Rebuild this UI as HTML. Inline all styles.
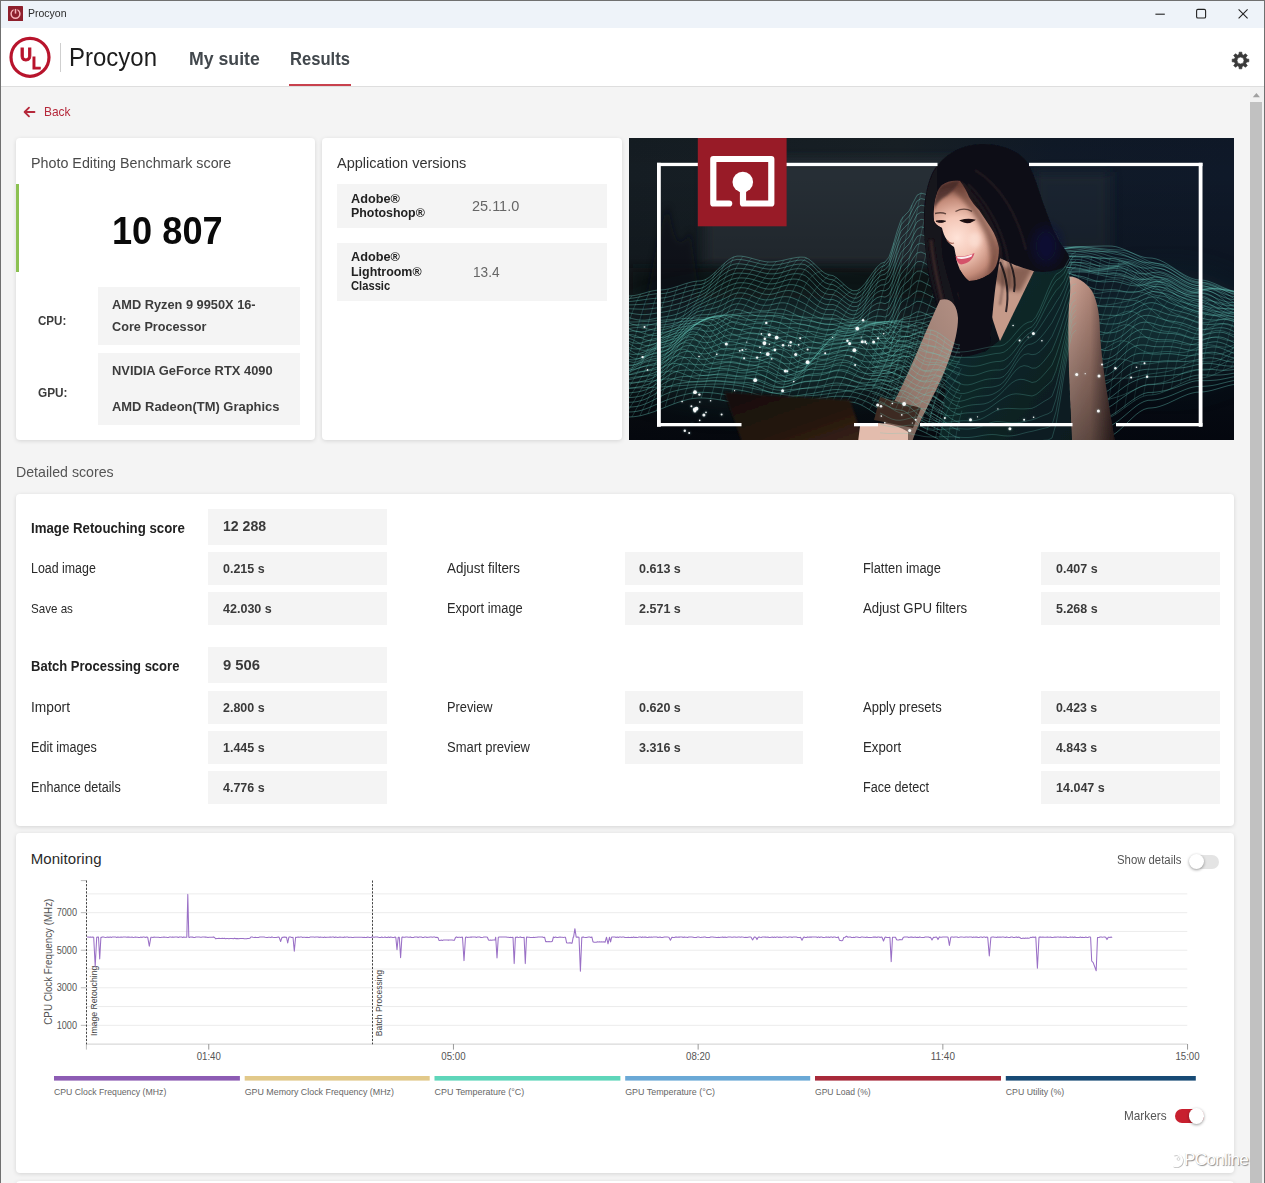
<!DOCTYPE html>
<html lang="en"><head><meta charset="utf-8"><title>Procyon</title>
<style>
html,body{margin:0;padding:0}
body{width:1265px;height:1183px;position:relative;overflow:hidden;background:#f4f4f4;font-family:"Liberation Sans",sans-serif}
.t{position:absolute;white-space:nowrap;line-height:1;display:block;transform-origin:0 0}
.abs{position:absolute}
.card{position:absolute;background:#fff;border-radius:4px;box-shadow:0 1px 4px rgba(0,0,0,.13)}
.box{position:absolute;background:#f4f4f4}
</style></head><body>

<div class="abs" style="left:0;top:0;width:1265px;height:28px;background:#eef3f9"></div>
<div class="abs" style="left:0;top:28px;width:1265px;height:58px;background:#fff"></div>
<div class="abs" style="left:0;top:86px;width:1265px;height:1px;background:#dedede"></div>
<svg class="abs" style="left:8px;top:6px" width="15" height="15" viewBox="0 0 15 15"><rect width="15" height="15" rx=".6" fill="#8e1f2c"/><circle cx="7.5" cy="7.8" r="4.4" fill="none" stroke="#f6b4ba" stroke-width="1.5"/><rect x="5.6" y="2.4" width="3.8" height="3.4" fill="#8e1f2c"/><rect x="6.75" y="3" width="1.5" height="4.6" fill="#f6b4ba"/></svg>
<span class="t" style="left:27.60px;top:8.42px;font-size:11.20px;transform:scaleX(0.9394);color:#2b2b2b;">Procyon</span>
<svg class="abs" style="left:1140px;top:0" width="125" height="28" viewBox="0 0 125 28" fill="none" stroke="#222" stroke-width="1.1">
<path d="M15.4 14.2H24.8"/><rect x="56.6" y="9.4" width="9" height="8.6" rx="1.3"/><path d="M98.6 9.4l9 9M107.6 9.4l-9 9"/></svg>
<svg class="abs" style="left:8px;top:35px" width="45" height="45" viewBox="0 0 45 45">
<circle cx="22" cy="22.3" r="19" fill="#fff" stroke="#b8142c" stroke-width="3.2"/>
</svg>
<span class="t" style="left:20.20px;top:46.47px;font-size:18.94px;transform:scaleX(0.8700);color:#b8142c;font-weight:700;-webkit-text-stroke:1px #b8142c;">U</span>
<span class="t" style="left:31.50px;top:55.44px;font-size:16.37px;transform:scaleX(0.8700);color:#b8142c;font-weight:700;-webkit-text-stroke:1px #b8142c;">L</span>
<div class="abs" style="left:59.5px;top:43px;width:1px;height:29px;background:#cfcfcf"></div>
<span class="t" style="left:69.30px;top:45.33px;font-size:25.60px;transform:scaleX(0.9370);color:#1c1c1c;">Procyon</span>
<span class="t" style="left:188.50px;top:49.86px;font-size:18.60px;transform:scaleX(0.9514);color:#42484d;font-weight:700;">My suite</span>
<span class="t" style="left:290.20px;top:49.86px;font-size:18.60px;transform:scaleX(0.8930);color:#42484d;font-weight:700;">Results</span>
<div class="abs" style="left:289.4px;top:84px;width:61.2px;height:2px;background:#c8414d"></div>
<svg class="abs" style="left:1230px;top:50px" width="21" height="21" viewBox="-10.5 -10.5 21 21"><path d="M6.02 -1.47 L8.29 -1.34 L8.29 1.34 L6.02 1.47 L5.30 3.22 L6.81 4.92 L4.92 6.81 L3.22 5.30 L1.47 6.02 L1.34 8.29 L-1.34 8.29 L-1.47 6.02 L-3.22 5.30 L-4.92 6.81 L-6.81 4.92 L-5.30 3.22 L-6.02 1.47 L-8.29 1.34 L-8.29 -1.34 L-6.02 -1.47 L-5.30 -3.22 L-6.81 -4.92 L-4.92 -6.81 L-3.22 -5.30 L-1.47 -6.02 L-1.34 -8.29 L1.34 -8.29 L1.47 -6.02 L3.22 -5.30 L4.92 -6.81 L6.81 -4.92 L5.30 -3.22Z M3.5 0A3.5 3.5 0 1 0 -3.5 0A3.5 3.5 0 1 0 3.5 0Z" fill="#3a3a3a" fill-rule="evenodd" stroke="#3a3a3a" stroke-width="0.7" stroke-linejoin="round"/></svg>
<svg class="abs" style="left:23px;top:106px" width="13" height="12" viewBox="0 0 13 12" fill="none" stroke="#b5283a" stroke-width="1.8" stroke-linecap="round" stroke-linejoin="round"><path d="M11.5 6H2M6 1.6L1.6 6L6 10.4"/></svg>
<span class="t" style="left:44.30px;top:105.49px;font-size:13.60px;transform:scaleX(0.8765);color:#b5283a;">Back</span>
<div class="abs" style="left:1250px;top:87px;width:14px;height:1096px;background:#f1f1f1"></div>
<div class="abs" style="left:1250px;top:102px;width:12px;height:1081px;background:#c1c1c1"></div>
<svg class="abs" style="left:1252px;top:92px" width="9" height="6" viewBox="0 0 9 6"><path d="M0.8 5.2L4.4 1L8 5.2Z" fill="#a0a0a0"/></svg>
<div class="card" style="left:15.5px;top:138px;width:299.5px;height:301.5px"></div>
<div class="card" style="left:322px;top:138px;width:299.5px;height:301.5px"></div>
<span class="t" style="left:30.90px;top:154.50px;font-size:15.00px;transform:scaleX(0.9533);color:#4a4a4a;">Photo Editing Benchmark score</span>
<div class="abs" style="left:15.5px;top:184px;width:3.5px;height:88px;background:#8cc152"></div>
<span class="t" style="left:111.60px;top:212.13px;font-size:38.00px;transform:scaleX(0.9516);color:#0a0a0a;font-weight:700;">10 807</span>
<div class="box" style="left:98px;top:287px;width:202px;height:58px"></div>
<div class="box" style="left:98px;top:352.6px;width:202px;height:72.6px"></div>
<span class="t" style="left:38.00px;top:313.54px;font-size:13.31px;transform:scaleX(0.8700);color:#3c3c3c;font-weight:700;">CPU:</span>
<span class="t" style="left:38.00px;top:385.92px;font-size:13.56px;transform:scaleX(0.8700);color:#3c3c3c;font-weight:700;">GPU:</span>
<span class="t" style="left:112.30px;top:298.39px;font-size:13.60px;transform:scaleX(0.9411);color:#3c3c3c;font-weight:700;">AMD Ryzen 9 9950X 16-</span>
<span class="t" style="left:112.30px;top:320.09px;font-size:13.60px;transform:scaleX(0.9320);color:#3c3c3c;font-weight:700;">Core Processor</span>
<span class="t" style="left:112.30px;top:363.59px;font-size:13.60px;transform:scaleX(0.9478);color:#3c3c3c;font-weight:700;">NVIDIA GeForce RTX 4090</span>
<span class="t" style="left:112.30px;top:400.29px;font-size:13.60px;transform:scaleX(0.9514);color:#3c3c3c;font-weight:700;">AMD Radeon(TM) Graphics</span>
<span class="t" style="left:337.00px;top:154.50px;font-size:15.00px;transform:scaleX(0.9692);color:#333;">Application versions</span>
<div class="box" style="left:337px;top:184.4px;width:269.7px;height:43.5px"></div>
<div class="box" style="left:337px;top:243.1px;width:269.7px;height:58.2px"></div>
<span class="t" style="left:351.20px;top:191.89px;font-size:13.60px;transform:scaleX(0.9326);color:#222;font-weight:700;">Adobe®</span>
<span class="t" style="left:351.20px;top:206.49px;font-size:13.60px;transform:scaleX(0.9108);color:#222;font-weight:700;">Photoshop®</span>
<span class="t" style="left:472.10px;top:198.13px;font-size:15.20px;transform:scaleX(0.9539);color:#666;">25.11.0</span>
<span class="t" style="left:351.20px;top:250.29px;font-size:13.60px;transform:scaleX(0.9326);color:#222;font-weight:700;">Adobe®</span>
<span class="t" style="left:351.20px;top:265.19px;font-size:13.60px;transform:scaleX(0.9139);color:#222;font-weight:700;">Lightroom®</span>
<span class="t" style="left:351.20px;top:280.21px;font-size:12.86px;transform:scaleX(0.8700);color:#222;font-weight:700;">Classic</span>
<span class="t" style="left:472.60px;top:263.83px;font-size:15.20px;transform:scaleX(0.8991);color:#666;">13.4</span>
<svg class="abs" style="left:629px;top:138px" width="605" height="302" viewBox="629 138 605 302">
<defs>
<filter id="b6" x="-30%" y="-30%" width="160%" height="160%"><feGaussianBlur stdDeviation="6"/></filter>
<filter id="b3" x="-30%" y="-30%" width="160%" height="160%"><feGaussianBlur stdDeviation="3"/></filter>
<filter id="b2" x="-30%" y="-30%" width="160%" height="160%"><feGaussianBlur stdDeviation="2"/></filter>
<filter id="b1" x="-30%" y="-30%" width="160%" height="160%"><feGaussianBlur stdDeviation="1.1"/></filter>
<filter id="b05" x="-10%" y="-10%" width="120%" height="120%"><feGaussianBlur stdDeviation="0.6"/></filter>
<filter id="b20" x="-50%" y="-50%" width="200%" height="200%"><feGaussianBlur stdDeviation="22"/></filter>
<linearGradient id="bgx" x1="0" x2="1" y1="0" y2="0"><stop offset="0" stop-color="#151d23"/><stop offset=".45" stop-color="#182026"/><stop offset=".7" stop-color="#101a28"/><stop offset="1" stop-color="#0f1929"/></linearGradient>
<linearGradient id="bgy" x1="0" x2="0" y1="0" y2="1"><stop offset="0" stop-color="#000" stop-opacity=".05"/><stop offset=".12" stop-color="#000" stop-opacity="0"/><stop offset=".55" stop-color="#000" stop-opacity=".25"/><stop offset="1" stop-color="#02040a" stop-opacity=".85"/></linearGradient>
<radialGradient id="face" gradientUnits="userSpaceOnUse" cx="957" cy="238" r="52"><stop offset="0" stop-color="#ffe3d8"/><stop offset=".4" stop-color="#f3c6b6"/><stop offset=".75" stop-color="#c48c7a"/><stop offset="1" stop-color="#7a4c42"/></radialGradient>
<linearGradient id="arm" x1="0" x2="1" y1="0" y2="0"><stop offset="0" stop-color="#d3a99b"/><stop offset=".5" stop-color="#b58a7c"/><stop offset="1" stop-color="#3f2a2b"/></linearGradient>
<linearGradient id="armv" x1="0" x2="0" y1="0" y2="1"><stop offset="0" stop-color="#000" stop-opacity="0"/><stop offset="1" stop-color="#000" stop-opacity=".5"/></linearGradient>
<linearGradient id="arm2" x1="1" x2="0" y1="0" y2="1"><stop offset="0" stop-color="#b28f83"/><stop offset=".6" stop-color="#94786d"/><stop offset="1" stop-color="#5e4a42"/></linearGradient>
<linearGradient id="dress" x1="0" x2="1" y1="0" y2="1"><stop offset="0" stop-color="#14302f"/><stop offset="1" stop-color="#0b1a1f"/></linearGradient>
<linearGradient id="lap" x1="0" x2="1" y1="0" y2="1"><stop offset="0" stop-color="#150e0c"/><stop offset=".6" stop-color="#24160f"/><stop offset="1" stop-color="#3a2415"/></linearGradient>
<clipPath id="pc"><rect x="629" y="138" width="605" height="302"/></clipPath>
</defs>
<g clip-path="url(#pc)">
<rect x="629" y="138" width="605" height="302" fill="url(#bgx)"/>
<rect x="705" y="160" width="300" height="106" fill="#272f34" filter="url(#b6)"/>
<rect x="629" y="268" width="400" height="30" fill="#0d1319" filter="url(#b6)" opacity=".8"/>
<rect x="1034" y="172" width="76" height="80" fill="#1c2530" filter="url(#b6)" opacity=".9"/>
<rect x="629" y="138" width="605" height="302" fill="url(#bgy)"/>
<path d="M640 330C650 290 655 240 668 205C672 230 678 260 690 230C694 260 700 290 700 330Z" fill="#0a0f15" opacity=".6" filter="url(#b3)"/>
<ellipse cx="770" cy="350" rx="150" ry="42" fill="#1c5552" filter="url(#b20)" opacity=".45"/>
<ellipse cx="1165" cy="330" rx="80" ry="42" fill="#1c5552" filter="url(#b20)" opacity=".42"/>
<path d="M625.0 296.0 L629.0 296.0 L633.0 295.7 L637.0 295.0 L641.0 294.0 L645.0 292.9 L649.0 291.7 L653.0 290.8 L657.0 290.2 L661.0 290.0 L665.0 289.6 L669.0 288.8 L673.0 287.8 L677.0 286.5 L681.0 285.2 L685.0 283.8 L689.0 282.7 L693.0 281.7 L697.0 281.1 L701.0 280.9 L705.0 279.8 L709.0 277.5 L713.0 274.2 L717.0 270.5 L721.0 266.5 L725.0 262.8 L729.0 259.5 L733.0 257.2 L737.0 256.1 L741.0 256.1 L745.0 256.7 L749.0 257.6 L753.0 258.7 L757.0 259.8 L761.0 260.8 L765.0 261.6 L769.0 262.0 L773.0 261.9 L777.0 261.4 L781.0 260.7 L785.0 259.8 L789.0 258.9 L793.0 258.1 L797.0 257.4 L801.0 257.1 L805.0 257.3 L809.0 259.3 L813.0 262.6 L817.0 266.5 L821.0 270.3 L825.0 273.4 L829.0 274.9 L833.0 275.6 L837.0 278.1 L841.0 281.6 L845.0 285.4 L849.0 288.7 L853.0 290.7 L857.0 290.6 L861.0 288.0 L865.0 283.5 L869.0 277.9 L873.0 272.2 L877.0 267.1 L881.0 263.4 L885.0 262.0 L889.0 257.1 L893.0 245.5 L897.0 231.5 L901.0 219.9 L905.0 215.0 L909.0 211.1 L913.0 202.9 L917.0 195.3 L921.0 193.1 L925.0 194.1 L929.0 196.0 L933.0 198.0 L937.0 199.6 L941.0 200.2 L945.0 204.7 L949.0 212.8 L953.0 221.5 L957.0 228.2 L961.0 230.0 M625.0 298.6 L629.0 298.5 L633.0 298.1 L637.0 297.4 L641.0 296.6 L645.0 295.7 L649.0 294.8 L653.0 294.2 L657.0 293.7 L661.0 293.7 L665.0 293.3 L669.0 292.5 L673.0 291.4 L677.0 290.2 L681.0 288.9 L685.0 287.7 L689.0 286.5 L693.0 285.6 L697.0 284.9 L701.0 284.5 L705.0 283.1 L709.0 280.5 L713.0 277.0 L717.0 273.1 L721.0 269.1 L725.0 265.5 L729.0 262.5 L733.0 260.3 L737.0 259.4 L741.0 259.6 L745.0 260.2 L749.0 261.0 L753.0 262.0 L757.0 263.0 L761.0 264.0 L765.0 264.7 L769.0 265.2 L773.0 265.2 L777.0 264.8 L781.0 264.1 L785.0 263.2 L789.0 262.2 L793.0 261.2 L797.0 260.4 L801.0 260.0 L805.0 260.4 L809.0 262.6 L813.0 266.1 L817.0 270.3 L821.0 274.3 L825.0 277.5 L829.0 279.2 L833.0 279.8 L837.0 282.1 L841.0 285.4 L845.0 289.0 L849.0 292.2 L853.0 294.2 L857.0 294.1 L861.0 291.5 L865.0 287.1 L869.0 281.6 L873.0 275.8 L877.0 270.6 L881.0 266.9 L885.0 265.4 L889.0 260.7 L893.0 249.4 L897.0 236.1 L901.0 224.9 L905.0 220.3 L909.0 216.6 L913.0 208.5 L917.0 201.0 L921.0 198.6 L925.0 199.5 L929.0 201.2 L933.0 203.1 L937.0 204.7 L941.0 205.4 L945.0 209.9 L949.0 217.8 L953.0 226.4 L957.0 232.9 L961.0 234.6 M625.0 301.8 L629.0 301.5 L633.0 301.2 L637.0 300.7 L641.0 300.1 L645.0 299.5 L649.0 299.0 L653.0 298.5 L657.0 298.2 L661.0 298.1 L665.0 297.7 L669.0 296.8 L673.0 295.7 L677.0 294.5 L681.0 293.3 L685.0 292.1 L689.0 291.0 L693.0 290.0 L697.0 289.0 L701.0 288.3 L705.0 286.5 L709.0 283.6 L713.0 280.0 L717.0 276.2 L721.0 272.4 L725.0 269.0 L729.0 266.3 L733.0 264.4 L737.0 263.7 L741.0 263.9 L745.0 264.4 L749.0 265.1 L753.0 266.0 L757.0 266.9 L761.0 267.9 L765.0 268.7 L769.0 269.2 L773.0 269.3 L777.0 269.0 L781.0 268.2 L785.0 267.2 L789.0 266.1 L793.0 265.0 L797.0 264.3 L801.0 264.0 L805.0 264.6 L809.0 267.1 L813.0 270.9 L817.0 275.3 L821.0 279.4 L825.0 282.6 L829.0 284.1 L833.0 284.6 L837.0 286.7 L841.0 289.8 L845.0 293.2 L849.0 296.3 L853.0 298.2 L857.0 298.1 L861.0 295.6 L865.0 291.1 L869.0 285.6 L873.0 279.8 L877.0 274.6 L881.0 271.0 L885.0 269.6 L889.0 265.2 L893.0 254.5 L897.0 241.8 L901.0 231.2 L905.0 226.8 L909.0 223.1 L913.0 215.2 L917.0 207.7 L921.0 205.2 L925.0 205.9 L929.0 207.5 L933.0 209.5 L937.0 211.1 L941.0 212.0 L945.0 216.4 L949.0 224.2 L953.0 232.5 L957.0 238.8 L961.0 240.5 M625.0 305.1 L629.0 304.9 L633.0 304.8 L637.0 304.6 L641.0 304.4 L645.0 304.1 L649.0 303.8 L653.0 303.3 L657.0 303.0 L661.0 302.8 L665.0 302.2 L669.0 301.4 L673.0 300.3 L677.0 299.2 L681.0 298.1 L685.0 296.9 L689.0 295.6 L693.0 294.3 L697.0 293.0 L701.0 291.9 L705.0 289.8 L709.0 286.7 L713.0 283.2 L717.0 279.5 L721.0 276.1 L725.0 273.1 L729.0 270.7 L733.0 269.0 L737.0 268.3 L741.0 268.4 L745.0 268.8 L749.0 269.4 L753.0 270.2 L757.0 271.2 L761.0 272.2 L765.0 273.2 L769.0 273.8 L773.0 273.9 L777.0 273.5 L781.0 272.7 L785.0 271.5 L789.0 270.3 L793.0 269.2 L797.0 268.7 L801.0 268.7 L805.0 269.7 L809.0 272.5 L813.0 276.5 L817.0 281.0 L821.0 285.0 L825.0 288.0 L829.0 289.3 L833.0 289.6 L837.0 291.4 L841.0 294.3 L845.0 297.6 L849.0 300.6 L853.0 302.4 L857.0 302.3 L861.0 299.7 L865.0 295.2 L869.0 289.6 L873.0 283.8 L877.0 278.8 L881.0 275.3 L885.0 274.2 L889.0 270.3 L893.0 260.3 L897.0 248.2 L901.0 238.0 L905.0 233.7 L909.0 230.0 L913.0 222.1 L917.0 214.6 L921.0 212.1 L925.0 212.8 L929.0 214.4 L933.0 216.5 L937.0 218.3 L941.0 219.2 L945.0 223.6 L949.0 231.1 L953.0 239.2 L957.0 245.2 L961.0 247.0 M625.0 308.7 L629.0 308.7 L633.0 308.9 L637.0 309.1 L641.0 309.2 L645.0 309.2 L649.0 308.9 L653.0 308.4 L657.0 307.9 L661.0 307.6 L665.0 307.0 L669.0 306.1 L673.0 305.1 L677.0 304.1 L681.0 302.9 L685.0 301.7 L689.0 300.1 L693.0 298.5 L697.0 296.7 L701.0 295.2 L705.0 292.9 L709.0 289.8 L713.0 286.5 L717.0 283.2 L721.0 280.2 L725.0 277.6 L729.0 275.5 L733.0 273.9 L737.0 273.1 L741.0 273.1 L745.0 273.4 L749.0 273.9 L753.0 274.7 L757.0 275.8 L761.0 277.0 L765.0 278.1 L769.0 278.8 L773.0 278.8 L777.0 278.3 L781.0 277.2 L785.0 275.9 L789.0 274.7 L793.0 273.9 L797.0 273.6 L801.0 274.1 L805.0 275.5 L809.0 278.6 L813.0 282.7 L817.0 287.1 L821.0 290.9 L825.0 293.5 L829.0 294.5 L833.0 294.6 L837.0 296.2 L841.0 299.0 L845.0 302.2 L849.0 305.0 L853.0 306.7 L857.0 306.4 L861.0 303.6 L865.0 299.0 L869.0 293.5 L873.0 287.8 L877.0 283.0 L881.0 279.9 L885.0 279.3 L889.0 275.9 L893.0 266.6 L897.0 255.1 L901.0 245.2 L905.0 240.8 L909.0 237.0 L913.0 229.1 L917.0 221.8 L921.0 219.3 L925.0 220.0 L929.0 221.9 L933.0 224.1 L937.0 226.0 L941.0 227.1 L945.0 231.3 L949.0 238.5 L953.0 246.3 L957.0 252.2 L961.0 254.1 M625.0 312.5 L629.0 312.9 L633.0 313.6 L637.0 314.2 L641.0 314.6 L645.0 314.6 L649.0 314.3 L653.0 313.7 L657.0 313.0 L661.0 312.5 L665.0 311.8 L669.0 311.0 L673.0 310.1 L677.0 309.1 L681.0 307.9 L685.0 306.3 L689.0 304.4 L693.0 302.2 L697.0 300.1 L701.0 298.2 L705.0 295.9 L709.0 293.0 L713.0 290.0 L717.0 287.2 L721.0 284.7 L725.0 282.5 L729.0 280.5 L733.0 279.0 L737.0 278.1 L741.0 277.9 L745.0 278.1 L749.0 278.6 L753.0 279.5 L757.0 280.8 L761.0 282.1 L765.0 283.3 L769.0 283.9 L773.0 283.8 L777.0 283.1 L781.0 281.9 L785.0 280.6 L789.0 279.5 L793.0 279.0 L797.0 279.2 L801.0 280.2 L805.0 282.0 L809.0 285.2 L813.0 289.3 L817.0 293.3 L821.0 296.7 L825.0 298.9 L829.0 299.6 L833.0 299.5 L837.0 301.1 L841.0 303.7 L845.0 306.8 L849.0 309.4 L853.0 310.9 L857.0 310.3 L861.0 307.4 L865.0 302.7 L869.0 297.2 L873.0 291.9 L877.0 287.5 L881.0 285.0 L885.0 284.8 L889.0 281.9 L893.0 273.2 L897.0 262.2 L901.0 252.5 L905.0 248.0 L909.0 244.0 L913.0 236.2 L917.0 229.1 L921.0 226.8 L925.0 227.8 L929.0 229.8 L933.0 232.2 L937.0 234.2 L941.0 235.3 L945.0 239.3 L949.0 246.2 L953.0 253.8 L957.0 259.7 L961.0 261.9 M625.0 316.9 L629.0 317.7 L633.0 318.8 L637.0 319.7 L641.0 320.2 L645.0 320.2 L649.0 319.7 L653.0 318.9 L657.0 318.0 L661.0 317.4 L665.0 316.8 L669.0 316.0 L673.0 315.2 L677.0 314.1 L681.0 312.6 L685.0 310.7 L689.0 308.3 L693.0 305.7 L697.0 303.1 L701.0 301.1 L705.0 298.9 L709.0 296.4 L713.0 294.0 L717.0 291.7 L721.0 289.6 L725.0 287.6 L729.0 285.7 L733.0 284.1 L737.0 283.0 L741.0 282.7 L745.0 282.9 L749.0 283.5 L753.0 284.7 L757.0 286.1 L761.0 287.6 L765.0 288.7 L769.0 289.2 L773.0 288.9 L777.0 287.9 L781.0 286.7 L785.0 285.5 L789.0 284.7 L793.0 284.7 L797.0 285.5 L801.0 286.9 L805.0 289.0 L809.0 292.2 L813.0 296.0 L817.0 299.6 L821.0 302.4 L825.0 304.2 L829.0 304.7 L833.0 304.5 L837.0 306.0 L841.0 308.5 L845.0 311.4 L849.0 313.8 L853.0 314.9 L857.0 314.0 L861.0 310.9 L865.0 306.2 L869.0 301.0 L873.0 296.1 L877.0 292.4 L881.0 290.5 L885.0 290.8 L889.0 288.3 L893.0 280.1 L897.0 269.4 L901.0 259.8 L905.0 255.1 L909.0 251.0 L913.0 243.4 L917.0 236.6 L921.0 234.7 L925.0 236.0 L929.0 238.2 L933.0 240.8 L937.0 242.8 L941.0 243.8 L945.0 247.6 L949.0 254.3 L953.0 261.7 L957.0 267.7 L961.0 270.3 M625.0 321.7 L629.0 323.0 L633.0 324.5 L637.0 325.6 L641.0 326.1 L645.0 325.9 L649.0 325.1 L653.0 324.0 L657.0 323.0 L661.0 322.4 L665.0 321.8 L669.0 321.1 L673.0 320.3 L677.0 319.0 L681.0 317.1 L685.0 314.7 L689.0 311.8 L693.0 308.7 L697.0 306.0 L701.0 304.1 L705.0 302.2 L709.0 300.2 L713.0 298.4 L717.0 296.6 L721.0 294.8 L725.0 292.9 L729.0 290.9 L733.0 289.2 L737.0 288.0 L741.0 287.7 L745.0 287.9 L749.0 288.8 L753.0 290.2 L757.0 291.8 L761.0 293.3 L765.0 294.3 L769.0 294.5 L773.0 294.0 L777.0 292.9 L781.0 291.7 L785.0 290.8 L789.0 290.5 L793.0 291.1 L797.0 292.4 L801.0 294.2 L805.0 296.4 L809.0 299.4 L813.0 302.7 L817.0 305.6 L821.0 308.0 L825.0 309.4 L829.0 309.6 L833.0 309.5 L837.0 310.9 L841.0 313.3 L845.0 316.0 L849.0 318.0 L853.0 318.6 L857.0 317.4 L861.0 314.2 L865.0 309.7 L869.0 304.9 L873.0 300.7 L877.0 297.7 L881.0 296.4 L885.0 297.1 L889.0 294.9 L893.0 287.0 L897.0 276.5 L901.0 266.9 L905.0 262.1 L909.0 258.0 L913.0 250.8 L917.0 244.6 L921.0 243.1 L925.0 244.7 L929.0 247.1 L933.0 249.6 L937.0 251.6 L941.0 252.5 L945.0 256.2 L949.0 262.8 L953.0 270.1 L957.0 276.4 L961.0 279.4 M625.0 327.1 L629.0 328.8 L633.0 330.5 L637.0 331.6 L641.0 331.9 L645.0 331.4 L649.0 330.3 L653.0 329.0 L657.0 328.0 L661.0 327.4 L665.0 326.9 L669.0 326.3 L673.0 325.2 L677.0 323.6 L681.0 321.2 L685.0 318.3 L689.0 314.9 L693.0 311.6 L697.0 308.9 L701.0 307.3 L705.0 305.9 L709.0 304.5 L713.0 303.2 L717.0 301.8 L721.0 300.2 L725.0 298.3 L729.0 296.2 L733.0 294.2 L737.0 293.0 L741.0 292.8 L745.0 293.3 L749.0 294.4 L753.0 296.0 L757.0 297.7 L761.0 299.1 L765.0 299.9 L769.0 299.8 L773.0 299.1 L777.0 298.0 L781.0 297.0 L785.0 296.6 L789.0 296.9 L793.0 298.1 L797.0 299.8 L801.0 301.8 L805.0 303.8 L809.0 306.4 L813.0 309.1 L817.0 311.5 L821.0 313.3 L825.0 314.4 L829.0 314.6 L833.0 314.5 L837.0 315.8 L841.0 318.1 L845.0 320.4 L849.0 321.9 L853.0 322.1 L857.0 320.6 L861.0 317.4 L865.0 313.2 L869.0 309.1 L873.0 305.6 L877.0 303.4 L881.0 302.7 L885.0 303.7 L889.0 301.7 L893.0 293.9 L897.0 283.5 L901.0 274.0 L905.0 269.1 L909.0 265.1 L913.0 258.5 L917.0 253.0 L921.0 252.0 L925.0 253.8 L929.0 256.3 L933.0 258.8 L937.0 260.6 L941.0 261.5 L945.0 265.2 L949.0 271.7 L953.0 279.2 L957.0 285.7 L961.0 289.1 M625.0 332.9 L629.0 335.0 L633.0 336.7 L637.0 337.6 L641.0 337.5 L645.0 336.7 L649.0 335.4 L653.0 334.0 L657.0 333.0 L661.0 332.5 L665.0 332.1 L669.0 331.3 L673.0 329.9 L677.0 327.8 L681.0 324.9 L685.0 321.4 L689.0 317.7 L693.0 314.4 L697.0 312.0 L701.0 310.8 L705.0 310.0 L709.0 309.3 L713.0 308.4 L717.0 307.3 L721.0 305.7 L725.0 303.6 L729.0 301.3 L733.0 299.4 L737.0 298.2 L741.0 298.2 L745.0 299.0 L749.0 300.4 L753.0 302.1 L757.0 303.8 L761.0 305.0 L765.0 305.4 L769.0 305.1 L773.0 304.3 L777.0 303.3 L781.0 302.8 L785.0 302.9 L789.0 303.9 L793.0 305.6 L797.0 307.6 L801.0 309.5 L805.0 311.2 L809.0 313.2 L813.0 315.2 L817.0 317.0 L821.0 318.4 L825.0 319.3 L829.0 319.5 L833.0 319.5 L837.0 320.8 L841.0 322.7 L845.0 324.6 L849.0 325.6 L853.0 325.4 L857.0 323.7 L861.0 320.7 L865.0 317.1 L869.0 313.7 L873.0 311.1 L877.0 309.6 L881.0 309.4 L885.0 310.4 L889.0 308.3 L893.0 300.6 L897.0 290.4 L901.0 281.0 L905.0 276.2 L909.0 272.6 L913.0 266.6 L917.0 261.8 L921.0 261.3 L925.0 263.3 L929.0 265.8 L933.0 268.2 L937.0 269.9 L941.0 270.8 L945.0 274.5 L949.0 281.1 L953.0 288.8 L957.0 295.6 L961.0 299.4 M625.0 339.1 L629.0 341.3 L633.0 342.9 L637.0 343.4 L641.0 343.0 L645.0 341.8 L649.0 340.4 L653.0 339.0 L657.0 338.1 L661.0 337.6 L665.0 337.1 L669.0 336.1 L673.0 334.3 L677.0 331.7 L681.0 328.2 L685.0 324.3 L689.0 320.5 L693.0 317.4 L697.0 315.4 L701.0 314.8 L705.0 314.7 L709.0 314.5 L713.0 313.9 L717.0 312.8 L721.0 311.1 L725.0 308.8 L729.0 306.5 L733.0 304.6 L737.0 303.7 L741.0 304.0 L745.0 305.1 L749.0 306.7 L753.0 308.4 L757.0 309.9 L761.0 310.8 L765.0 310.9 L769.0 310.5 L773.0 309.7 L777.0 309.1 L781.0 309.1 L785.0 309.9 L789.0 311.4 L793.0 313.4 L797.0 315.5 L801.0 317.1 L805.0 318.3 L809.0 319.6 L813.0 321.0 L817.0 322.3 L821.0 323.4 L825.0 324.3 L829.0 324.5 L833.0 324.5 L837.0 325.6 L841.0 327.2 L845.0 328.5 L849.0 329.0 L853.0 328.4 L857.0 326.8 L861.0 324.1 L865.0 321.3 L869.0 318.8 L873.0 317.0 L877.0 316.1 L881.0 316.2 L885.0 317.1 L889.0 314.8 L893.0 307.1 L897.0 297.1 L901.0 288.0 L905.0 283.6 L909.0 280.4 L913.0 275.2 L917.0 271.2 L921.0 271.0 L925.0 273.1 L929.0 275.5 L933.0 277.7 L937.0 279.3 L941.0 280.3 L945.0 284.2 L949.0 291.0 L953.0 299.0 L957.0 305.9 L961.0 309.8 M625.0 345.5 L629.0 347.6 L633.0 348.8 L637.0 349.0 L641.0 348.2 L645.0 346.8 L649.0 345.3 L653.0 344.0 L657.0 343.1 L661.0 342.7 L665.0 342.0 L669.0 340.6 L673.0 338.3 L677.0 335.1 L681.0 331.2 L685.0 327.1 L689.0 323.4 L693.0 320.7 L697.0 319.4 L701.0 319.4 L705.0 319.8 L709.0 320.0 L713.0 319.5 L717.0 318.3 L721.0 316.4 L725.0 314.1 L729.0 311.7 L733.0 310.0 L737.0 309.4 L741.0 310.1 L745.0 311.5 L749.0 313.2 L753.0 314.8 L757.0 316.0 L761.0 316.6 L765.0 316.4 L769.0 315.9 L773.0 315.4 L777.0 315.3 L781.0 315.9 L785.0 317.3 L789.0 319.3 L793.0 321.5 L797.0 323.3 L801.0 324.5 L805.0 325.0 L809.0 325.6 L813.0 326.5 L817.0 327.4 L821.0 328.4 L825.0 329.3 L829.0 329.6 L833.0 329.5 L837.0 330.3 L841.0 331.4 L845.0 332.1 L849.0 332.2 L853.0 331.5 L857.0 330.0 L861.0 328.0 L865.0 326.0 L869.0 324.3 L873.0 323.3 L877.0 322.9 L881.0 323.0 L885.0 323.6 L889.0 321.1 L893.0 313.5 L897.0 303.9 L901.0 295.3 L905.0 291.3 L909.0 288.7 L913.0 284.3 L917.0 280.9 L921.0 281.0 L925.0 283.1 L929.0 285.3 L933.0 287.3 L937.0 289.0 L941.0 290.3 L945.0 294.5 L949.0 301.5 L953.0 309.6 L957.0 316.6 L961.0 320.4 M625.0 352.0 L629.0 353.7 L633.0 354.5 L637.0 354.2 L641.0 353.1 L645.0 351.6 L649.0 350.2 L653.0 349.0 L657.0 348.2 L661.0 347.7 L665.0 346.7 L669.0 344.8 L673.0 341.9 L677.0 338.2 L681.0 334.0 L685.0 330.0 L689.0 326.7 L693.0 324.6 L697.0 323.9 L701.0 324.5 L705.0 325.3 L709.0 325.6 L713.0 325.1 L717.0 323.8 L721.0 321.7 L725.0 319.3 L729.0 317.1 L733.0 315.8 L737.0 315.5 L741.0 316.5 L745.0 318.1 L749.0 319.8 L753.0 321.2 L757.0 322.1 L761.0 322.3 L765.0 322.0 L769.0 321.6 L773.0 321.5 L777.0 322.0 L781.0 323.3 L785.0 325.2 L789.0 327.4 L793.0 329.4 L797.0 330.8 L801.0 331.4 L805.0 331.3 L809.0 331.3 L813.0 331.7 L817.0 332.5 L821.0 333.4 L825.0 334.3 L829.0 334.6 L833.0 334.4 L837.0 334.8 L841.0 335.4 L845.0 335.6 L849.0 335.4 L853.0 334.7 L857.0 333.7 L861.0 332.4 L865.0 331.2 L869.0 330.4 L873.0 329.9 L877.0 329.7 L881.0 329.6 L885.0 329.9 L889.0 327.2 L893.0 319.9 L897.0 310.7 L901.0 302.8 L905.0 299.5 L909.0 297.5 L913.0 293.9 L917.0 291.0 L921.0 291.3 L925.0 293.2 L929.0 295.2 L933.0 297.2 L937.0 299.0 L941.0 300.7 L945.0 305.2 L949.0 312.5 L953.0 320.6 L957.0 327.4 L961.0 330.8 M625.0 358.2 L629.0 359.5 L633.0 359.9 L637.0 359.2 L641.0 357.9 L645.0 356.4 L649.0 355.1 L653.0 354.0 L657.0 353.2 L661.0 352.5 L665.0 351.0 L669.0 348.6 L673.0 345.2 L677.0 341.1 L681.0 336.9 L685.0 333.2 L689.0 330.4 L693.0 329.0 L697.0 329.0 L701.0 330.1 L705.0 331.1 L709.0 331.3 L713.0 330.7 L717.0 329.1 L721.0 326.9 L725.0 324.6 L729.0 322.8 L733.0 321.8 L737.0 322.0 L741.0 323.3 L745.0 324.9 L749.0 326.4 L753.0 327.5 L757.0 328.0 L761.0 328.0 L765.0 327.8 L769.0 327.7 L773.0 328.1 L777.0 329.2 L781.0 331.1 L785.0 333.3 L789.0 335.4 L793.0 337.1 L797.0 337.9 L801.0 337.8 L805.0 337.1 L809.0 336.7 L813.0 336.9 L817.0 337.5 L821.0 338.5 L825.0 339.4 L829.0 339.6 L833.0 339.1 L837.0 339.1 L841.0 339.1 L845.0 339.0 L849.0 338.7 L853.0 338.2 L857.0 337.7 L861.0 337.2 L865.0 336.9 L869.0 336.7 L873.0 336.5 L877.0 336.4 L881.0 336.1 L885.0 336.0 L889.0 333.2 L893.0 326.3 L897.0 317.9 L901.0 310.8 L905.0 308.1 L909.0 306.8 L913.0 303.8 L917.0 301.3 L921.0 301.6 L925.0 303.3 L929.0 305.3 L933.0 307.3 L937.0 309.3 L941.0 311.5 L945.0 316.4 L949.0 323.8 L953.0 331.6 L957.0 338.0 L961.0 340.9 M625.0 364.2 L629.0 365.0 L633.0 364.9 L637.0 364.0 L641.0 362.6 L645.0 361.2 L649.0 360.0 L653.0 359.0 L657.0 358.1 L661.0 357.0 L665.0 355.0 L669.0 352.0 L673.0 348.3 L677.0 344.1 L681.0 340.1 L685.0 336.9 L689.0 334.8 L693.0 334.1 L697.0 334.6 L701.0 335.9 L705.0 336.9 L709.0 337.0 L713.0 336.1 L717.0 334.3 L721.0 332.2 L725.0 330.2 L729.0 328.7 L733.0 328.2 L737.0 328.8 L741.0 330.2 L745.0 331.7 L749.0 332.9 L753.0 333.7 L757.0 333.9 L761.0 333.8 L765.0 333.8 L769.0 334.2 L773.0 335.2 L777.0 336.9 L781.0 339.1 L785.0 341.3 L789.0 343.2 L793.0 344.4 L797.0 344.5 L801.0 343.8 L805.0 342.6 L809.0 342.0 L813.0 342.1 L817.0 342.7 L821.0 343.7 L825.0 344.5 L829.0 344.4 L833.0 343.6 L837.0 343.2 L841.0 342.8 L845.0 342.5 L849.0 342.2 L853.0 342.2 L857.0 342.4 L861.0 342.6 L865.0 342.9 L869.0 343.1 L873.0 343.2 L877.0 342.9 L881.0 342.3 L885.0 342.0 L889.0 339.3 L893.0 332.9 L897.0 325.4 L901.0 319.3 L905.0 317.3 L909.0 316.5 L913.0 313.9 L917.0 311.8 L921.0 312.0 L925.0 313.6 L929.0 315.5 L933.0 317.7 L937.0 320.1 L941.0 322.8 L945.0 327.9 L949.0 335.2 L953.0 342.6 L957.0 348.3 L961.0 350.4 M625.0 369.7 L629.0 370.1 L633.0 369.7 L637.0 368.6 L641.0 367.3 L645.0 366.1 L649.0 365.0 L653.0 363.9 L657.0 362.8 L661.0 361.2 L665.0 358.7 L669.0 355.3 L673.0 351.3 L677.0 347.3 L681.0 343.7 L685.0 341.1 L689.0 339.8 L693.0 339.6 L697.0 340.5 L701.0 341.9 L705.0 342.7 L709.0 342.5 L713.0 341.4 L717.0 339.6 L721.0 337.6 L725.0 336.0 L729.0 335.0 L733.0 334.9 L737.0 335.7 L741.0 337.1 L745.0 338.4 L749.0 339.3 L753.0 339.8 L757.0 339.9 L761.0 339.9 L765.0 340.2 L769.0 341.1 L773.0 342.7 L777.0 344.8 L781.0 347.1 L785.0 349.2 L789.0 350.6 L793.0 351.1 L797.0 350.6 L801.0 349.4 L805.0 348.0 L809.0 347.3 L813.0 347.3 L817.0 348.0 L821.0 348.9 L825.0 349.5 L829.0 349.2 L833.0 348.0 L837.0 347.2 L841.0 346.6 L845.0 346.2 L849.0 346.2 L853.0 346.6 L857.0 347.5 L861.0 348.4 L865.0 349.1 L869.0 349.6 L873.0 349.6 L877.0 349.1 L881.0 348.4 L885.0 347.9 L889.0 345.4 L893.0 339.8 L897.0 333.4 L901.0 328.3 L905.0 326.8 L909.0 326.4 L913.0 324.2 L917.0 322.2 L921.0 322.4 L925.0 324.0 L929.0 325.9 L933.0 328.4 L937.0 331.2 L941.0 334.3 L945.0 339.6 L949.0 346.5 L953.0 353.3 L957.0 358.1 L961.0 359.4 M625.0 374.9 L629.0 374.9 L633.0 374.3 L637.0 373.2 L641.0 372.0 L645.0 370.9 L649.0 369.9 L653.0 368.7 L657.0 367.2 L661.0 365.1 L665.0 362.2 L669.0 358.6 L673.0 354.6 L677.0 350.9 L681.0 347.9 L685.0 346.0 L689.0 345.3 L693.0 345.6 L697.0 346.6 L701.0 347.8 L705.0 348.4 L709.0 347.9 L713.0 346.6 L717.0 344.9 L721.0 343.3 L725.0 342.1 L729.0 341.6 L733.0 341.8 L737.0 342.8 L741.0 344.0 L745.0 345.0 L749.0 345.6 L753.0 345.9 L757.0 345.9 L761.0 346.2 L765.0 347.0 L769.0 348.4 L773.0 350.4 L777.0 352.7 L781.0 354.9 L785.0 356.6 L789.0 357.5 L793.0 357.3 L797.0 356.3 L801.0 354.8 L805.0 353.3 L809.0 352.6 L813.0 352.7 L817.0 353.4 L821.0 354.1 L825.0 354.4 L829.0 353.8 L833.0 352.3 L837.0 351.3 L841.0 350.6 L845.0 350.4 L849.0 350.7 L853.0 351.7 L857.0 353.1 L861.0 354.4 L865.0 355.4 L869.0 355.9 L873.0 355.8 L877.0 355.2 L881.0 354.4 L885.0 353.9 L889.0 351.9 L893.0 347.2 L897.0 341.9 L901.0 337.6 L905.0 336.6 L909.0 336.4 L913.0 334.5 L917.0 332.7 L921.0 332.9 L925.0 334.5 L929.0 336.6 L933.0 339.4 L937.0 342.6 L941.0 346.1 L945.0 351.2 L949.0 357.6 L953.0 363.5 L957.0 367.3 L961.0 367.9 M625.0 379.8 L629.0 379.5 L633.0 378.8 L637.0 377.8 L641.0 376.8 L645.0 375.8 L649.0 374.7 L653.0 373.3 L657.0 371.4 L661.0 368.9 L665.0 365.7 L669.0 362.0 L673.0 358.3 L677.0 355.1 L681.0 352.8 L685.0 351.5 L689.0 351.3 L693.0 351.8 L697.0 352.7 L701.0 353.6 L705.0 353.9 L709.0 353.2 L713.0 351.9 L717.0 350.5 L721.0 349.2 L725.0 348.5 L729.0 348.4 L733.0 348.9 L737.0 349.8 L741.0 350.8 L745.0 351.5 L749.0 351.9 L753.0 352.0 L757.0 352.3 L761.0 352.9 L765.0 354.1 L769.0 356.0 L773.0 358.2 L777.0 360.5 L781.0 362.4 L785.0 363.6 L789.0 363.8 L793.0 363.1 L797.0 361.8 L801.0 360.1 L805.0 358.7 L809.0 358.0 L813.0 358.2 L817.0 358.8 L821.0 359.3 L825.0 359.3 L829.0 358.3 L833.0 356.7 L837.0 355.5 L841.0 354.9 L845.0 355.0 L849.0 355.8 L853.0 357.1 L857.0 358.9 L861.0 360.5 L865.0 361.6 L869.0 362.0 L873.0 361.8 L877.0 361.1 L881.0 360.4 L885.0 360.2 L889.0 358.7 L893.0 355.1 L897.0 350.8 L901.0 347.3 L905.0 346.6 L909.0 346.5 L913.0 344.8 L917.0 343.2 L921.0 343.5 L925.0 345.2 L929.0 347.6 L933.0 350.7 L937.0 354.2 L941.0 357.8 L945.0 362.6 L949.0 368.3 L953.0 373.2 L957.0 376.1 L961.0 376.0 M625.0 384.4 L629.0 383.9 L633.0 383.3 L637.0 382.5 L641.0 381.6 L645.0 380.6 L649.0 379.4 L653.0 377.7 L657.0 375.4 L661.0 372.6 L665.0 369.3 L669.0 365.8 L673.0 362.5 L677.0 359.9 L681.0 358.2 L685.0 357.5 L689.0 357.5 L693.0 358.0 L697.0 358.7 L701.0 359.3 L705.0 359.2 L709.0 358.5 L713.0 357.3 L717.0 356.2 L721.0 355.4 L725.0 355.1 L729.0 355.3 L733.0 355.9 L737.0 356.6 L741.0 357.4 L745.0 357.9 L749.0 358.2 L753.0 358.4 L757.0 358.9 L761.0 359.9 L765.0 361.5 L769.0 363.6 L773.0 365.9 L777.0 368.0 L781.0 369.4 L785.0 370.0 L789.0 369.7 L793.0 368.6 L797.0 367.1 L801.0 365.5 L805.0 364.2 L809.0 363.7 L813.0 363.8 L817.0 364.2 L821.0 364.5 L825.0 364.1 L829.0 362.9 L833.0 361.2 L837.0 360.1 L841.0 359.7 L845.0 360.2 L849.0 361.3 L853.0 363.0 L857.0 364.9 L861.0 366.5 L865.0 367.6 L869.0 367.9 L873.0 367.6 L877.0 367.0 L881.0 366.6 L885.0 366.8 L889.0 366.0 L893.0 363.3 L897.0 360.0 L901.0 357.2 L905.0 356.6 L909.0 356.5 L913.0 355.0 L917.0 353.7 L921.0 354.2 L925.0 356.1 L929.0 358.8 L933.0 362.2 L937.0 365.8 L941.0 369.3 L945.0 373.7 L949.0 378.4 L953.0 382.4 L957.0 384.4 L961.0 383.9 M625.0 388.8 L629.0 388.4 L633.0 387.9 L637.0 387.2 L641.0 386.4 L645.0 385.3 L649.0 383.9 L653.0 381.9 L657.0 379.4 L661.0 376.5 L665.0 373.3 L669.0 370.1 L673.0 367.4 L677.0 365.3 L681.0 364.2 L685.0 363.7 L689.0 363.8 L693.0 364.2 L697.0 364.6 L701.0 364.8 L705.0 364.6 L709.0 363.8 L713.0 362.9 L717.0 362.2 L721.0 361.8 L725.0 361.8 L729.0 362.2 L733.0 362.8 L737.0 363.4 L741.0 364.0 L745.0 364.3 L749.0 364.6 L753.0 365.0 L757.0 365.8 L761.0 367.2 L765.0 369.1 L769.0 371.2 L773.0 373.3 L777.0 375.0 L781.0 375.9 L785.0 376.0 L789.0 375.2 L793.0 373.9 L797.0 372.4 L801.0 371.0 L805.0 369.9 L809.0 369.5 L813.0 369.5 L817.0 369.7 L821.0 369.6 L825.0 369.0 L829.0 367.7 L833.0 366.1 L837.0 365.1 L841.0 365.1 L845.0 365.8 L849.0 367.2 L853.0 368.9 L857.0 370.9 L861.0 372.4 L865.0 373.3 L869.0 373.6 L873.0 373.4 L877.0 373.1 L881.0 373.1 L885.0 373.7 L889.0 373.7 L893.0 371.9 L897.0 369.3 L901.0 367.1 L905.0 366.6 L909.0 366.5 L913.0 365.3 L917.0 364.3 L921.0 365.1 L925.0 367.2 L929.0 370.1 L933.0 373.6 L937.0 377.2 L941.0 380.5 L945.0 384.2 L949.0 388.1 L953.0 391.1 L957.0 392.5 L961.0 391.8 M625.0 393.3 L629.0 392.9 L633.0 392.5 L637.0 392.0 L641.0 391.2 L645.0 390.0 L649.0 388.4 L653.0 386.2 L657.0 383.5 L661.0 380.7 L665.0 377.7 L669.0 375.0 L673.0 372.8 L677.0 371.3 L681.0 370.4 L685.0 370.1 L689.0 370.1 L693.0 370.2 L697.0 370.3 L701.0 370.3 L705.0 369.9 L709.0 369.3 L713.0 368.7 L717.0 368.4 L721.0 368.3 L725.0 368.6 L729.0 369.0 L733.0 369.5 L737.0 370.0 L741.0 370.4 L745.0 370.7 L749.0 371.1 L753.0 371.8 L757.0 372.9 L761.0 374.6 L765.0 376.5 L769.0 378.5 L773.0 380.3 L777.0 381.5 L781.0 381.9 L785.0 381.6 L789.0 380.6 L793.0 379.3 L797.0 377.9 L801.0 376.7 L805.0 375.8 L809.0 375.4 L813.0 375.3 L817.0 375.2 L821.0 374.8 L825.0 374.0 L829.0 372.7 L833.0 371.3 L837.0 370.7 L841.0 370.9 L845.0 371.8 L849.0 373.2 L853.0 374.9 L857.0 376.7 L861.0 378.0 L865.0 378.9 L869.0 379.2 L873.0 379.3 L877.0 379.4 L881.0 379.9 L885.0 381.1 L889.0 381.6 L893.0 380.6 L897.0 378.8 L901.0 376.9 L905.0 376.5 L909.0 376.4 L913.0 375.5 L917.0 375.0 L921.0 376.1 L925.0 378.5 L929.0 381.5 L933.0 384.9 L937.0 388.3 L941.0 391.2 L945.0 394.3 L949.0 397.3 L953.0 399.6 L957.0 400.5 L961.0 399.8 M625.0 397.8 L629.0 397.6 L633.0 397.3 L637.0 396.8 L641.0 395.9 L645.0 394.6 L649.0 392.8 L653.0 390.6 L657.0 388.0 L661.0 385.3 L665.0 382.7 L669.0 380.5 L673.0 378.7 L677.0 377.5 L681.0 376.8 L685.0 376.5 L689.0 376.3 L693.0 376.1 L697.0 375.8 L701.0 375.7 L705.0 375.3 L709.0 374.9 L713.0 374.7 L717.0 374.7 L721.0 374.9 L725.0 375.3 L729.0 375.7 L733.0 376.2 L737.0 376.5 L741.0 376.9 L745.0 377.3 L749.0 377.9 L753.0 378.9 L757.0 380.2 L761.0 381.9 L765.0 383.7 L769.0 385.5 L773.0 386.8 L777.0 387.5 L781.0 387.6 L785.0 387.0 L789.0 386.0 L793.0 384.8 L797.0 383.6 L801.0 382.6 L805.0 381.8 L809.0 381.4 L813.0 381.2 L817.0 380.8 L821.0 380.2 L825.0 379.3 L829.0 378.1 L833.0 377.0 L837.0 376.6 L841.0 377.0 L845.0 378.0 L849.0 379.3 L853.0 380.8 L857.0 382.3 L861.0 383.5 L865.0 384.3 L869.0 384.9 L873.0 385.3 L877.0 386.0 L881.0 387.1 L885.0 388.7 L889.0 389.8 L893.0 389.4 L897.0 388.2 L901.0 386.7 L905.0 386.3 L909.0 386.4 L913.0 385.8 L917.0 385.8 L921.0 387.2 L925.0 389.7 L929.0 392.7 L933.0 396.0 L937.0 399.0 L941.0 401.5 L945.0 403.9 L949.0 406.3 L953.0 408.0 L957.0 408.7 L961.0 408.1 M625.0 402.4 L629.0 402.3 L633.0 402.1 L637.0 401.6 L641.0 400.6 L645.0 399.3 L649.0 397.4 L653.0 395.2 L657.0 392.8 L661.0 390.5 L665.0 388.3 L669.0 386.4 L673.0 385.0 L677.0 383.9 L681.0 383.2 L685.0 382.7 L689.0 382.2 L693.0 381.8 L697.0 381.4 L701.0 381.1 L705.0 380.9 L709.0 380.7 L713.0 380.8 L717.0 381.0 L721.0 381.4 L725.0 381.8 L729.0 382.3 L733.0 382.7 L737.0 383.1 L741.0 383.5 L745.0 384.1 L749.0 384.9 L753.0 386.0 L757.0 387.4 L761.0 389.0 L765.0 390.6 L769.0 392.0 L773.0 392.9 L777.0 393.3 L781.0 393.1 L785.0 392.4 L789.0 391.5 L793.0 390.5 L797.0 389.6 L801.0 388.8 L805.0 388.1 L809.0 387.6 L813.0 387.1 L817.0 386.6 L821.0 385.9 L825.0 385.0 L829.0 384.0 L833.0 383.2 L837.0 383.0 L841.0 383.4 L845.0 384.2 L849.0 385.3 L853.0 386.4 L857.0 387.6 L861.0 388.8 L865.0 389.7 L869.0 390.7 L873.0 391.7 L877.0 392.9 L881.0 394.5 L885.0 396.5 L889.0 398.0 L893.0 398.2 L897.0 397.5 L901.0 396.3 L905.0 396.1 L909.0 396.3 L913.0 396.2 L917.0 396.7 L921.0 398.3 L925.0 400.8 L929.0 403.7 L933.0 406.6 L937.0 409.3 L941.0 411.3 L945.0 413.3 L949.0 415.2 L953.0 416.6 L957.0 417.1 L961.0 416.7 M625.0 407.2 L629.0 407.1 L633.0 406.9 L637.0 406.4 L641.0 405.4 L645.0 404.0 L649.0 402.3 L653.0 400.3 L657.0 398.2 L661.0 396.2 L665.0 394.3 L669.0 392.7 L673.0 391.4 L677.0 390.4 L681.0 389.5 L685.0 388.7 L689.0 388.0 L693.0 387.3 L697.0 386.9 L701.0 386.7 L705.0 386.6 L709.0 386.6 L713.0 386.9 L717.0 387.3 L721.0 387.7 L725.0 388.2 L729.0 388.7 L733.0 389.2 L737.0 389.7 L741.0 390.3 L745.0 391.1 L749.0 392.0 L753.0 393.2 L757.0 394.5 L761.0 395.8 L765.0 397.1 L769.0 398.1 L773.0 398.6 L777.0 398.8 L781.0 398.5 L785.0 398.0 L789.0 397.3 L793.0 396.5 L797.0 395.8 L801.0 395.1 L805.0 394.4 L809.0 393.9 L813.0 393.3 L817.0 392.6 L821.0 391.8 L825.0 391.0 L829.0 390.3 L833.0 389.7 L837.0 389.5 L841.0 389.8 L845.0 390.4 L849.0 391.1 L853.0 391.8 L857.0 392.9 L861.0 394.0 L865.0 395.3 L869.0 396.7 L873.0 398.3 L877.0 400.1 L881.0 402.2 L885.0 404.4 L889.0 406.2 L893.0 406.8 L897.0 406.7 L901.0 405.9 L905.0 405.8 L909.0 406.3 L913.0 406.7 L917.0 407.6 L921.0 409.4 L925.0 411.7 L929.0 414.3 L933.0 416.9 L937.0 419.2 L941.0 421.0 L945.0 422.7 L949.0 424.2 L953.0 425.4 L957.0 426.0 L961.0 425.8 M625.0 412.0 L629.0 412.0 L633.0 411.8 L637.0 411.3 L641.0 410.4 L645.0 409.1 L649.0 407.6 L653.0 405.9 L657.0 404.1 L661.0 402.4 L665.0 400.7 L669.0 399.2 L673.0 397.9 L677.0 396.6 L681.0 395.5 L685.0 394.5 L689.0 393.6 L693.0 392.9 L697.0 392.4 L701.0 392.3 L705.0 392.4 L709.0 392.6 L713.0 392.9 L717.0 393.4 L721.0 394.0 L725.0 394.5 L729.0 395.1 L733.0 395.8 L737.0 396.4 L741.0 397.2 L745.0 398.1 L749.0 399.1 L753.0 400.1 L757.0 401.2 L761.0 402.3 L765.0 403.1 L769.0 403.8 L773.0 404.2 L777.0 404.3 L781.0 404.1 L785.0 403.8 L789.0 403.3 L793.0 402.8 L797.0 402.2 L801.0 401.6 L805.0 401.0 L809.0 400.3 L813.0 399.6 L817.0 398.9 L821.0 398.2 L825.0 397.5 L829.0 396.9 L833.0 396.4 L837.0 396.2 L841.0 396.2 L845.0 396.4 L849.0 396.6 L853.0 397.1 L857.0 398.0 L861.0 399.4 L865.0 401.0 L869.0 402.9 L873.0 405.1 L877.0 407.5 L881.0 409.9 L885.0 412.3 L889.0 414.2 L893.0 415.4 L897.0 415.7 L901.0 415.5 L905.0 415.6 L909.0 416.2 L913.0 417.1 L917.0 418.3 L921.0 420.1 L925.0 422.3 L929.0 424.6 L933.0 426.8 L937.0 428.8 L941.0 430.6 L945.0 432.1 L949.0 433.5 L953.0 434.6 L957.0 435.2 L961.0 435.3 M625.0 417.0 L629.0 417.0 L633.0 416.8 L637.0 416.3 L641.0 415.6 L645.0 414.5 L649.0 413.3 L653.0 412.0 L657.0 410.5 L661.0 408.9 L665.0 407.3 L669.0 405.7 L673.0 404.2 L677.0 402.7 L681.0 401.4 L685.0 400.2 L689.0 399.2 L693.0 398.5 L697.0 398.1 L701.0 398.0 L705.0 398.1 L709.0 398.4 L713.0 398.8 L717.0 399.4 L721.0 400.0 L725.0 400.8 L729.0 401.6 L733.0 402.4 L737.0 403.3 L741.0 404.2 L745.0 405.1 L749.0 406.0 L753.0 406.8 L757.0 407.6 L761.0 408.3 L765.0 408.9 L769.0 409.4 L773.0 409.7 L777.0 410.0 L781.0 410.0 L785.0 409.9 L789.0 409.6 L793.0 409.3 L797.0 408.8 L801.0 408.3 L805.0 407.7 L809.0 407.0 L813.0 406.3 L817.0 405.7 L821.0 405.0 L825.0 404.3 L829.0 403.7 L833.0 403.2 L837.0 402.7 L841.0 402.4 L845.0 402.1 L849.0 402.0 L853.0 402.2 L857.0 403.2 L861.0 404.8 L865.0 407.0 L869.0 409.4 L873.0 412.1 L877.0 414.9 L881.0 417.6 L885.0 420.0 L889.0 422.2 L893.0 423.8 L897.0 424.8 L901.0 425.0 L905.0 425.4 L909.0 426.2 L913.0 427.4 L917.0 428.9 L921.0 430.6 L925.0 432.5 L929.0 434.5 L933.0 436.5 L937.0 438.4 L941.0 440.3 L945.0 441.9 L949.0 443.2 L953.0 444.2 L957.0 444.9 L961.0 445.0" fill="none" stroke="#6cd4c6" stroke-opacity="0.62" stroke-width="0.60"/><path d="M632.2 295.8 L631.2 297.0 L630.1 298.4 L629.1 299.9 L628.0 301.6 L627.1 303.2 L626.1 305.0 L625.2 306.8 M641.0 294.0 L640.0 295.4 L639.0 297.0 L638.0 298.8 L637.1 300.7 L636.2 302.6 L635.3 304.7 L634.4 306.8 L633.6 308.9 L632.7 311.1 L631.9 313.4 L631.1 315.7 L630.3 318.1 L629.5 320.5 L628.7 322.9 L627.9 325.4 L627.1 327.9 L626.3 330.5 L625.4 333.1 M650.0 291.5 L649.0 293.1 L648.1 295.0 L647.2 297.1 L646.3 299.4 L645.5 301.7 L644.6 304.1 L643.8 306.6 L643.0 309.2 L642.1 311.9 L641.3 314.6 L640.5 317.3 L639.7 320.1 L638.9 322.9 L638.1 325.8 L637.3 328.6 L636.5 331.5 L635.7 334.4 L634.8 337.2 L634.0 340.1 L633.1 342.9 L632.2 345.7 L631.3 348.4 L630.3 351.2 L629.4 353.8 L628.4 356.5 L627.3 359.1 L626.3 361.7 L625.2 364.2 M659.1 290.0 L658.2 291.7 L657.4 293.7 L656.5 295.9 L655.7 298.3 L654.8 300.7 L654.0 303.2 L653.2 305.8 L652.4 308.5 L651.6 311.3 L650.8 314.0 L650.0 316.8 L649.2 319.7 L648.4 322.5 L647.6 325.4 L646.7 328.3 L645.9 331.2 L645.0 334.1 L644.1 336.9 L643.2 339.8 L642.3 342.7 L641.3 345.5 L640.3 348.4 L639.3 351.2 L638.3 354.0 L637.2 356.7 L636.1 359.4 L635.0 362.1 L633.8 364.8 L632.6 367.4 L631.4 369.9 L630.1 372.4 L628.8 374.9 L627.5 377.3 L626.1 379.7 M668.4 289.0 L667.6 290.9 L666.7 293.0 L665.9 295.3 L665.1 297.6 L664.3 300.0 L663.5 302.5 L662.7 305.0 L661.9 307.5 L661.1 310.0 L660.3 312.5 L659.5 315.1 L658.6 317.7 L657.8 320.3 L656.9 323.0 L656.0 325.7 L655.1 328.4 L654.2 331.2 L653.2 334.0 L652.3 336.7 L651.3 339.6 L650.2 342.4 L649.2 345.2 L648.1 348.1 L647.0 350.9 L645.8 353.7 L644.6 356.6 L643.4 359.4 L642.2 362.2 L640.9 365.0 L639.6 367.8 L638.2 370.5 L636.9 373.2 L635.5 375.9 L634.0 378.5 L632.6 381.1 L631.1 383.6 L629.6 386.1 L628.1 388.5 L626.5 390.9 M677.8 286.2 L677.0 288.2 L676.2 290.4 L675.4 292.8 L674.6 295.3 L673.8 297.8 L673.0 300.3 L672.2 302.9 L671.3 305.5 L670.5 308.2 L669.7 310.9 L668.8 313.6 L667.9 316.2 L667.0 318.9 L666.1 321.6 L665.2 324.3 L664.2 327.0 L663.2 329.7 L662.2 332.4 L661.2 335.1 L660.1 337.7 L659.0 340.3 L657.8 343.0 L656.6 345.7 L655.4 348.5 L654.2 351.3 L652.9 354.1 L651.6 356.9 L650.3 359.7 L648.9 362.5 L647.6 365.3 L646.1 368.2 L644.7 371.0 L643.2 373.8 L641.7 376.6 L640.2 379.4 L638.7 382.1 L637.1 384.8 L635.6 387.4 L634.0 390.1 L632.4 392.6 L630.8 395.1 L629.2 397.6 L627.6 400.0 L626.0 402.4 M687.3 283.2 L686.5 285.2 L685.7 287.5 L684.9 289.9 L684.0 292.4 L683.2 295.0 L682.4 297.6 L681.6 300.3 L680.7 303.0 L679.8 305.8 L679.0 308.5 L678.0 311.3 L677.1 314.1 L676.2 316.8 L675.2 319.6 L674.2 322.4 L673.1 325.2 L672.1 327.9 L671.0 330.7 L669.8 333.5 L668.7 336.2 L667.5 339.0 L666.2 341.7 L665.0 344.4 L663.7 347.1 L662.4 349.8 L661.0 352.4 L659.7 355.1 L658.2 357.8 L656.8 360.5 L655.4 363.3 L653.9 366.1 L652.4 368.9 L650.8 371.7 L649.3 374.6 L647.7 377.4 L646.2 380.3 L644.6 383.1 L643.0 385.9 L641.4 388.7 L639.8 391.4 L638.2 394.2 L636.6 396.8 L635.0 399.5 L633.4 402.1 L631.8 404.6 L630.3 407.1 L628.7 409.6 L627.2 412.0 L625.7 414.5 M696.7 281.2 L695.9 283.0 L695.1 285.2 L694.3 287.5 L693.5 289.9 L692.6 292.3 L691.7 294.7 L690.9 297.2 L690.0 299.8 L689.0 302.3 L688.1 304.9 L687.1 307.5 L686.1 310.1 L685.1 312.7 L684.0 315.3 L683.0 318.0 L681.8 320.7 L680.7 323.4 L679.5 326.1 L678.3 328.9 L677.0 331.6 L675.8 334.4 L674.5 337.2 L673.1 340.1 L671.7 342.9 L670.3 345.8 L668.9 348.6 L667.5 351.5 L666.0 354.4 L664.5 357.2 L663.0 360.1 L661.5 362.9 L659.9 365.7 L658.3 368.6 L656.8 371.5 L655.2 374.4 L653.6 377.4 L652.0 380.3 L650.4 383.3 L648.8 386.2 L647.2 389.2 L645.6 392.1 L644.0 395.0 L642.4 397.8 L640.9 400.7 L639.3 403.5 L637.8 406.2 L636.3 408.9 L634.8 411.6 L633.4 414.3 L631.9 416.9 M706.2 279.2 L705.3 281.2 L704.5 283.3 L703.7 285.5 L702.8 287.7 L701.9 289.8 L701.0 291.9 L700.0 293.9 L699.1 295.9 L698.1 298.0 L697.1 300.1 L696.0 302.2 L694.9 304.4 L693.8 306.6 L692.7 309.0 L691.5 311.3 L690.3 313.8 L689.1 316.3 L687.8 318.8 L686.5 321.4 L685.2 324.1 L683.8 326.9 L682.4 329.7 L681.0 332.6 L679.6 335.5 L678.1 338.5 L676.6 341.5 L675.1 344.6 L673.6 347.6 L672.1 350.8 L670.5 353.9 L668.9 357.0 L667.3 360.2 L665.7 363.3 L664.1 366.4 L662.5 369.6 L660.9 372.7 L659.4 375.8 L657.8 378.9 L656.2 382.0 L654.6 385.2 L653.0 388.3 L651.5 391.5 L650.0 394.6 L648.4 397.7 L647.0 400.8 L645.5 403.9 L644.0 406.9 L642.6 409.9 L641.2 412.9 L639.9 415.8 M715.6 271.9 L714.7 273.9 L713.8 276.2 L712.9 278.6 L712.0 281.0 L711.0 283.4 L710.0 285.8 L709.0 288.3 L708.0 290.6 L706.9 293.0 L705.8 295.3 L704.7 297.6 L703.5 299.8 L702.3 301.9 L701.1 304.0 L699.9 306.1 L698.6 308.1 L697.3 310.3 L695.9 312.5 L694.5 314.9 L693.1 317.3 L691.7 319.8 L690.3 322.5 L688.8 325.2 L687.3 328.0 L685.7 330.9 L684.2 333.9 L682.7 336.9 L681.1 340.0 L679.5 343.2 L677.9 346.4 L676.3 349.7 L674.7 353.0 L673.1 356.3 L671.5 359.7 L669.9 363.0 L668.3 366.4 L666.8 369.8 L665.2 373.1 L663.6 376.5 L662.1 379.9 L660.6 383.2 L659.1 386.6 L657.6 390.0 L656.2 393.3 L654.7 396.7 L653.3 400.1 L652.0 403.5 L650.6 406.9 L649.3 410.3 L648.0 413.6 M724.8 262.9 L723.9 264.9 L722.9 267.3 L722.0 269.8 L721.0 272.4 L720.0 275.1 L718.9 277.8 L717.8 280.6 L716.7 283.4 L715.6 286.2 L714.4 289.0 L713.2 291.8 L711.9 294.6 L710.6 297.4 L709.3 300.1 L708.0 302.7 L706.6 305.3 L705.2 307.8 L703.8 310.3 L702.4 312.6 L700.9 314.8 L699.4 317.0 L697.9 319.3 L696.4 321.6 L694.8 324.1 L693.2 326.7 L691.7 329.3 L690.1 332.1 L688.5 335.0 L686.9 338.0 L685.3 341.0 L683.7 344.1 L682.1 347.3 L680.5 350.6 L678.9 353.9 L677.4 357.2 L675.8 360.6 L674.2 364.1 L672.7 367.5 L671.2 371.0 L669.7 374.5 L668.3 378.1 L666.8 381.6 L665.4 385.2 L664.0 388.8 L662.7 392.4 L661.4 396.0 L660.1 399.7 L658.8 403.3 L657.6 407.0 L656.4 410.7 M733.9 256.8 L732.9 258.6 L731.9 260.8 L730.9 263.2 L729.8 265.9 L728.7 268.6 L727.6 271.5 L726.4 274.4 L725.2 277.5 L724.0 280.6 L722.7 283.7 L721.4 286.9 L720.1 290.1 L718.7 293.3 L717.3 296.5 L715.9 299.6 L714.5 302.7 L713.0 305.8 L711.5 308.8 L710.0 311.7 L708.5 314.5 L707.0 317.2 L705.4 319.9 L703.8 322.4 L702.3 324.8 L700.7 327.2 L699.1 329.5 L697.5 331.8 L695.9 334.3 L694.3 336.9 L692.7 339.6 L691.1 342.4 L689.5 345.3 L687.9 348.3 L686.4 351.3 L684.9 354.5 L683.4 357.7 L681.9 361.0 L680.4 364.3 L678.9 367.7 L677.5 371.1 L676.1 374.6 L674.8 378.1 L673.4 381.7 L672.1 385.3 L670.9 388.9 L669.6 392.5 L668.4 396.2 L667.2 399.9 L666.1 403.6 L665.0 407.3 M742.8 256.4 L741.8 257.8 L740.7 259.6 L739.6 261.6 L738.4 263.7 L737.2 265.9 L736.0 268.4 L734.8 271.0 L733.5 273.8 L732.2 276.7 L730.8 279.7 L729.4 282.9 L728.0 286.1 L726.6 289.5 L725.2 292.8 L723.7 296.2 L722.2 299.7 L720.7 303.1 L719.1 306.5 L717.6 309.8 L716.0 313.1 L714.4 316.4 L712.8 319.6 L711.2 322.6 L709.6 325.6 L708.0 328.5 L706.4 331.3 L704.8 334.0 L703.3 336.6 L701.7 339.1 L700.1 341.5 L698.6 344.0 L697.0 346.6 L695.5 349.2 L694.0 352.0 L692.5 354.8 L691.1 357.7 L689.6 360.7 L688.2 363.8 L686.8 366.9 L685.5 370.1 L684.2 373.3 L682.9 376.6 L681.6 379.9 L680.4 383.3 L679.2 386.7 L678.1 390.1 L677.0 393.5 L675.9 397.0 L674.8 400.4 L673.8 403.9 M751.6 258.3 L750.4 259.5 L749.2 261.1 L748.0 262.8 L746.8 264.7 L745.5 266.7 L744.2 268.8 L742.9 270.9 L741.5 273.2 L740.1 275.5 L738.7 277.9 L737.3 280.5 L735.8 283.2 L734.3 286.2 L732.8 289.2 L731.3 292.5 L729.7 295.8 L728.2 299.2 L726.6 302.7 L725.0 306.2 L723.4 309.8 L721.8 313.3 L720.2 316.8 L718.6 320.3 L717.0 323.8 L715.4 327.1 L713.8 330.4 L712.3 333.6 L710.7 336.7 L709.2 339.7 L707.6 342.7 L706.1 345.6 L704.6 348.3 L703.2 351.1 L701.7 353.7 L700.3 356.4 L698.9 359.0 L697.6 361.7 L696.2 364.5 L695.0 367.3 L693.7 370.2 L692.5 373.2 L691.3 376.2 L690.1 379.2 L688.9 382.2 L687.8 385.3 L686.8 388.4 L685.7 391.5 L684.7 394.6 L683.7 397.7 L682.8 400.8 M760.1 260.6 L758.8 261.7 L757.6 263.2 L756.3 264.7 L755.0 266.4 L753.6 268.2 L752.2 270.0 L750.8 272.0 L749.4 274.0 L747.9 276.0 L746.4 278.2 L744.9 280.4 L743.4 282.8 L741.9 285.2 L740.3 287.7 L738.7 290.3 L737.2 293.0 L735.6 295.9 L734.0 299.0 L732.4 302.2 L730.8 305.6 L729.2 309.0 L727.6 312.5 L726.0 316.1 L724.4 319.6 L722.9 323.2 L721.3 326.7 L719.8 330.2 L718.3 333.7 L716.8 337.1 L715.3 340.4 L713.8 343.7 L712.4 346.9 L711.0 350.0 L709.7 353.0 L708.3 356.0 L707.0 358.9 L705.7 361.8 L704.5 364.6 L703.3 367.4 L702.1 370.2 L700.9 373.0 L699.8 375.7 L698.7 378.5 L697.7 381.3 L696.7 384.1 L695.7 387.0 L694.7 389.9 L693.7 392.8 L692.8 395.7 L691.9 398.7 M768.4 262.0 L767.0 263.2 L765.7 264.8 L764.3 266.5 L762.9 268.3 L761.5 270.1 L760.1 272.0 L758.6 273.9 L757.1 275.8 L755.6 277.8 L754.0 279.8 L752.5 281.9 L750.9 284.0 L749.3 286.2 L747.7 288.5 L746.1 290.8 L744.6 293.2 L743.0 295.7 L741.4 298.2 L739.8 300.9 L738.2 303.6 L736.6 306.5 L735.0 309.6 L733.5 312.7 L731.9 316.0 L730.4 319.4 L728.9 322.8 L727.4 326.3 L726.0 329.8 L724.5 333.2 L723.1 336.7 L721.7 340.1 L720.4 343.5 L719.1 346.9 L717.8 350.2 L716.5 353.4 L715.3 356.7 L714.1 359.8 L712.9 362.9 L711.8 366.0 L710.7 369.0 L709.7 372.0 L708.6 375.0 L707.6 377.9 L706.6 380.8 L705.7 383.7 L704.7 386.6 L703.8 389.4 L702.9 392.3 L702.1 395.2 L701.2 398.0 M776.4 261.5 L775.0 263.1 L773.6 265.1 L772.2 267.2 L770.7 269.3 L769.2 271.5 L767.7 273.7 L766.2 275.8 L764.6 278.0 L763.1 280.1 L761.5 282.3 L759.9 284.4 L758.3 286.6 L756.7 288.8 L755.1 291.0 L753.5 293.3 L751.9 295.6 L750.3 297.9 L748.8 300.3 L747.2 302.8 L745.6 305.3 L744.1 307.9 L742.5 310.5 L741.0 313.3 L739.5 316.1 L738.1 319.0 L736.6 321.9 L735.2 325.0 L733.8 328.2 L732.5 331.5 L731.1 334.8 L729.8 338.2 L728.6 341.6 L727.3 345.0 L726.1 348.4 L725.0 351.8 L723.8 355.1 L722.7 358.5 L721.6 361.8 L720.6 365.0 L719.6 368.3 L718.6 371.5 L717.6 374.7 L716.7 377.8 L715.7 380.9 L714.9 383.9 L714.0 387.0 L713.1 389.9 L712.3 392.8 L711.5 395.7 L710.6 398.6 M784.3 260.0 L782.8 261.8 L781.4 264.0 L779.9 266.3 L778.3 268.8 L776.8 271.2 L775.2 273.8 L773.7 276.3 L772.1 278.9 L770.5 281.4 L768.9 283.9 L767.3 286.4 L765.7 288.9 L764.1 291.3 L762.5 293.7 L760.9 296.1 L759.3 298.6 L757.8 301.0 L756.2 303.5 L754.7 306.0 L753.2 308.5 L751.7 311.1 L750.2 313.7 L748.7 316.4 L747.3 319.1 L745.9 321.9 L744.5 324.7 L743.2 327.6 L741.9 330.5 L740.6 333.5 L739.4 336.5 L738.2 339.6 L737.0 342.7 L735.8 345.9 L734.7 349.2 L733.6 352.5 L732.5 355.8 L731.5 359.1 L730.5 362.4 L729.5 365.7 L728.6 369.0 L727.7 372.2 L726.8 375.5 L725.9 378.7 L725.0 381.8 L724.2 385.0 L723.3 388.0 L722.5 391.1 L721.7 394.1 L720.9 397.0 L720.1 399.9 M792.0 258.3 L790.5 260.0 L788.9 262.2 L787.4 264.5 L785.8 267.0 L784.2 269.5 L782.7 272.2 L781.1 274.9 L779.5 277.7 L777.9 280.4 L776.3 283.3 L774.7 286.1 L773.1 288.9 L771.5 291.7 L769.9 294.5 L768.4 297.2 L766.8 300.0 L765.3 302.7 L763.8 305.4 L762.3 308.1 L760.9 310.8 L759.4 313.5 L758.0 316.2 L756.6 319.0 L755.3 321.8 L754.0 324.6 L752.7 327.4 L751.4 330.3 L750.2 333.2 L749.0 336.2 L747.8 339.1 L746.7 342.1 L745.6 345.2 L744.5 348.2 L743.5 351.3 L742.5 354.4 L741.5 357.5 L740.5 360.6 L739.6 363.8 L738.7 366.9 L737.8 370.1 L736.9 373.3 L736.1 376.5 L735.2 379.6 L734.4 382.8 L733.6 386.0 L732.8 389.2 L732.0 392.3 L731.2 395.5 L730.4 398.6 L729.6 401.7 M799.5 257.2 L798.0 258.6 L796.4 260.5 L794.8 262.7 L793.2 265.0 L791.6 267.4 L790.0 270.0 L788.4 272.6 L786.8 275.3 L785.2 278.1 L783.7 281.0 L782.1 283.9 L780.5 286.8 L779.0 289.8 L777.4 292.7 L775.9 295.7 L774.4 298.7 L773.0 301.7 L771.5 304.6 L770.1 307.6 L768.7 310.5 L767.4 313.4 L766.0 316.3 L764.7 319.2 L763.4 322.2 L762.2 325.1 L761.0 328.0 L759.8 330.9 L758.7 333.9 L757.6 336.9 L756.5 339.9 L755.4 342.9 L754.4 345.9 L753.4 348.9 L752.5 352.0 L751.5 355.1 L750.6 358.2 L749.7 361.4 L748.8 364.5 L748.0 367.7 L747.1 370.9 L746.3 374.1 L745.5 377.4 L744.7 380.7 L743.9 383.9 L743.1 387.2 L742.3 390.5 L741.5 393.8 L740.6 397.1 L739.8 400.5 L739.0 403.8 M807.0 258.1 L805.4 258.7 L803.8 260.1 L802.2 262.0 L800.6 264.0 L799.0 266.3 L797.4 268.6 L795.8 271.1 L794.3 273.7 L792.7 276.4 L791.1 279.2 L789.6 282.0 L788.1 284.9 L786.6 287.8 L785.1 290.8 L783.6 293.8 L782.2 296.8 L780.8 299.9 L779.4 302.9 L778.1 306.0 L776.8 309.1 L775.5 312.2 L774.2 315.3 L773.0 318.4 L771.8 321.5 L770.7 324.6 L769.6 327.7 L768.5 330.8 L767.4 334.0 L766.4 337.1 L765.4 340.3 L764.4 343.4 L763.4 346.6 L762.5 349.8 L761.6 353.1 L760.7 356.3 L759.9 359.6 L759.0 362.9 L758.2 366.2 L757.4 369.5 L756.5 372.8 L755.7 376.1 L754.9 379.5 L754.1 382.8 L753.3 386.1 L752.5 389.4 L751.7 392.8 L750.9 396.1 L750.1 399.3 L749.2 402.6 L748.4 405.9 M814.4 263.9 L812.8 263.9 L811.2 264.4 L809.6 265.2 L808.0 266.3 L806.4 267.8 L804.8 269.6 L803.3 271.8 L801.7 274.3 L800.2 276.9 L798.7 279.6 L797.2 282.3 L795.8 285.2 L794.3 288.1 L792.9 291.1 L791.5 294.1 L790.2 297.2 L788.8 300.3 L787.5 303.5 L786.3 306.7 L785.1 309.9 L783.9 313.2 L782.7 316.4 L781.6 319.7 L780.4 323.1 L779.4 326.4 L778.3 329.8 L777.3 333.2 L776.3 336.6 L775.4 340.0 L774.4 343.4 L773.5 346.8 L772.6 350.2 L771.8 353.6 L770.9 357.0 L770.1 360.4 L769.2 363.8 L768.4 367.1 L767.6 370.5 L766.8 373.8 L766.0 377.0 L765.2 380.3 L764.4 383.5 L763.6 386.6 L762.8 389.8 L762.0 392.8 L761.1 395.9 L760.3 398.9 L759.4 401.9 L758.5 404.8 L757.6 407.7 M821.8 271.0 L820.2 271.3 L818.6 271.9 L817.0 272.7 L815.4 273.6 L813.9 274.6 L812.4 275.8 L810.8 277.3 L809.3 278.9 L807.9 280.8 L806.4 283.0 L805.0 285.4 L803.6 288.2 L802.2 291.1 L800.9 294.2 L799.6 297.3 L798.3 300.5 L797.1 303.7 L795.9 307.0 L794.7 310.3 L793.5 313.7 L792.4 317.2 L791.4 320.6 L790.3 324.1 L789.3 327.6 L788.3 331.1 L787.3 334.6 L786.4 338.1 L785.4 341.6 L784.5 345.1 L783.7 348.5 L782.8 352.0 L782.0 355.4 L781.1 358.8 L780.3 362.1 L779.5 365.4 L778.7 368.7 L777.9 371.8 L777.1 375.0 L776.3 378.1 L775.5 381.1 L774.7 384.1 L773.8 387.0 L773.0 389.9 L772.2 392.7 L771.3 395.5 L770.4 398.3 L769.5 401.0 L768.6 403.7 L767.7 406.4 L766.7 409.1 M829.2 274.9 L827.6 276.5 L826.0 278.1 L824.5 279.7 L823.0 281.2 L821.5 282.6 L820.0 284.1 L818.5 285.6 L817.1 287.2 L815.7 288.9 L814.3 290.7 L813.0 292.6 L811.7 294.7 L810.4 297.0 L809.1 299.5 L807.9 302.1 L806.7 304.9 L805.6 307.8 L804.4 310.9 L803.3 314.2 L802.3 317.5 L801.2 320.9 L800.2 324.3 L799.2 327.7 L798.3 331.1 L797.4 334.5 L796.5 337.9 L795.6 341.2 L794.7 344.5 L793.8 347.8 L793.0 351.1 L792.2 354.3 L791.4 357.5 L790.6 360.6 L789.8 363.7 L789.0 366.8 L788.2 369.8 L787.4 372.8 L786.6 375.8 L785.7 378.7 L784.9 381.6 L784.1 384.5 L783.2 387.3 L782.3 390.2 L781.4 393.0 L780.5 395.8 L779.6 398.7 L778.6 401.5 L777.6 404.3 L776.6 407.1 L775.6 409.9 M836.6 277.8 L835.1 278.7 L833.6 280.1 L832.1 281.9 L830.7 284.2 L829.2 286.7 L827.8 289.1 L826.4 291.4 L825.1 293.5 L823.7 295.6 L822.4 297.7 L821.2 299.7 L819.9 301.8 L818.7 303.9 L817.6 306.0 L816.4 308.2 L815.3 310.5 L814.2 312.9 L813.2 315.3 L812.2 317.8 L811.2 320.4 L810.2 323.0 L809.3 325.7 L808.4 328.5 L807.5 331.3 L806.6 334.1 L805.7 337.0 L804.9 339.9 L804.1 342.9 L803.3 345.9 L802.4 348.9 L801.6 351.9 L800.8 354.9 L800.0 357.9 L799.2 360.9 L798.4 363.8 L797.6 366.8 L796.8 369.8 L796.0 372.8 L795.1 375.8 L794.2 378.9 L793.4 381.9 L792.5 385.0 L791.5 388.0 L790.6 391.1 L789.6 394.2 L788.6 397.3 L787.6 400.5 L786.5 403.6 L785.4 406.8 L784.3 409.9 M844.2 284.7 L842.8 285.0 L841.3 285.7 L839.9 286.6 L838.5 287.8 L837.1 289.1 L835.8 290.7 L834.5 292.6 L833.2 294.6 L832.0 296.9 L830.8 299.4 L829.6 302.1 L828.4 304.7 L827.3 307.2 L826.2 309.6 L825.2 311.9 L824.1 314.2 L823.1 316.5 L822.2 318.7 L821.2 321.0 L820.3 323.2 L819.4 325.5 L818.5 327.8 L817.6 330.1 L816.8 332.4 L816.0 334.8 L815.1 337.2 L814.3 339.6 L813.5 342.1 L812.7 344.6 L811.9 347.2 L811.1 349.8 L810.3 352.5 L809.5 355.3 L808.7 358.1 L807.9 360.9 L807.0 363.8 L806.1 366.8 L805.3 369.8 L804.4 372.9 L803.5 376.1 L802.5 379.3 L801.5 382.5 L800.5 385.8 L799.5 389.1 L798.5 392.4 L797.4 395.7 L796.3 399.1 L795.1 402.5 L793.9 405.9 L792.7 409.3 M852.0 290.4 L850.6 291.3 L849.2 292.3 L847.9 293.4 L846.5 294.5 L845.3 295.6 L844.0 296.8 L842.8 298.1 L841.6 299.4 L840.4 300.9 L839.3 302.5 L838.2 304.2 L837.1 306.0 L836.1 308.0 L835.1 310.0 L834.1 312.2 L833.1 314.5 L832.2 316.9 L831.3 319.3 L830.4 321.9 L829.5 324.5 L828.7 327.1 L827.9 329.6 L827.0 332.1 L826.2 334.5 L825.4 336.9 L824.6 339.3 L823.8 341.7 L823.0 344.1 L822.2 346.6 L821.4 349.0 L820.6 351.4 L819.7 353.9 L818.9 356.4 L818.1 358.9 L817.2 361.5 L816.3 364.2 L815.4 366.9 L814.4 369.6 L813.5 372.4 L812.5 375.3 L811.5 378.3 L810.4 381.3 L809.4 384.5 L808.3 387.7 L807.1 390.9 L806.0 394.3 L804.8 397.7 L803.5 401.2 L802.3 404.7 L801.0 408.3 M859.9 288.9 L858.6 291.5 L857.3 294.0 L856.0 296.3 L854.8 298.5 L853.6 300.4 L852.4 302.2 L851.3 304.0 L850.2 305.6 L849.1 307.3 L848.0 308.9 L847.0 310.5 L846.0 312.1 L845.1 313.8 L844.1 315.4 L843.2 317.1 L842.3 318.9 L841.4 320.7 L840.6 322.5 L839.7 324.4 L838.9 326.4 L838.1 328.4 L837.3 330.4 L836.5 332.5 L835.7 334.6 L834.9 336.8 L834.1 339.1 L833.3 341.4 L832.5 343.7 L831.6 346.1 L830.8 348.6 L830.0 351.2 L829.1 353.8 L828.2 356.3 L827.3 358.9 L826.4 361.4 L825.4 364.0 L824.4 366.7 L823.4 369.3 L822.4 372.0 L821.4 374.8 L820.3 377.6 L819.1 380.5 L818.0 383.5 L816.8 386.6 L815.6 389.8 L814.3 393.0 L813.1 396.4 L811.7 399.9 L810.4 403.4 L809.0 407.0 M868.1 279.3 L866.8 282.7 L865.6 286.3 L864.4 289.8 L863.3 293.2 L862.2 296.5 L861.1 299.6 L860.0 302.5 L859.0 305.3 L858.0 307.9 L857.0 310.3 L856.1 312.6 L855.1 314.7 L854.2 316.7 L853.3 318.6 L852.5 320.5 L851.6 322.2 L850.8 323.9 L850.0 325.6 L849.2 327.3 L848.4 329.0 L847.6 330.6 L846.8 332.3 L846.0 333.9 L845.2 335.6 L844.3 337.3 L843.5 339.1 L842.7 340.9 L841.8 342.8 L841.0 344.7 L840.1 346.7 L839.2 348.8 L838.3 351.0 L837.4 353.3 L836.4 355.7 L835.4 358.2 L834.4 360.8 L833.3 363.5 L832.3 366.3 L831.1 369.3 L830.0 372.3 L828.8 375.4 L827.6 378.6 L826.4 381.7 L825.1 384.9 L823.8 388.2 L822.5 391.5 L821.1 395.0 L819.7 398.4 L818.3 402.0 L816.9 405.7 M876.5 267.7 L875.3 270.8 L874.2 274.2 L873.1 277.7 L872.0 281.3 L870.9 284.8 L869.9 288.3 L868.9 291.6 L868.0 294.9 L867.1 298.1 L866.1 301.2 L865.3 304.2 L864.4 307.0 L863.5 309.7 L862.7 312.4 L861.9 314.9 L861.0 317.3 L860.2 319.7 L859.4 322.0 L858.6 324.2 L857.8 326.3 L857.0 328.4 L856.2 330.4 L855.4 332.4 L854.6 334.3 L853.7 336.3 L852.9 338.2 L852.0 340.2 L851.1 342.1 L850.2 344.2 L849.3 346.2 L848.3 348.4 L847.4 350.5 L846.3 352.8 L845.3 355.1 L844.2 357.4 L843.1 359.9 L842.0 362.4 L840.8 365.0 L839.6 367.8 L838.4 370.6 L837.2 373.6 L835.9 376.7 L834.6 379.8 L833.2 383.1 L831.8 386.5 L830.4 390.0 L829.0 393.5 L827.5 397.1 L826.0 400.7 L824.5 404.4 M885.0 262.0 L884.0 263.7 L882.9 265.9 L881.9 268.3 L880.9 271.0 L879.9 273.9 L879.0 276.8 L878.1 279.8 L877.2 282.9 L876.3 286.0 L875.4 289.1 L874.6 292.2 L873.7 295.3 L872.9 298.4 L872.1 301.5 L871.3 304.6 L870.5 307.7 L869.7 310.7 L868.9 313.7 L868.1 316.8 L867.3 319.8 L866.5 322.7 L865.6 325.7 L864.8 328.6 L863.9 331.5 L863.0 334.3 L862.1 337.1 L861.2 339.8 L860.3 342.5 L859.3 345.2 L858.3 347.8 L857.3 350.3 L856.2 352.8 L855.1 355.2 L854.0 357.6 L852.9 360.0 L851.7 362.3 L850.5 364.8 L849.2 367.2 L847.9 369.8 L846.6 372.3 L845.3 375.0 L843.9 377.7 L842.5 380.5 L841.1 383.4 L839.6 386.4 L838.2 389.6 L836.7 392.9 L835.2 396.2 L833.6 399.7 L832.1 403.3 M893.8 242.6 L892.8 247.8 L891.9 253.1 L890.9 258.2 L890.0 263.0 L889.1 267.5 L888.2 271.7 L887.3 275.5 L886.5 278.9 L885.6 282.0 L884.8 284.7 L884.0 287.5 L883.2 290.3 L882.4 293.3 L881.6 296.4 L880.8 299.5 L880.0 302.8 L879.2 306.1 L878.4 309.4 L877.5 312.8 L876.7 316.2 L875.8 319.6 L875.0 323.0 L874.1 326.5 L873.1 329.9 L872.2 333.3 L871.2 336.6 L870.3 339.9 L869.2 343.1 L868.2 346.3 L867.1 349.4 L866.0 352.4 L864.9 355.4 L863.7 358.2 L862.5 361.0 L861.3 363.6 L860.0 366.2 L858.7 368.6 L857.4 371.0 L856.0 373.3 L854.6 375.6 L853.2 377.9 L851.8 380.3 L850.3 382.7 L848.8 385.2 L847.3 387.8 L845.8 390.5 L844.2 393.3 L842.7 396.3 L841.1 399.3 L839.5 402.5 M902.8 216.5 L901.9 220.3 L901.0 224.9 L900.1 230.0 L899.2 235.4 L898.4 241.0 L897.5 246.7 L896.7 252.5 L895.9 258.3 L895.1 264.1 L894.3 269.8 L893.5 275.4 L892.7 280.9 L891.9 286.2 L891.1 291.4 L890.2 296.3 L889.4 301.1 L888.6 305.5 L887.7 309.7 L886.9 313.6 L886.0 317.2 L885.1 320.4 L884.1 323.4 L883.2 326.5 L882.2 329.7 L881.2 332.9 L880.2 336.2 L879.1 339.4 L878.0 342.7 L876.9 346.0 L875.7 349.3 L874.5 352.6 L873.3 355.8 L872.0 358.9 L870.8 362.0 L869.4 365.0 L868.1 367.9 L866.7 370.7 L865.3 373.4 L863.9 375.9 L862.4 378.4 L860.9 380.8 L859.4 383.0 L857.9 385.3 L856.4 387.5 L854.8 389.6 L853.3 391.9 L851.7 394.2 L850.1 396.7 L848.5 399.3 L846.9 402.0 M912.0 205.1 L911.1 209.5 L910.3 214.3 L909.4 219.1 L908.6 223.8 L907.8 228.4 L907.0 232.7 L906.1 236.9 L905.3 240.8 L904.5 244.5 L903.7 248.6 L902.9 253.0 L902.1 257.8 L901.3 262.8 L900.5 268.0 L899.6 273.4 L898.8 279.0 L897.9 284.7 L897.0 290.4 L896.1 296.2 L895.1 301.9 L894.2 307.6 L893.2 313.2 L892.1 318.6 L891.1 323.8 L890.0 328.8 L888.9 333.4 L887.7 337.7 L886.5 341.5 L885.3 344.9 L884.1 348.0 L882.8 351.1 L881.5 354.3 L880.2 357.5 L878.8 360.8 L877.4 364.0 L876.0 367.2 L874.5 370.4 L873.1 373.4 L871.6 376.4 L870.1 379.3 L868.5 382.0 L867.0 384.6 L865.4 387.1 L863.8 389.5 L862.3 391.7 L860.7 393.9 L859.1 396.0 L857.5 398.2 L855.9 400.3 L854.3 402.5 M921.3 193.1 L920.5 195.6 L919.6 198.7 L918.8 202.3 L918.0 206.4 L917.2 210.8 L916.4 215.5 L915.6 220.4 L914.8 225.4 L914.0 230.6 L913.2 235.8 L912.4 241.0 L911.5 246.3 L910.7 251.5 L909.8 256.6 L908.9 261.7 L908.0 266.5 L907.1 271.2 L906.1 275.6 L905.1 279.8 L904.1 284.0 L903.1 288.6 L902.0 293.7 L900.9 299.2 L899.7 305.0 L898.6 311.0 L897.4 317.1 L896.1 323.3 L894.9 329.4 L893.6 335.3 L892.3 341.0 L890.9 346.4 L889.5 351.4 L888.1 355.9 L886.7 360.0 L885.2 363.4 L883.7 366.6 L882.2 369.8 L880.7 373.1 L879.1 376.3 L877.6 379.4 L876.0 382.5 L874.4 385.5 L872.8 388.4 L871.2 391.2 L869.6 393.8 L868.0 396.3 L866.4 398.7 L864.8 400.9 L863.3 403.1 L861.7 405.2 M930.7 196.9 L929.9 198.8 L929.1 201.2 L928.3 203.9 L927.5 206.8 L926.7 209.9 L925.9 213.1 L925.1 216.4 L924.3 219.8 L923.4 223.4 L922.6 227.0 L921.7 230.8 L920.8 234.7 L919.9 238.8 L919.0 243.1 L918.0 247.8 L917.1 252.9 L916.1 258.3 L915.0 263.8 L914.0 269.6 L912.9 275.4 L911.7 281.3 L910.6 287.1 L909.4 292.7 L908.2 298.2 L906.9 303.3 L905.6 308.1 L904.3 312.6 L903.0 317.6 L901.6 323.2 L900.2 329.1 L898.8 335.3 L897.3 341.5 L895.8 347.6 L894.3 353.6 L892.8 359.3 L891.3 364.6 L889.7 369.5 L888.2 373.8 L886.6 377.7 L885.0 381.1 L883.4 384.2 L881.8 387.4 L880.2 390.5 L878.6 393.5 L877.0 396.5 L875.4 399.3 L873.8 402.1 L872.3 404.7 L870.7 407.2 L869.2 409.6 M940.2 200.0 L939.4 202.2 L938.6 205.0 L937.8 208.0 L937.0 211.1 L936.1 214.3 L935.3 217.6 L934.5 221.0 L933.6 224.4 L932.7 228.0 L931.8 231.5 L930.9 235.2 L930.0 238.9 L929.0 242.6 L928.0 246.5 L927.0 250.4 L925.9 254.4 L924.9 258.4 L923.7 262.6 L922.6 266.8 L921.4 271.2 L920.2 275.7 L919.0 280.4 L917.7 285.7 L916.4 291.3 L915.1 297.2 L913.7 303.3 L912.3 309.3 L910.9 315.4 L909.4 321.2 L908.0 326.7 L906.5 331.9 L905.0 336.6 L903.4 341.5 L901.9 346.8 L900.3 352.6 L898.8 358.6 L897.2 364.5 L895.6 370.3 L894.0 375.7 L892.4 380.8 L890.8 385.5 L889.2 389.8 L887.6 393.6 L886.0 397.0 L884.4 400.2 L882.9 403.2 L881.3 406.2 L879.8 409.2 L878.3 412.0 L876.8 414.7 M949.7 214.2 L948.8 214.7 L948.0 215.7 L947.2 217.1 L946.4 218.8 L945.5 220.8 L944.6 223.1 L943.8 225.6 L942.8 228.5 L941.9 231.7 L941.0 235.2 L940.0 239.2 L939.0 243.3 L937.9 247.4 L936.8 251.5 L935.7 255.6 L934.6 259.6 L933.4 263.7 L932.2 267.8 L931.0 271.8 L929.8 275.9 L928.5 280.1 L927.1 284.3 L925.8 288.5 L924.4 292.9 L923.0 297.3 L921.6 301.8 L920.1 306.5 L918.6 311.5 L917.1 317.0 L915.6 322.8 L914.0 328.8 L912.5 334.8 L910.9 340.7 L909.3 346.4 L907.7 351.8 L906.1 356.8 L904.5 361.5 L902.9 366.5 L901.4 371.9 L899.8 377.4 L898.2 383.0 L896.6 388.3 L895.0 393.4 L893.5 398.1 L891.9 402.5 L890.4 406.5 L888.9 410.2 L887.5 413.6 L886.0 416.8 L884.6 419.8 M959.1 229.8 L958.3 231.4 L957.4 233.3 L956.5 235.2 L955.7 237.1 L954.8 238.9 L953.8 240.7 L952.9 242.5 L951.9 244.2 L950.9 246.1 L949.9 247.9 L948.8 249.9 L947.7 252.0 L946.6 254.3 L945.5 256.9 L944.3 259.7 L943.1 262.9 L941.8 266.5 L940.5 270.6 L939.2 275.1 L937.9 279.6 L936.5 283.9 L935.1 288.3 L933.7 292.6 L932.2 296.8 L930.8 301.1 L929.3 305.4 L927.7 309.7 L926.2 314.1 L924.6 318.6 L923.1 323.2 L921.5 327.8 L919.9 332.6 L918.3 337.7 L916.7 343.3 L915.1 349.0 L913.5 354.8 L911.9 360.6 L910.3 366.2 L908.8 371.5 L907.2 376.6 L905.6 381.5 L904.1 386.2 L902.6 391.2 L901.1 396.3 L899.6 401.5 L898.1 406.5 L896.7 411.2 L895.3 415.7 L893.9 419.8 L892.6 423.6 M961.8 250.5 L960.8 254.1 L959.7 257.7 L958.6 261.1 L957.5 264.1 L956.3 266.8 L955.1 269.3 L953.9 271.7 L952.6 273.8 L951.3 276.0 L950.0 278.1 L948.6 280.3 L947.2 282.7 L945.8 285.4 L944.3 288.4 L942.9 291.8 L941.4 295.7 L939.9 300.1 L938.3 304.7 L936.8 309.2 L935.2 313.7 L933.7 318.1 L932.1 322.4 L930.5 326.8 L928.9 331.2 L927.3 335.6 L925.7 340.1 L924.1 344.7 L922.5 349.4 L920.9 354.2 L919.3 359.1 L917.8 364.3 L916.2 369.7 L914.7 375.2 L913.2 380.6 L911.7 386.0 L910.2 391.2 L908.8 396.3 L907.4 401.2 L906.0 406.0 L904.6 410.7 L903.3 415.5 L902.0 420.2 L900.7 425.0 M960.7 284.1 L959.3 288.1 L957.9 291.7 L956.5 294.8 L955.0 297.5 L953.5 300.0 L952.0 302.3 L950.5 304.5 L949.0 306.9 L947.4 309.4 L945.8 312.1 L944.2 315.3 L942.7 318.8 L941.1 322.8 L939.5 327.3 L937.9 331.9 L936.3 336.3 L934.7 340.7 L933.1 345.1 L931.5 349.5 L929.9 353.9 L928.4 358.3 L926.9 362.9 L925.3 367.4 L923.8 372.1 L922.4 376.8 L920.9 381.6 L919.5 386.5 L918.1 391.5 L916.7 396.6 L915.4 401.8 L914.1 406.8 L912.8 411.8 L911.5 416.7 L910.3 421.5 L909.1 426.3 M961.1 309.9 L959.6 314.2 L958.0 317.9 L956.4 321.1 L954.8 324.0 L953.2 326.5 L951.6 329.0 L950.0 331.5 L948.4 334.1 L946.8 336.9 L945.3 340.0 L943.7 343.5 L942.1 347.3 L940.5 351.5 L939.0 356.0 L937.5 360.4 L936.0 364.9 L934.5 369.2 L933.0 373.6 L931.6 378.0 L930.2 382.5 L928.8 387.0 L927.4 391.5 L926.1 396.1 L924.8 400.7 L923.6 405.4 L922.4 410.1 L921.2 414.9 L920.0 419.6 L918.9 424.4 L917.8 429.2 M960.6 335.7 L959.0 339.9 L957.4 343.6 L955.8 346.9 L954.3 349.9 L952.7 352.8 L951.1 355.7 L949.6 358.6 L948.1 361.7 L946.6 364.9 L945.1 368.4 L943.7 372.1 L942.3 376.1 L940.9 380.4 L939.5 384.8 L938.2 389.2 L936.9 393.6 L935.6 398.0 L934.4 402.4 L933.2 406.8 L932.0 411.1 L930.9 415.5 L929.7 420.0 L928.7 424.4 L927.6 428.8 L926.6 433.3 M961.8 355.0 L960.2 359.4 L958.7 363.7 L957.3 367.5 L955.8 371.1 L954.4 374.5 L953.0 377.8 L951.6 381.2 L950.3 384.6 L949.0 388.0 L947.7 391.7 L946.4 395.4 L945.2 399.3 L944.0 403.3 L942.9 407.5 L941.7 411.7 L940.6 416.0 L939.6 420.4 L938.5 424.7 L937.5 429.1 L936.6 433.4 L935.6 437.8 M961.0 380.0 L959.7 384.4 L958.5 388.5 L957.2 392.5 L956.0 396.4 L954.9 400.2 L953.7 404.0 L952.6 407.9 L951.6 411.8 L950.5 415.8 L949.5 419.9 L948.5 424.0 L947.5 428.3 L946.6 432.7 L945.7 437.2 L944.8 441.8 M961.4 407.9 L960.5 412.5 L959.5 417.0 L958.5 421.5 L957.6 426.0 L956.7 430.5 L955.8 435.1 L955.0 439.7 L954.1 444.5" fill="none" stroke="#6cd4c6" stroke-opacity="0.38" stroke-width="0.54"/>
<path d="M625.0 322.0 L629.0 322.0 L633.0 322.0 L637.0 321.9 L641.0 321.7 L645.0 321.5 L649.0 321.2 L653.0 320.9 L657.0 320.6 L661.0 320.3 L665.0 320.0 L669.0 319.6 L673.0 319.3 L677.0 319.0 L681.0 318.7 L685.0 318.5 L689.0 318.3 L693.0 318.1 L697.0 318.0 L701.0 318.0 L705.0 317.9 L709.0 317.6 L713.0 317.3 L717.0 316.8 L721.0 316.3 L725.0 315.7 L729.0 315.1 L733.0 314.6 L737.0 314.0 L741.0 313.4 L745.0 312.9 L749.0 312.5 L753.0 312.2 L757.0 312.0 L761.0 312.0 L765.0 312.1 L769.0 312.4 L773.0 312.7 L777.0 313.2 L781.0 313.7 L785.0 314.3 L789.0 314.9 L793.0 315.4 L797.0 316.0 L801.0 316.6 L805.0 317.1 L809.0 317.5 L813.0 317.8 L817.0 318.0 L821.0 318.0 L825.0 318.1 L829.0 318.2 L833.0 318.5 L837.0 318.8 L841.0 319.1 L845.0 319.5 L849.0 319.9 L853.0 320.3 L857.0 320.7 L861.0 321.1 L865.0 321.4 L869.0 321.6 L873.0 321.8 L877.0 322.0 L881.0 322.0 L885.0 321.9 L889.0 321.6 L893.0 321.2 L897.0 320.6 L901.0 320.0 L905.0 319.2 L909.0 318.4 L913.0 317.6 L917.0 316.7 L921.0 315.8 L925.0 314.9 L929.0 314.0 L933.0 313.2 L937.0 312.4 L941.0 311.7 L945.0 311.1 L949.0 310.6 L953.0 310.3 L957.0 310.0 L961.0 310.0 M625.0 326.1 L629.0 325.5 L633.0 324.9 L637.0 324.5 L641.0 324.3 L645.0 324.3 L649.0 324.5 L653.0 324.8 L657.0 325.0 L661.0 325.0 L665.0 324.7 L669.0 324.1 L673.0 323.3 L677.0 322.5 L681.0 321.7 L685.0 321.2 L689.0 320.8 L693.0 320.5 L697.0 320.2 L701.0 319.8 L705.0 319.2 L709.0 318.3 L713.0 317.2 L717.0 316.2 L721.0 315.4 L725.0 314.9 L729.0 314.8 L733.0 314.9 L737.0 315.3 L741.0 315.6 L745.0 315.8 L749.0 315.8 L753.0 315.6 L757.0 315.4 L761.0 315.2 L765.0 315.3 L769.0 315.6 L773.0 316.2 L777.0 317.0 L781.0 317.8 L785.0 318.5 L789.0 319.1 L793.0 319.4 L797.0 319.7 L801.0 320.0 L805.0 320.4 L809.0 321.0 L813.0 321.7 L817.0 322.5 L821.0 323.2 L825.0 323.8 L829.0 324.1 L833.0 324.2 L837.0 323.9 L841.0 323.5 L845.0 323.0 L849.0 322.7 L853.0 322.5 L857.0 322.5 L861.0 322.6 L865.0 322.7 L869.0 322.8 L873.0 322.7 L877.0 322.4 L881.0 322.0 L885.0 321.6 L889.0 321.3 L893.0 321.1 L897.0 321.2 L901.0 321.4 L905.0 321.6 L909.0 321.6 L913.0 321.3 L917.0 320.6 L921.0 319.7 L925.0 318.6 L929.0 317.4 L933.0 316.4 L937.0 315.7 L941.0 315.4 L945.0 315.3 L949.0 315.3 L953.0 315.4 L957.0 315.5 L961.0 315.6 M625.0 329.8 L629.0 328.6 L633.0 327.8 L637.0 327.5 L641.0 327.7 L645.0 328.4 L649.0 329.3 L653.0 330.0 L657.0 330.3 L661.0 330.1 L665.0 329.3 L669.0 328.0 L673.0 326.7 L677.0 325.5 L681.0 324.5 L685.0 323.9 L689.0 323.4 L693.0 322.9 L697.0 322.2 L701.0 321.2 L705.0 319.8 L709.0 318.2 L713.0 316.7 L717.0 315.7 L721.0 315.2 L725.0 315.5 L729.0 316.4 L733.0 317.6 L737.0 318.8 L741.0 319.7 L745.0 320.1 L749.0 320.0 L753.0 319.6 L757.0 319.2 L761.0 319.1 L765.0 319.4 L769.0 320.1 L773.0 321.0 L777.0 322.1 L781.0 322.9 L785.0 323.5 L789.0 323.7 L793.0 323.6 L797.0 323.7 L801.0 324.0 L805.0 324.7 L809.0 325.9 L813.0 327.4 L817.0 328.8 L821.0 329.8 L825.0 330.3 L829.0 330.2 L833.0 329.4 L837.0 328.2 L841.0 326.8 L845.0 325.6 L849.0 324.8 L853.0 324.4 L857.0 324.3 L861.0 324.3 L865.0 324.2 L869.0 323.9 L873.0 323.4 L877.0 322.7 L881.0 322.1 L885.0 321.8 L889.0 322.0 L893.0 322.7 L897.0 323.8 L901.0 325.0 L905.0 325.9 L909.0 326.3 L913.0 326.1 L917.0 325.2 L921.0 323.9 L925.0 322.5 L929.0 321.3 L933.0 320.6 L937.0 320.5 L941.0 320.8 L945.0 321.3 L949.0 321.9 L953.0 322.2 L957.0 322.4 L961.0 322.4 M625.0 332.7 L629.0 331.4 L633.0 330.9 L637.0 331.3 L641.0 332.3 L645.0 333.7 L649.0 334.9 L653.0 335.6 L657.0 335.5 L661.0 334.5 L665.0 332.9 L669.0 331.1 L673.0 329.4 L677.0 328.1 L681.0 327.2 L685.0 326.5 L689.0 325.8 L693.0 324.9 L697.0 323.5 L701.0 321.7 L705.0 319.6 L709.0 317.7 L713.0 316.3 L717.0 316.0 L721.0 316.6 L725.0 318.2 L729.0 320.2 L733.0 322.2 L737.0 323.8 L741.0 324.6 L745.0 324.7 L749.0 324.3 L753.0 323.7 L757.0 323.4 L761.0 323.6 L765.0 324.3 L769.0 325.5 L773.0 326.7 L777.0 327.7 L781.0 328.2 L785.0 328.3 L789.0 328.0 L793.0 327.7 L797.0 327.9 L801.0 328.7 L805.0 330.2 L809.0 332.2 L813.0 334.3 L817.0 335.9 L821.0 336.6 L825.0 336.3 L829.0 335.1 L833.0 333.2 L837.0 331.0 L841.0 329.0 L845.0 327.5 L849.0 326.6 L853.0 326.2 L857.0 326.1 L861.0 325.9 L865.0 325.5 L869.0 324.7 L873.0 323.7 L877.0 322.9 L881.0 322.6 L885.0 323.1 L889.0 324.3 L893.0 326.2 L897.0 328.3 L901.0 330.2 L905.0 331.3 L909.0 331.5 L913.0 330.7 L917.0 329.4 L921.0 327.8 L925.0 326.5 L929.0 325.8 L933.0 325.9 L937.0 326.6 L941.0 327.7 L945.0 328.7 L949.0 329.3 L953.0 329.6 L957.0 329.6 L961.0 329.5 M625.0 335.2 L629.0 334.4 L633.0 334.8 L637.0 336.1 L641.0 337.9 L645.0 339.7 L649.0 340.7 L653.0 340.7 L657.0 339.7 L661.0 337.8 L665.0 335.5 L669.0 333.4 L673.0 331.7 L677.0 330.5 L681.0 329.7 L685.0 329.0 L689.0 327.8 L693.0 326.1 L697.0 323.9 L701.0 321.4 L705.0 319.1 L709.0 317.5 L713.0 317.1 L717.0 318.0 L721.0 320.1 L725.0 322.9 L729.0 325.8 L733.0 328.1 L737.0 329.4 L741.0 329.7 L745.0 329.3 L749.0 328.6 L753.0 328.1 L757.0 328.1 L761.0 328.9 L765.0 330.1 L769.0 331.5 L773.0 332.7 L777.0 333.2 L781.0 333.1 L785.0 332.5 L789.0 332.0 L793.0 331.9 L797.0 332.7 L801.0 334.4 L805.0 336.9 L809.0 339.5 L813.0 341.7 L817.0 342.8 L821.0 342.5 L825.0 340.9 L829.0 338.3 L833.0 335.4 L837.0 332.6 L841.0 330.4 L845.0 329.1 L849.0 328.5 L853.0 328.2 L857.0 327.9 L861.0 327.4 L865.0 326.4 L869.0 325.2 L873.0 324.2 L877.0 323.8 L881.0 324.4 L885.0 326.0 L889.0 328.6 L893.0 331.5 L897.0 334.2 L901.0 336.1 L905.0 336.8 L909.0 336.3 L913.0 334.9 L917.0 333.2 L921.0 331.8 L925.0 331.1 L929.0 331.4 L933.0 332.5 L937.0 334.0 L941.0 335.5 L945.0 336.6 L949.0 337.1 L953.0 337.1 L957.0 336.9 L961.0 337.0 M625.0 338.0 L629.0 338.3 L633.0 339.8 L637.0 342.0 L641.0 344.1 L645.0 345.5 L649.0 345.7 L653.0 344.7 L657.0 342.6 L661.0 340.0 L665.0 337.4 L669.0 335.4 L673.0 334.0 L677.0 333.1 L681.0 332.2 L685.0 331.0 L689.0 329.1 L693.0 326.5 L697.0 323.6 L701.0 321.0 L705.0 319.2 L709.0 318.7 L713.0 319.9 L717.0 322.4 L721.0 325.9 L725.0 329.4 L729.0 332.4 L733.0 334.2 L737.0 334.9 L741.0 334.5 L745.0 333.7 L749.0 333.0 L753.0 332.9 L757.0 333.6 L761.0 334.9 L765.0 336.5 L769.0 337.7 L773.0 338.3 L777.0 338.1 L781.0 337.3 L785.0 336.5 L789.0 336.2 L793.0 336.8 L797.0 338.6 L801.0 341.4 L805.0 344.4 L809.0 347.1 L813.0 348.6 L817.0 348.4 L821.0 346.6 L825.0 343.6 L829.0 340.0 L833.0 336.5 L837.0 333.7 L841.0 331.9 L845.0 331.0 L849.0 330.6 L853.0 330.3 L857.0 329.6 L861.0 328.5 L865.0 327.1 L869.0 325.9 L873.0 325.4 L877.0 326.1 L881.0 328.0 L885.0 331.1 L889.0 334.7 L893.0 338.1 L897.0 340.7 L901.0 341.8 L905.0 341.6 L909.0 340.3 L913.0 338.6 L917.0 337.1 L921.0 336.4 L925.0 336.9 L929.0 338.3 L933.0 340.2 L937.0 342.2 L941.0 343.7 L945.0 344.5 L949.0 344.6 L953.0 344.5 L957.0 344.5 L961.0 345.1 M625.0 341.8 L629.0 343.4 L633.0 345.8 L637.0 348.2 L641.0 350.0 L645.0 350.4 L649.0 349.4 L653.0 347.2 L657.0 344.3 L661.0 341.5 L665.0 339.2 L669.0 337.6 L673.0 336.6 L677.0 335.7 L681.0 334.4 L685.0 332.4 L689.0 329.6 L693.0 326.4 L697.0 323.4 L701.0 321.4 L705.0 320.9 L709.0 322.2 L713.0 325.1 L717.0 329.1 L721.0 333.2 L725.0 336.8 L729.0 339.1 L733.0 340.0 L737.0 339.7 L741.0 338.8 L745.0 338.0 L749.0 337.8 L753.0 338.4 L757.0 339.8 L761.0 341.4 L765.0 342.7 L769.0 343.3 L773.0 343.0 L777.0 342.1 L781.0 341.0 L785.0 340.5 L789.0 341.0 L793.0 342.8 L797.0 345.7 L801.0 349.1 L805.0 352.1 L809.0 353.9 L813.0 354.0 L817.0 352.2 L821.0 348.8 L825.0 344.7 L829.0 340.6 L833.0 337.3 L837.0 335.1 L841.0 333.9 L845.0 333.4 L849.0 333.0 L853.0 332.3 L857.0 331.1 L861.0 329.6 L865.0 328.3 L869.0 327.6 L873.0 328.3 L877.0 330.4 L881.0 333.8 L885.0 337.9 L889.0 341.9 L893.0 345.0 L897.0 346.6 L901.0 346.7 L905.0 345.5 L909.0 343.8 L913.0 342.3 L917.0 341.6 L921.0 342.2 L925.0 343.8 L929.0 346.2 L933.0 348.6 L937.0 350.6 L941.0 351.7 L945.0 352.0 L949.0 351.9 L953.0 351.9 L957.0 352.6 L961.0 354.0 M625.0 346.9 L629.0 349.4 L633.0 352.1 L637.0 354.1 L641.0 354.8 L645.0 353.9 L649.0 351.6 L653.0 348.6 L657.0 345.6 L661.0 343.0 L665.0 341.3 L669.0 340.2 L673.0 339.3 L677.0 338.1 L681.0 336.1 L685.0 333.2 L689.0 329.9 L693.0 326.6 L697.0 324.3 L701.0 323.7 L705.0 325.1 L709.0 328.2 L713.0 332.5 L717.0 337.1 L721.0 341.1 L725.0 343.9 L729.0 345.1 L733.0 344.9 L737.0 344.1 L741.0 343.1 L745.0 342.8 L749.0 343.3 L753.0 344.6 L757.0 346.2 L761.0 347.6 L765.0 348.3 L769.0 348.0 L773.0 346.9 L777.0 345.6 L781.0 344.9 L785.0 345.2 L789.0 346.9 L793.0 349.8 L797.0 353.4 L801.0 356.7 L805.0 358.8 L809.0 359.1 L813.0 357.4 L817.0 354.0 L821.0 349.5 L825.0 345.0 L829.0 341.3 L833.0 338.7 L837.0 337.3 L841.0 336.6 L845.0 336.2 L849.0 335.5 L853.0 334.3 L857.0 332.7 L861.0 331.2 L865.0 330.5 L869.0 331.1 L873.0 333.2 L877.0 336.8 L881.0 341.2 L885.0 345.6 L889.0 349.1 L893.0 351.2 L897.0 351.6 L901.0 350.5 L905.0 348.8 L909.0 347.3 L913.0 346.6 L917.0 347.3 L921.0 349.1 L925.0 351.8 L929.0 354.7 L933.0 357.0 L937.0 358.4 L941.0 359.0 L945.0 359.1 L949.0 359.2 L953.0 359.8 L957.0 361.3 L961.0 363.5 M625.0 352.9 L629.0 355.7 L633.0 357.9 L637.0 358.8 L641.0 358.0 L645.0 355.9 L649.0 352.8 L653.0 349.7 L657.0 347.0 L661.0 345.1 L665.0 344.0 L669.0 343.1 L673.0 342.0 L677.0 340.1 L681.0 337.3 L685.0 333.9 L689.0 330.5 L693.0 328.1 L697.0 327.3 L701.0 328.6 L705.0 331.7 L709.0 336.2 L713.0 341.2 L717.0 345.5 L721.0 348.6 L725.0 350.0 L729.0 350.0 L733.0 349.2 L737.0 348.2 L741.0 347.7 L745.0 348.1 L749.0 349.4 L753.0 351.0 L757.0 352.4 L761.0 353.1 L765.0 352.8 L769.0 351.7 L773.0 350.2 L777.0 349.3 L781.0 349.4 L785.0 350.9 L789.0 353.8 L793.0 357.4 L797.0 360.9 L801.0 363.2 L805.0 363.8 L809.0 362.2 L813.0 358.9 L817.0 354.4 L821.0 349.7 L825.0 345.6 L829.0 342.7 L833.0 341.1 L837.0 340.3 L841.0 339.9 L845.0 339.3 L849.0 338.1 L853.0 336.5 L857.0 334.9 L861.0 334.1 L865.0 334.6 L869.0 336.7 L873.0 340.3 L877.0 344.8 L881.0 349.4 L885.0 353.1 L889.0 355.5 L893.0 356.1 L897.0 355.3 L901.0 353.6 L905.0 352.1 L909.0 351.4 L913.0 352.1 L917.0 354.1 L921.0 357.0 L925.0 360.2 L929.0 362.9 L933.0 364.7 L937.0 365.6 L941.0 365.8 L945.0 366.0 L949.0 366.7 L953.0 368.3 L957.0 370.5 L961.0 372.9 M625.0 359.1 L629.0 361.4 L633.0 362.4 L637.0 361.9 L641.0 359.9 L645.0 357.0 L649.0 353.8 L653.0 351.1 L657.0 349.1 L661.0 348.0 L665.0 347.1 L669.0 346.1 L673.0 344.4 L677.0 341.8 L681.0 338.5 L685.0 335.1 L689.0 332.6 L693.0 331.6 L697.0 332.7 L701.0 335.8 L705.0 340.3 L709.0 345.3 L713.0 349.9 L717.0 353.2 L721.0 354.8 L725.0 355.0 L729.0 354.2 L733.0 353.1 L737.0 352.6 L741.0 352.8 L745.0 353.9 L749.0 355.5 L753.0 356.9 L757.0 357.6 L761.0 357.4 L765.0 356.3 L769.0 354.8 L773.0 353.7 L777.0 353.6 L781.0 354.9 L785.0 357.7 L789.0 361.2 L793.0 364.7 L797.0 367.2 L801.0 368.0 L805.0 366.7 L809.0 363.5 L813.0 359.2 L817.0 354.5 L821.0 350.3 L825.0 347.2 L829.0 345.4 L833.0 344.6 L837.0 344.1 L841.0 343.5 L845.0 342.4 L849.0 340.9 L853.0 339.3 L857.0 338.4 L861.0 338.7 L865.0 340.7 L869.0 344.2 L873.0 348.6 L877.0 353.3 L881.0 357.1 L885.0 359.6 L889.0 360.4 L893.0 359.7 L897.0 358.2 L901.0 356.7 L905.0 356.0 L909.0 356.7 L913.0 358.8 L917.0 361.8 L921.0 365.2 L925.0 368.2 L929.0 370.3 L933.0 371.5 L937.0 372.0 L941.0 372.4 L945.0 373.2 L949.0 374.8 L953.0 377.1 L957.0 379.7 L961.0 381.7 M625.0 364.6 L629.0 365.8 L633.0 365.5 L637.0 363.7 L641.0 361.0 L645.0 357.9 L649.0 355.3 L653.0 353.3 L657.0 352.2 L661.0 351.4 L665.0 350.5 L669.0 349.0 L673.0 346.6 L677.0 343.5 L681.0 340.4 L685.0 337.8 L689.0 336.7 L693.0 337.6 L697.0 340.4 L701.0 344.7 L705.0 349.7 L709.0 354.2 L713.0 357.6 L717.0 359.4 L721.0 359.7 L725.0 359.0 L729.0 357.9 L733.0 357.3 L737.0 357.4 L741.0 358.3 L745.0 359.8 L749.0 361.2 L753.0 361.9 L757.0 361.7 L761.0 360.7 L765.0 359.2 L769.0 358.1 L773.0 357.8 L777.0 358.9 L781.0 361.4 L785.0 364.8 L789.0 368.3 L793.0 370.8 L797.0 371.8 L801.0 370.8 L805.0 367.9 L809.0 363.9 L813.0 359.4 L817.0 355.3 L821.0 352.2 L825.0 350.3 L829.0 349.4 L833.0 348.9 L837.0 348.4 L841.0 347.4 L845.0 346.0 L849.0 344.4 L853.0 343.4 L857.0 343.6 L861.0 345.3 L865.0 348.5 L869.0 352.8 L873.0 357.3 L877.0 361.2 L881.0 363.6 L885.0 364.4 L889.0 363.9 L893.0 362.5 L897.0 361.0 L901.0 360.4 L905.0 361.0 L909.0 363.0 L913.0 366.1 L917.0 369.6 L921.0 372.8 L925.0 375.3 L929.0 376.8 L933.0 377.6 L937.0 378.2 L941.0 379.1 L945.0 380.8 L949.0 383.2 L953.0 385.9 L957.0 388.1 L961.0 389.0 M625.0 369.0 L629.0 368.8 L633.0 367.4 L637.0 364.9 L641.0 362.1 L645.0 359.6 L649.0 357.7 L653.0 356.6 L657.0 355.9 L661.0 355.2 L665.0 353.9 L669.0 351.8 L673.0 349.1 L677.0 346.1 L681.0 343.7 L685.0 342.6 L689.0 343.2 L693.0 345.6 L697.0 349.5 L701.0 354.2 L705.0 358.6 L709.0 361.9 L713.0 363.8 L717.0 364.2 L721.0 363.5 L725.0 362.5 L729.0 361.8 L733.0 361.7 L737.0 362.5 L741.0 363.8 L745.0 365.1 L749.0 365.9 L753.0 365.8 L757.0 364.9 L761.0 363.5 L765.0 362.4 L769.0 362.0 L773.0 362.9 L777.0 365.1 L781.0 368.3 L785.0 371.5 L789.0 374.1 L793.0 375.3 L797.0 374.6 L801.0 372.1 L805.0 368.5 L809.0 364.3 L813.0 360.5 L817.0 357.6 L821.0 355.7 L825.0 354.8 L829.0 354.3 L833.0 353.8 L837.0 352.9 L841.0 351.6 L845.0 350.2 L849.0 349.2 L853.0 349.2 L857.0 350.6 L861.0 353.4 L865.0 357.3 L869.0 361.5 L873.0 365.2 L877.0 367.6 L881.0 368.4 L885.0 367.9 L889.0 366.5 L893.0 365.2 L897.0 364.5 L901.0 365.1 L905.0 367.0 L909.0 370.0 L913.0 373.5 L917.0 376.8 L921.0 379.5 L925.0 381.3 L929.0 382.4 L933.0 383.3 L937.0 384.5 L941.0 386.3 L945.0 388.7 L949.0 391.5 L953.0 393.9 L957.0 395.1 L961.0 394.6 M625.0 372.0 L629.0 370.8 L633.0 368.8 L637.0 366.3 L641.0 364.0 L645.0 362.3 L649.0 361.3 L653.0 360.7 L657.0 360.1 L661.0 359.1 L665.0 357.4 L669.0 355.0 L673.0 352.4 L677.0 350.2 L681.0 349.1 L685.0 349.4 L689.0 351.4 L693.0 354.8 L697.0 358.9 L701.0 362.9 L705.0 366.0 L709.0 367.9 L713.0 368.4 L717.0 367.8 L721.0 366.8 L725.0 366.1 L729.0 365.9 L733.0 366.5 L737.0 367.6 L741.0 368.8 L745.0 369.5 L749.0 369.5 L753.0 368.8 L757.0 367.7 L761.0 366.6 L765.0 366.2 L769.0 367.0 L773.0 368.9 L777.0 371.6 L781.0 374.6 L785.0 377.1 L789.0 378.4 L793.0 378.0 L797.0 376.1 L801.0 373.0 L805.0 369.4 L809.0 366.0 L813.0 363.3 L817.0 361.6 L821.0 360.7 L825.0 360.2 L829.0 359.8 L833.0 359.1 L837.0 357.9 L841.0 356.6 L845.0 355.6 L849.0 355.4 L853.0 356.5 L857.0 358.9 L861.0 362.2 L865.0 365.9 L869.0 369.2 L873.0 371.5 L877.0 372.3 L881.0 371.8 L885.0 370.4 L889.0 369.1 L893.0 368.4 L897.0 368.9 L901.0 370.7 L905.0 373.5 L909.0 376.8 L913.0 380.2 L917.0 383.0 L921.0 385.1 L925.0 386.5 L929.0 387.8 L933.0 389.2 L937.0 391.1 L941.0 393.6 L945.0 396.5 L949.0 399.0 L953.0 400.6 L957.0 400.6 L961.0 398.8 M625.0 374.2 L629.0 372.5 L633.0 370.5 L637.0 368.6 L641.0 367.1 L645.0 366.2 L649.0 365.7 L653.0 365.3 L657.0 364.5 L661.0 363.1 L665.0 361.2 L669.0 359.1 L673.0 357.2 L677.0 356.1 L681.0 356.2 L685.0 357.8 L689.0 360.5 L693.0 363.9 L697.0 367.2 L701.0 370.0 L705.0 371.7 L709.0 372.2 L713.0 371.8 L717.0 370.9 L721.0 370.2 L725.0 369.9 L729.0 370.3 L733.0 371.1 L737.0 372.1 L741.0 372.8 L745.0 373.0 L749.0 372.5 L753.0 371.6 L757.0 370.7 L761.0 370.4 L765.0 371.0 L769.0 372.6 L773.0 375.0 L777.0 377.7 L781.0 379.9 L785.0 381.3 L789.0 381.2 L793.0 379.9 L797.0 377.4 L801.0 374.5 L805.0 371.6 L809.0 369.3 L813.0 367.8 L817.0 367.1 L821.0 366.7 L825.0 366.3 L829.0 365.7 L833.0 364.7 L837.0 363.5 L841.0 362.6 L845.0 362.3 L849.0 363.0 L853.0 364.8 L857.0 367.5 L861.0 370.5 L865.0 373.3 L869.0 375.2 L873.0 376.0 L877.0 375.6 L881.0 374.3 L885.0 373.0 L889.0 372.3 L893.0 372.6 L897.0 374.1 L901.0 376.6 L905.0 379.8 L909.0 383.0 L913.0 385.9 L917.0 388.2 L921.0 390.0 L925.0 391.5 L929.0 393.2 L933.0 395.3 L937.0 397.9 L941.0 400.8 L945.0 403.5 L949.0 405.5 L953.0 406.0 L957.0 405.0 L961.0 402.4 M625.0 376.3 L629.0 374.8 L633.0 373.3 L637.0 372.1 L641.0 371.4 L645.0 371.0 L649.0 370.7 L653.0 370.1 L657.0 369.1 L661.0 367.7 L665.0 366.0 L669.0 364.4 L673.0 363.5 L677.0 363.5 L681.0 364.5 L685.0 366.5 L689.0 369.1 L693.0 371.7 L697.0 373.9 L701.0 375.2 L705.0 375.7 L709.0 375.4 L713.0 374.7 L717.0 374.0 L721.0 373.7 L725.0 373.9 L729.0 374.5 L733.0 375.3 L737.0 375.9 L741.0 376.1 L745.0 375.9 L749.0 375.3 L753.0 374.8 L757.0 374.6 L761.0 375.1 L765.0 376.4 L769.0 378.4 L773.0 380.7 L777.0 382.7 L781.0 384.0 L785.0 384.3 L789.0 383.5 L793.0 381.8 L797.0 379.6 L801.0 377.4 L805.0 375.7 L809.0 374.5 L813.0 373.8 L817.0 373.5 L821.0 373.2 L825.0 372.7 L829.0 371.9 L833.0 370.9 L837.0 370.0 L841.0 369.6 L845.0 370.0 L849.0 371.2 L853.0 373.1 L857.0 375.3 L861.0 377.4 L865.0 378.9 L869.0 379.5 L873.0 379.2 L877.0 378.2 L881.0 376.9 L885.0 376.1 L889.0 376.2 L893.0 377.4 L897.0 379.6 L901.0 382.3 L905.0 385.3 L909.0 388.1 L913.0 390.6 L917.0 392.7 L921.0 394.6 L925.0 396.6 L929.0 398.9 L933.0 401.7 L937.0 404.6 L941.0 407.4 L945.0 409.7 L949.0 410.8 L953.0 410.7 L957.0 409.2 L961.0 406.5 M625.0 379.1 L629.0 378.1 L633.0 377.3 L637.0 376.8 L641.0 376.5 L645.0 376.3 L649.0 375.9 L653.0 375.2 L657.0 374.2 L661.0 373.1 L665.0 371.9 L669.0 371.2 L673.0 371.0 L677.0 371.6 L681.0 372.9 L685.0 374.5 L689.0 376.2 L693.0 377.7 L697.0 378.6 L701.0 378.9 L705.0 378.7 L709.0 378.2 L713.0 377.7 L717.0 377.4 L721.0 377.3 L725.0 377.7 L729.0 378.2 L733.0 378.7 L737.0 379.0 L741.0 379.0 L745.0 378.8 L749.0 378.6 L753.0 378.7 L757.0 379.2 L761.0 380.3 L765.0 381.9 L769.0 383.7 L773.0 385.4 L777.0 386.6 L781.0 387.1 L785.0 386.9 L789.0 386.0 L793.0 384.8 L797.0 383.4 L801.0 382.2 L805.0 381.4 L809.0 381.0 L813.0 380.7 L817.0 380.5 L821.0 380.1 L825.0 379.4 L829.0 378.6 L833.0 377.9 L837.0 377.4 L841.0 377.4 L845.0 378.0 L849.0 379.0 L853.0 380.4 L857.0 381.7 L861.0 382.6 L865.0 382.9 L869.0 382.6 L873.0 381.8 L877.0 380.9 L881.0 380.0 L885.0 379.9 L889.0 380.7 L893.0 382.4 L897.0 384.7 L901.0 387.3 L905.0 390.0 L909.0 392.5 L913.0 394.8 L917.0 397.1 L921.0 399.4 L925.0 402.0 L929.0 404.8 L933.0 407.9 L937.0 410.8 L941.0 413.3 L945.0 415.0 L949.0 415.7 L953.0 415.4 L957.0 414.2 L961.0 412.3 M625.0 383.0 L629.0 382.6 L633.0 382.3 L637.0 382.2 L641.0 382.0 L645.0 381.8 L649.0 381.4 L653.0 380.9 L657.0 380.2 L661.0 379.5 L665.0 379.0 L669.0 378.8 L673.0 378.9 L677.0 379.4 L681.0 380.1 L685.0 380.9 L689.0 381.5 L693.0 381.9 L697.0 382.0 L701.0 381.8 L705.0 381.4 L709.0 381.1 L713.0 380.8 L717.0 380.8 L721.0 380.8 L725.0 381.1 L729.0 381.4 L733.0 381.8 L737.0 382.0 L741.0 382.2 L745.0 382.4 L749.0 382.8 L753.0 383.4 L757.0 384.3 L761.0 385.5 L765.0 386.9 L769.0 388.2 L773.0 389.3 L777.0 390.0 L781.0 390.3 L785.0 390.2 L789.0 389.8 L793.0 389.4 L797.0 389.0 L801.0 388.6 L805.0 388.4 L809.0 388.2 L813.0 388.0 L817.0 387.7 L821.0 387.2 L825.0 386.6 L829.0 385.9 L833.0 385.4 L837.0 385.1 L841.0 385.1 L845.0 385.3 L849.0 385.7 L853.0 386.1 L857.0 386.3 L861.0 386.3 L865.0 385.9 L869.0 385.3 L873.0 384.7 L877.0 384.1 L881.0 383.8 L885.0 384.2 L889.0 385.3 L893.0 387.0 L897.0 389.1 L901.0 391.5 L905.0 394.0 L909.0 396.5 L913.0 399.0 L917.0 401.7 L921.0 404.5 L925.0 407.5 L929.0 410.6 L933.0 413.6 L937.0 416.3 L941.0 418.6 L945.0 420.2 L949.0 421.1 L953.0 421.3 L957.0 421.0 L961.0 420.2 M625.0 388.0 L629.0 388.0 L633.0 388.0 L637.0 387.9 L641.0 387.8 L645.0 387.7 L649.0 387.5 L653.0 387.3 L657.0 387.1 L661.0 386.9 L665.0 386.6 L669.0 386.4 L673.0 386.1 L677.0 385.8 L681.0 385.6 L685.0 385.3 L689.0 385.1 L693.0 384.8 L697.0 384.6 L701.0 384.5 L705.0 384.3 L709.0 384.2 L713.0 384.1 L717.0 384.0 L721.0 384.0 L725.0 384.1 L729.0 384.4 L733.0 384.8 L737.0 385.4 L741.0 386.0 L745.0 386.8 L749.0 387.6 L753.0 388.4 L757.0 389.3 L761.0 390.2 L765.0 391.1 L769.0 392.0 L773.0 392.8 L777.0 393.6 L781.0 394.3 L785.0 394.9 L789.0 395.4 L793.0 395.7 L797.0 396.0 L801.0 396.0 L805.0 395.9 L809.0 395.7 L813.0 395.4 L817.0 395.1 L821.0 394.6 L825.0 394.1 L829.0 393.6 L833.0 393.0 L837.0 392.4 L841.0 391.9 L845.0 391.3 L849.0 390.7 L853.0 390.1 L857.0 389.6 L861.0 389.1 L865.0 388.7 L869.0 388.4 L873.0 388.2 L877.0 388.0 L881.0 388.0 L885.0 388.5 L889.0 389.5 L893.0 391.0 L897.0 392.9 L901.0 395.2 L905.0 397.7 L909.0 400.6 L913.0 403.5 L917.0 406.6 L921.0 409.8 L925.0 412.9 L929.0 416.0 L933.0 418.9 L937.0 421.6 L941.0 424.0 L945.0 426.1 L949.0 427.8 L953.0 429.1 L957.0 429.8 L961.0 430.0" fill="none" stroke="#6cd4c6" stroke-opacity="0.55" stroke-width="0.60"/>
<path d="M1040.0 262.0 L1044.0 260.6 L1048.0 257.1 L1052.0 252.9 L1056.0 249.1 L1060.0 247.1 L1064.0 247.0 L1068.0 246.9 L1072.0 246.9 L1076.0 246.8 L1080.0 246.7 L1084.0 246.5 L1088.0 246.4 L1092.0 246.3 L1096.0 246.2 L1100.0 246.1 L1104.0 246.0 L1108.0 246.0 L1112.0 246.1 L1116.0 246.7 L1120.0 247.9 L1124.0 249.4 L1128.0 251.1 L1132.0 252.9 L1136.0 254.6 L1140.0 256.1 L1144.0 257.3 L1148.0 257.9 L1152.0 258.1 L1156.0 258.9 L1160.0 260.3 L1164.0 262.2 L1168.0 264.5 L1172.0 267.0 L1176.0 269.7 L1180.0 272.3 L1184.0 274.7 L1188.0 276.8 L1192.0 278.5 L1196.0 279.6 L1200.0 280.0 L1204.0 280.3 L1208.0 281.2 L1212.0 282.6 L1216.0 284.2 L1220.0 286.0 L1224.0 287.8 L1228.0 289.4 L1232.0 290.8 L1236.0 291.7 L1240.0 292.0 M1040.0 263.1 L1044.0 261.9 L1048.0 258.9 L1052.0 255.3 L1056.0 252.2 L1060.0 250.8 L1064.0 251.1 L1068.0 251.3 L1072.0 251.4 L1076.0 251.3 L1080.0 251.1 L1084.0 251.0 L1088.0 251.0 L1092.0 251.1 L1096.0 251.3 L1100.0 251.5 L1104.0 251.7 L1108.0 251.7 L1112.0 251.8 L1116.0 252.3 L1120.0 253.4 L1124.0 254.8 L1128.0 256.4 L1132.0 258.1 L1136.0 259.8 L1140.0 261.3 L1144.0 262.3 L1148.0 262.8 L1152.0 262.7 L1156.0 263.1 L1160.0 264.1 L1164.0 265.7 L1168.0 267.6 L1172.0 269.9 L1176.0 272.4 L1180.0 275.0 L1184.0 277.4 L1188.0 279.5 L1192.0 281.2 L1196.0 282.2 L1200.0 282.6 L1204.0 282.8 L1208.0 283.7 L1212.0 285.1 L1216.0 286.7 L1220.0 288.6 L1224.0 290.4 L1228.0 292.0 L1232.0 293.3 L1236.0 294.1 L1240.0 294.2 M1040.0 264.7 L1044.0 263.9 L1048.0 261.6 L1052.0 258.7 L1056.0 256.3 L1060.0 255.4 L1064.0 256.0 L1068.0 256.5 L1072.0 256.7 L1076.0 256.7 L1080.0 256.6 L1084.0 256.6 L1088.0 256.9 L1092.0 257.3 L1096.0 257.9 L1100.0 258.3 L1104.0 258.6 L1108.0 258.6 L1112.0 258.6 L1116.0 259.0 L1120.0 259.9 L1124.0 261.2 L1128.0 262.8 L1132.0 264.5 L1136.0 266.1 L1140.0 267.3 L1144.0 268.1 L1148.0 268.2 L1152.0 267.8 L1156.0 267.8 L1160.0 268.4 L1164.0 269.6 L1168.0 271.4 L1172.0 273.6 L1176.0 276.1 L1180.0 278.6 L1184.0 281.0 L1188.0 283.0 L1192.0 284.5 L1196.0 285.5 L1200.0 285.7 L1204.0 286.0 L1208.0 286.9 L1212.0 288.3 L1216.0 290.1 L1220.0 292.0 L1224.0 293.7 L1228.0 295.2 L1232.0 296.3 L1236.0 296.9 L1240.0 296.9 M1040.0 266.9 L1044.0 266.5 L1048.0 264.8 L1052.0 262.6 L1056.0 260.8 L1060.0 260.2 L1064.0 261.2 L1068.0 261.9 L1072.0 262.3 L1076.0 262.6 L1080.0 262.6 L1084.0 262.8 L1088.0 263.5 L1092.0 264.3 L1096.0 265.2 L1100.0 265.8 L1104.0 266.1 L1108.0 266.0 L1112.0 265.9 L1116.0 266.2 L1120.0 267.1 L1124.0 268.3 L1128.0 269.8 L1132.0 271.3 L1136.0 272.7 L1140.0 273.6 L1144.0 273.9 L1148.0 273.5 L1152.0 272.7 L1156.0 272.3 L1160.0 272.7 L1164.0 273.8 L1168.0 275.5 L1172.0 277.7 L1176.0 280.2 L1180.0 282.7 L1184.0 285.0 L1188.0 286.8 L1192.0 288.2 L1196.0 289.0 L1200.0 289.2 L1204.0 289.6 L1208.0 290.6 L1212.0 292.1 L1216.0 293.9 L1220.0 295.8 L1224.0 297.4 L1228.0 298.7 L1232.0 299.4 L1236.0 299.8 L1240.0 299.6 M1040.0 269.5 L1044.0 269.6 L1048.0 268.5 L1052.0 266.8 L1056.0 265.4 L1060.0 265.2 L1064.0 266.4 L1068.0 267.4 L1072.0 268.2 L1076.0 268.8 L1080.0 269.1 L1084.0 269.7 L1088.0 270.7 L1092.0 271.9 L1096.0 272.9 L1100.0 273.7 L1104.0 273.9 L1108.0 273.8 L1112.0 273.5 L1116.0 273.8 L1120.0 274.6 L1124.0 275.8 L1128.0 277.1 L1132.0 278.4 L1136.0 279.3 L1140.0 279.7 L1144.0 279.5 L1148.0 278.6 L1152.0 277.4 L1156.0 276.8 L1160.0 277.1 L1164.0 278.2 L1168.0 280.0 L1172.0 282.3 L1176.0 284.7 L1180.0 287.1 L1184.0 289.2 L1188.0 290.8 L1192.0 292.0 L1196.0 292.7 L1200.0 293.0 L1204.0 293.6 L1208.0 294.7 L1212.0 296.3 L1216.0 298.1 L1220.0 299.8 L1224.0 301.2 L1228.0 302.1 L1232.0 302.6 L1236.0 302.7 L1240.0 302.6 M1040.0 272.7 L1044.0 273.2 L1048.0 272.4 L1052.0 271.1 L1056.0 270.1 L1060.0 270.2 L1064.0 271.7 L1068.0 273.0 L1072.0 274.3 L1076.0 275.4 L1080.0 276.2 L1084.0 277.0 L1088.0 278.4 L1092.0 279.8 L1096.0 281.0 L1100.0 281.7 L1104.0 281.9 L1108.0 281.7 L1112.0 281.4 L1116.0 281.7 L1120.0 282.5 L1124.0 283.5 L1128.0 284.7 L1132.0 285.5 L1136.0 285.9 L1140.0 285.6 L1144.0 284.7 L1148.0 283.4 L1152.0 282.0 L1156.0 281.4 L1160.0 281.8 L1164.0 283.0 L1168.0 284.9 L1172.0 287.2 L1176.0 289.6 L1180.0 291.8 L1184.0 293.5 L1188.0 294.9 L1192.0 296.0 L1196.0 296.7 L1200.0 297.2 L1204.0 297.9 L1208.0 299.3 L1212.0 300.9 L1216.0 302.6 L1220.0 303.9 L1224.0 304.9 L1228.0 305.5 L1232.0 305.7 L1236.0 305.8 L1240.0 305.9 M1040.0 276.3 L1044.0 276.9 L1048.0 276.4 L1052.0 275.4 L1056.0 274.6 L1060.0 275.1 L1064.0 277.0 L1068.0 278.9 L1072.0 280.8 L1076.0 282.5 L1080.0 283.7 L1084.0 284.9 L1088.0 286.4 L1092.0 288.0 L1096.0 289.2 L1100.0 289.9 L1104.0 290.0 L1108.0 289.8 L1112.0 289.6 L1116.0 289.9 L1120.0 290.6 L1124.0 291.5 L1128.0 292.2 L1132.0 292.4 L1136.0 292.1 L1140.0 291.1 L1144.0 289.7 L1148.0 288.1 L1152.0 286.7 L1156.0 286.2 L1160.0 286.8 L1164.0 288.2 L1168.0 290.3 L1172.0 292.5 L1176.0 294.7 L1180.0 296.5 L1184.0 298.0 L1188.0 299.2 L1192.0 300.2 L1196.0 301.0 L1200.0 301.8 L1204.0 302.8 L1208.0 304.2 L1212.0 305.7 L1216.0 307.1 L1220.0 308.0 L1224.0 308.6 L1228.0 308.8 L1232.0 309.0 L1236.0 309.2 L1240.0 309.6 M1040.0 280.1 L1044.0 280.8 L1048.0 280.3 L1052.0 279.5 L1056.0 279.0 L1060.0 279.9 L1064.0 282.4 L1068.0 285.1 L1072.0 287.7 L1076.0 290.1 L1080.0 291.7 L1084.0 293.0 L1088.0 294.7 L1092.0 296.2 L1096.0 297.4 L1100.0 298.1 L1104.0 298.2 L1108.0 298.1 L1112.0 298.0 L1116.0 298.3 L1120.0 298.8 L1124.0 299.4 L1128.0 299.5 L1132.0 299.0 L1136.0 297.9 L1140.0 296.3 L1144.0 294.5 L1148.0 292.8 L1152.0 291.6 L1156.0 291.4 L1160.0 292.3 L1164.0 293.9 L1168.0 296.0 L1172.0 298.1 L1176.0 299.9 L1180.0 301.4 L1184.0 302.6 L1188.0 303.7 L1192.0 304.7 L1196.0 305.8 L1200.0 306.8 L1204.0 307.9 L1208.0 309.3 L1212.0 310.6 L1216.0 311.5 L1220.0 312.0 L1224.0 312.2 L1228.0 312.2 L1232.0 312.4 L1236.0 312.9 L1240.0 313.8 M1040.0 284.0 L1044.0 284.5 L1048.0 284.0 L1052.0 283.4 L1056.0 283.3 L1060.0 284.8 L1064.0 288.1 L1068.0 291.6 L1072.0 295.1 L1076.0 298.1 L1080.0 300.0 L1084.0 301.3 L1088.0 302.9 L1092.0 304.4 L1096.0 305.6 L1100.0 306.3 L1104.0 306.6 L1108.0 306.6 L1112.0 306.6 L1116.0 306.8 L1120.0 307.1 L1124.0 307.1 L1128.0 306.5 L1132.0 305.2 L1136.0 303.3 L1140.0 301.2 L1144.0 299.2 L1148.0 297.7 L1152.0 296.8 L1156.0 297.1 L1160.0 298.3 L1164.0 300.0 L1168.0 302.0 L1172.0 303.7 L1176.0 305.2 L1180.0 306.4 L1184.0 307.4 L1188.0 308.5 L1192.0 309.7 L1196.0 310.9 L1200.0 312.1 L1204.0 313.3 L1208.0 314.5 L1212.0 315.4 L1216.0 315.8 L1220.0 315.9 L1224.0 315.8 L1228.0 315.8 L1232.0 316.2 L1236.0 317.2 L1240.0 318.5 M1040.0 287.8 L1044.0 287.9 L1048.0 287.5 L1052.0 287.1 L1056.0 287.6 L1060.0 289.9 L1064.0 294.1 L1068.0 298.6 L1072.0 302.9 L1076.0 306.4 L1080.0 308.4 L1084.0 309.6 L1088.0 311.1 L1092.0 312.5 L1096.0 313.7 L1100.0 314.6 L1104.0 315.1 L1108.0 315.2 L1112.0 315.3 L1116.0 315.4 L1120.0 315.2 L1124.0 314.5 L1128.0 313.0 L1132.0 311.0 L1136.0 308.6 L1140.0 306.2 L1144.0 304.2 L1148.0 303.0 L1152.0 302.6 L1156.0 303.3 L1160.0 304.7 L1164.0 306.4 L1168.0 308.1 L1172.0 309.5 L1176.0 310.6 L1180.0 311.5 L1184.0 312.5 L1188.0 313.6 L1192.0 315.0 L1196.0 316.4 L1200.0 317.7 L1204.0 318.7 L1208.0 319.6 L1212.0 320.0 L1216.0 320.0 L1220.0 319.7 L1224.0 319.5 L1228.0 319.7 L1232.0 320.5 L1236.0 321.9 L1240.0 323.7 M1040.0 291.3 L1044.0 291.1 L1048.0 290.7 L1052.0 290.7 L1056.0 292.1 L1060.0 295.4 L1064.0 300.5 L1068.0 306.0 L1072.0 311.0 L1076.0 314.9 L1080.0 316.8 L1084.0 317.8 L1088.0 319.2 L1092.0 320.6 L1096.0 321.9 L1100.0 323.1 L1104.0 323.8 L1108.0 324.1 L1112.0 324.0 L1116.0 323.8 L1120.0 323.0 L1124.0 321.5 L1128.0 319.2 L1132.0 316.5 L1136.0 313.7 L1140.0 311.3 L1144.0 309.6 L1148.0 308.8 L1152.0 309.0 L1156.0 310.0 L1160.0 311.5 L1164.0 313.0 L1168.0 314.3 L1172.0 315.3 L1176.0 316.1 L1180.0 316.9 L1184.0 317.9 L1188.0 319.1 L1192.0 320.6 L1196.0 322.2 L1200.0 323.4 L1204.0 324.1 L1208.0 324.5 L1212.0 324.4 L1216.0 324.0 L1220.0 323.6 L1224.0 323.5 L1228.0 324.0 L1232.0 325.3 L1236.0 327.1 L1240.0 329.1 M1040.0 294.4 L1044.0 293.9 L1048.0 293.7 L1052.0 294.4 L1056.0 296.7 L1060.0 301.2 L1064.0 307.4 L1068.0 313.7 L1072.0 319.3 L1076.0 323.3 L1080.0 325.1 L1084.0 325.8 L1088.0 327.1 L1092.0 328.6 L1096.0 330.2 L1100.0 331.7 L1104.0 332.6 L1108.0 333.0 L1112.0 332.7 L1116.0 331.9 L1120.0 330.4 L1124.0 328.1 L1128.0 325.2 L1132.0 322.0 L1136.0 319.1 L1140.0 316.8 L1144.0 315.5 L1148.0 315.3 L1152.0 315.9 L1156.0 317.1 L1160.0 318.4 L1164.0 319.7 L1168.0 320.6 L1172.0 321.2 L1176.0 321.8 L1180.0 322.5 L1184.0 323.6 L1188.0 325.0 L1192.0 326.6 L1196.0 328.0 L1200.0 329.0 L1204.0 329.4 L1208.0 329.3 L1212.0 328.7 L1216.0 328.1 L1220.0 327.7 L1224.0 327.9 L1228.0 328.8 L1232.0 330.5 L1236.0 332.6 L1240.0 334.7 M1040.0 297.2 L1044.0 296.6 L1048.0 296.7 L1052.0 298.3 L1056.0 301.8 L1060.0 307.3 L1064.0 314.5 L1068.0 321.5 L1072.0 327.5 L1076.0 331.6 L1080.0 333.1 L1084.0 333.7 L1088.0 334.9 L1092.0 336.6 L1096.0 338.6 L1100.0 340.4 L1104.0 341.6 L1108.0 341.8 L1112.0 341.1 L1116.0 339.7 L1120.0 337.4 L1124.0 334.4 L1128.0 331.0 L1132.0 327.7 L1136.0 324.8 L1140.0 322.9 L1144.0 322.1 L1148.0 322.3 L1152.0 323.2 L1156.0 324.4 L1160.0 325.5 L1164.0 326.4 L1168.0 326.9 L1172.0 327.3 L1176.0 327.7 L1180.0 328.5 L1184.0 329.7 L1188.0 331.2 L1192.0 332.7 L1196.0 333.9 L1200.0 334.4 L1204.0 334.4 L1208.0 333.8 L1212.0 333.0 L1216.0 332.3 L1220.0 332.1 L1224.0 332.7 L1228.0 334.0 L1232.0 336.0 L1236.0 338.2 L1240.0 340.1 M1040.0 299.7 L1044.0 299.1 L1048.0 299.9 L1052.0 302.5 L1056.0 307.2 L1060.0 313.8 L1064.0 321.8 L1068.0 329.4 L1072.0 335.6 L1076.0 339.6 L1080.0 341.0 L1084.0 341.4 L1088.0 342.7 L1092.0 344.8 L1096.0 347.1 L1100.0 349.3 L1104.0 350.5 L1108.0 350.4 L1112.0 349.3 L1116.0 347.2 L1120.0 344.2 L1124.0 340.7 L1128.0 337.0 L1132.0 333.7 L1136.0 331.2 L1140.0 329.7 L1144.0 329.3 L1148.0 329.7 L1152.0 330.8 L1156.0 331.8 L1160.0 332.6 L1164.0 333.1 L1168.0 333.3 L1172.0 333.5 L1176.0 334.0 L1180.0 334.8 L1184.0 336.0 L1188.0 337.4 L1192.0 338.7 L1196.0 339.5 L1200.0 339.6 L1204.0 339.1 L1208.0 338.3 L1212.0 337.4 L1216.0 336.9 L1220.0 337.0 L1224.0 337.9 L1228.0 339.6 L1232.0 341.6 L1236.0 343.7 L1240.0 345.3 M1040.0 302.1 L1044.0 301.8 L1048.0 303.4 L1052.0 307.1 L1056.0 312.9 L1060.0 320.5 L1064.0 329.1 L1068.0 337.1 L1072.0 343.4 L1076.0 347.5 L1080.0 348.7 L1084.0 349.0 L1088.0 350.6 L1092.0 353.0 L1096.0 355.8 L1100.0 358.1 L1104.0 359.2 L1108.0 358.8 L1112.0 357.1 L1116.0 354.4 L1120.0 350.9 L1124.0 347.1 L1128.0 343.4 L1132.0 340.3 L1136.0 338.2 L1140.0 337.1 L1144.0 336.9 L1148.0 337.5 L1152.0 338.5 L1156.0 339.3 L1160.0 339.7 L1164.0 339.8 L1168.0 339.8 L1172.0 340.0 L1176.0 340.5 L1180.0 341.4 L1184.0 342.6 L1188.0 343.7 L1192.0 344.6 L1196.0 344.9 L1200.0 344.6 L1204.0 343.8 L1208.0 342.8 L1212.0 342.0 L1216.0 341.7 L1220.0 342.3 L1224.0 343.5 L1228.0 345.3 L1232.0 347.2 L1236.0 348.9 L1240.0 350.1 M1040.0 304.6 L1044.0 304.7 L1048.0 307.2 L1052.0 311.9 L1056.0 318.7 L1060.0 327.2 L1064.0 336.3 L1068.0 344.6 L1072.0 351.0 L1076.0 355.1 L1080.0 356.3 L1084.0 356.7 L1088.0 358.6 L1092.0 361.4 L1096.0 364.5 L1100.0 366.9 L1104.0 367.8 L1108.0 366.9 L1112.0 364.7 L1116.0 361.5 L1120.0 357.8 L1124.0 353.9 L1128.0 350.4 L1132.0 347.6 L1136.0 345.8 L1140.0 345.0 L1144.0 345.0 L1148.0 345.5 L1152.0 346.3 L1156.0 346.7 L1160.0 346.8 L1164.0 346.7 L1168.0 346.6 L1172.0 346.8 L1176.0 347.3 L1180.0 348.1 L1184.0 349.1 L1188.0 349.9 L1192.0 350.2 L1196.0 350.1 L1200.0 349.4 L1204.0 348.4 L1208.0 347.5 L1212.0 346.9 L1216.0 347.0 L1220.0 347.8 L1224.0 349.2 L1228.0 350.9 L1232.0 352.6 L1236.0 353.8 L1240.0 354.4 M1040.0 307.3 L1044.0 307.9 L1048.0 311.2 L1052.0 317.0 L1056.0 324.7 L1060.0 333.7 L1064.0 343.3 L1068.0 351.8 L1072.0 358.4 L1076.0 362.6 L1080.0 363.9 L1084.0 364.6 L1088.0 366.8 L1092.0 369.9 L1096.0 373.1 L1100.0 375.5 L1104.0 376.1 L1108.0 374.9 L1112.0 372.2 L1116.0 368.8 L1120.0 364.9 L1124.0 361.2 L1128.0 358.0 L1132.0 355.5 L1136.0 354.0 L1140.0 353.3 L1144.0 353.1 L1148.0 353.4 L1152.0 354.0 L1156.0 354.1 L1160.0 354.0 L1164.0 353.7 L1168.0 353.6 L1172.0 353.8 L1176.0 354.2 L1180.0 354.9 L1184.0 355.5 L1188.0 355.8 L1192.0 355.6 L1196.0 355.0 L1200.0 354.2 L1204.0 353.2 L1208.0 352.5 L1212.0 352.2 L1216.0 352.6 L1220.0 353.6 L1224.0 354.9 L1228.0 356.3 L1232.0 357.5 L1236.0 358.1 L1240.0 358.2 M1040.0 310.1 L1044.0 311.3 L1048.0 315.5 L1052.0 322.1 L1056.0 330.5 L1060.0 340.1 L1064.0 350.0 L1068.0 358.7 L1072.0 365.6 L1076.0 370.1 L1080.0 371.6 L1084.0 372.5 L1088.0 375.0 L1092.0 378.4 L1096.0 381.7 L1100.0 384.0 L1104.0 384.3 L1108.0 382.7 L1112.0 379.9 L1116.0 376.4 L1120.0 372.7 L1124.0 369.2 L1128.0 366.2 L1132.0 364.1 L1136.0 362.6 L1140.0 361.8 L1144.0 361.4 L1148.0 361.4 L1152.0 361.6 L1156.0 361.6 L1160.0 361.3 L1164.0 360.9 L1168.0 360.8 L1172.0 360.9 L1176.0 361.2 L1180.0 361.5 L1184.0 361.6 L1188.0 361.4 L1192.0 360.8 L1196.0 359.9 L1200.0 359.0 L1204.0 358.3 L1208.0 357.8 L1212.0 357.8 L1216.0 358.4 L1220.0 359.3 L1224.0 360.4 L1228.0 361.4 L1232.0 362.0 L1236.0 362.1 L1240.0 361.8 M1040.0 313.3 L1044.0 315.0 L1048.0 319.8 L1052.0 327.1 L1056.0 336.1 L1060.0 346.2 L1064.0 356.4 L1068.0 365.5 L1072.0 372.9 L1076.0 377.7 L1080.0 379.5 L1084.0 380.6 L1088.0 383.3 L1092.0 386.8 L1096.0 390.1 L1100.0 392.3 L1104.0 392.5 L1108.0 390.7 L1112.0 387.8 L1116.0 384.5 L1120.0 381.0 L1124.0 377.8 L1128.0 375.1 L1132.0 373.0 L1136.0 371.4 L1140.0 370.3 L1144.0 369.6 L1148.0 369.2 L1152.0 369.2 L1156.0 369.0 L1160.0 368.7 L1164.0 368.3 L1168.0 368.1 L1172.0 368.1 L1176.0 368.1 L1180.0 367.9 L1184.0 367.6 L1188.0 366.8 L1192.0 365.9 L1196.0 364.9 L1200.0 364.1 L1204.0 363.6 L1208.0 363.4 L1212.0 363.6 L1216.0 364.2 L1220.0 364.9 L1224.0 365.6 L1228.0 366.0 L1232.0 366.1 L1236.0 365.8 L1240.0 365.3 M1040.0 316.7 L1044.0 318.7 L1048.0 324.1 L1052.0 331.9 L1056.0 341.5 L1060.0 352.1 L1064.0 362.7 L1068.0 372.3 L1072.0 380.2 L1076.0 385.5 L1080.0 387.5 L1084.0 388.7 L1088.0 391.6 L1092.0 395.2 L1096.0 398.5 L1100.0 400.6 L1104.0 400.7 L1108.0 399.0 L1112.0 396.3 L1116.0 393.2 L1120.0 390.0 L1124.0 387.0 L1128.0 384.3 L1132.0 382.1 L1136.0 380.3 L1140.0 378.8 L1144.0 377.6 L1148.0 377.0 L1152.0 376.9 L1156.0 376.6 L1160.0 376.2 L1164.0 375.8 L1168.0 375.5 L1172.0 375.1 L1176.0 374.7 L1180.0 374.1 L1184.0 373.2 L1188.0 372.2 L1192.0 371.0 L1196.0 370.0 L1200.0 369.4 L1204.0 369.2 L1208.0 369.2 L1212.0 369.4 L1216.0 369.8 L1220.0 370.2 L1224.0 370.3 L1228.0 370.2 L1232.0 369.8 L1236.0 369.3 L1240.0 368.7 M1040.0 320.1 L1044.0 322.4 L1048.0 328.2 L1052.0 336.6 L1056.0 346.7 L1060.0 357.8 L1064.0 369.0 L1068.0 379.2 L1072.0 387.6 L1076.0 393.4 L1080.0 395.6 L1084.0 396.9 L1088.0 399.8 L1092.0 403.4 L1096.0 406.8 L1100.0 409.0 L1104.0 409.3 L1108.0 407.7 L1112.0 405.3 L1116.0 402.5 L1120.0 399.5 L1124.0 396.6 L1128.0 393.8 L1132.0 391.3 L1136.0 389.1 L1140.0 387.1 L1144.0 385.6 L1148.0 384.8 L1152.0 384.6 L1156.0 384.3 L1160.0 383.9 L1164.0 383.3 L1168.0 382.7 L1172.0 382.0 L1176.0 381.1 L1180.0 380.1 L1184.0 378.8 L1188.0 377.5 L1192.0 376.2 L1196.0 375.3 L1200.0 374.9 L1204.0 374.9 L1208.0 375.0 L1212.0 375.1 L1216.0 375.1 L1220.0 375.0 L1224.0 374.7 L1228.0 374.2 L1232.0 373.5 L1236.0 372.8 L1240.0 372.2 M1040.0 323.6 L1044.0 326.0 L1048.0 332.1 L1052.0 341.0 L1056.0 351.7 L1060.0 363.4 L1064.0 375.3 L1068.0 386.2 L1072.0 395.2 L1076.0 401.3 L1080.0 403.7 L1084.0 405.0 L1088.0 408.0 L1092.0 411.8 L1096.0 415.3 L1100.0 417.8 L1104.0 418.3 L1108.0 417.1 L1112.0 415.0 L1116.0 412.3 L1120.0 409.4 L1124.0 406.4 L1128.0 403.3 L1132.0 400.4 L1136.0 397.7 L1140.0 395.4 L1144.0 393.5 L1148.0 392.5 L1152.0 392.4 L1156.0 392.1 L1160.0 391.5 L1164.0 390.7 L1168.0 389.8 L1172.0 388.7 L1176.0 387.4 L1180.0 385.9 L1184.0 384.4 L1188.0 382.9 L1192.0 381.6 L1196.0 380.8 L1200.0 380.6 L1204.0 380.7 L1208.0 380.6 L1212.0 380.4 L1216.0 380.1 L1220.0 379.6 L1224.0 378.8 L1228.0 378.0 L1232.0 377.1 L1236.0 376.4 L1240.0 376.0 M1040.0 326.9 L1044.0 329.3 L1048.0 335.8 L1052.0 345.2 L1056.0 356.7 L1060.0 369.1 L1064.0 381.7 L1068.0 393.3 L1072.0 402.9 L1076.0 409.4 L1080.0 411.8 L1084.0 413.1 L1088.0 416.2 L1092.0 420.2 L1096.0 424.1 L1100.0 426.9 L1104.0 427.9 L1108.0 427.0 L1112.0 425.1 L1116.0 422.5 L1120.0 419.5 L1124.0 416.2 L1128.0 412.8 L1132.0 409.4 L1136.0 406.2 L1140.0 403.5 L1144.0 401.5 L1148.0 400.3 L1152.0 400.2 L1156.0 399.8 L1160.0 399.0 L1164.0 397.9 L1168.0 396.6 L1172.0 395.1 L1176.0 393.4 L1180.0 391.7 L1184.0 390.0 L1188.0 388.5 L1192.0 387.3 L1196.0 386.6 L1200.0 386.4 L1204.0 386.3 L1208.0 386.0 L1212.0 385.5 L1216.0 384.8 L1220.0 383.8 L1224.0 382.8 L1228.0 381.8 L1232.0 380.9 L1236.0 380.2 L1240.0 379.9 M1040.0 330.0 L1044.0 332.5 L1048.0 339.4 L1052.0 349.4 L1056.0 361.7 L1060.0 375.0 L1064.0 388.3 L1068.0 400.6 L1072.0 410.6 L1076.0 417.5 L1080.0 420.0 L1084.0 421.3 L1088.0 424.7 L1092.0 429.0 L1096.0 433.3 L1100.0 436.7 L1104.0 438.0 L1108.0 437.4 L1112.0 435.6 L1116.0 432.9 L1120.0 429.6 L1124.0 425.9 L1128.0 422.0 L1132.0 418.2 L1136.0 414.6 L1140.0 411.6 L1144.0 409.4 L1148.0 408.2 L1152.0 407.9 L1156.0 407.4 L1160.0 406.3 L1164.0 404.9 L1168.0 403.3 L1172.0 401.4 L1176.0 399.5 L1180.0 397.6 L1184.0 395.9 L1188.0 394.3 L1192.0 393.1 L1196.0 392.3 L1200.0 392.0 L1204.0 391.8 L1208.0 391.2 L1212.0 390.3 L1216.0 389.2 L1220.0 388.0 L1224.0 386.8 L1228.0 385.7 L1232.0 384.8 L1236.0 384.2 L1240.0 384.0" fill="none" stroke="#6cd4c6" stroke-opacity="0.60" stroke-width="0.60"/>
<path d="M1040.0 268.0 L1044.0 266.8 L1048.0 263.8 L1052.0 260.1 L1056.0 256.9 L1060.0 255.1 L1064.0 255.0 L1068.0 255.2 L1072.0 255.4 L1076.0 255.7 L1080.0 256.0 L1084.0 256.4 L1088.0 256.7 L1092.0 257.1 L1096.0 257.4 L1100.0 257.7 L1104.0 257.9 L1108.0 258.0 L1112.0 258.1 L1116.0 259.0 L1120.0 260.7 L1124.0 262.8 L1128.0 265.2 L1132.0 267.8 L1136.0 270.2 L1140.0 272.3 L1144.0 274.0 L1148.0 274.9 L1152.0 275.1 L1156.0 276.0 L1160.0 277.6 L1164.0 279.8 L1168.0 282.4 L1172.0 285.3 L1176.0 288.2 L1180.0 291.2 L1184.0 294.0 L1188.0 296.4 L1192.0 298.3 L1196.0 299.5 L1200.0 300.0 L1204.0 300.1 L1208.0 300.5 L1212.0 301.1 L1216.0 301.8 L1220.0 302.5 L1224.0 303.2 L1228.0 303.9 L1232.0 304.5 L1236.0 304.9 L1240.0 305.0 M1040.0 274.2 L1044.0 273.5 L1048.0 271.2 L1052.0 268.1 L1056.0 265.1 L1060.0 263.4 L1064.0 263.3 L1068.0 263.5 L1072.0 263.9 L1076.0 264.5 L1080.0 265.2 L1084.0 266.1 L1088.0 267.2 L1092.0 268.2 L1096.0 268.8 L1100.0 269.0 L1104.0 268.7 L1108.0 268.3 L1112.0 267.9 L1116.0 268.3 L1120.0 269.5 L1124.0 271.3 L1128.0 273.3 L1132.0 275.3 L1136.0 277.1 L1140.0 278.4 L1144.0 279.2 L1148.0 279.5 L1152.0 279.4 L1156.0 280.2 L1160.0 282.0 L1164.0 284.7 L1168.0 288.0 L1172.0 291.4 L1176.0 294.9 L1180.0 298.0 L1184.0 300.7 L1188.0 302.9 L1192.0 304.5 L1196.0 305.5 L1200.0 306.0 L1204.0 306.3 L1208.0 306.8 L1212.0 307.5 L1216.0 308.1 L1220.0 308.6 L1224.0 308.8 L1228.0 308.9 L1232.0 308.9 L1236.0 308.9 L1240.0 309.0 M1040.0 282.0 L1044.0 281.2 L1048.0 278.7 L1052.0 275.6 L1056.0 272.7 L1060.0 271.3 L1064.0 271.8 L1068.0 272.8 L1072.0 274.3 L1076.0 276.0 L1080.0 277.3 L1084.0 278.7 L1088.0 280.0 L1092.0 281.0 L1096.0 281.4 L1100.0 281.1 L1104.0 280.3 L1108.0 279.6 L1112.0 279.0 L1116.0 279.3 L1120.0 280.3 L1124.0 281.5 L1128.0 282.7 L1132.0 283.7 L1136.0 284.4 L1140.0 284.8 L1144.0 285.1 L1148.0 285.5 L1152.0 286.0 L1156.0 287.8 L1160.0 290.6 L1164.0 294.1 L1168.0 297.8 L1172.0 301.3 L1176.0 304.3 L1180.0 306.8 L1184.0 308.8 L1188.0 310.4 L1192.0 311.8 L1196.0 312.9 L1200.0 313.6 L1204.0 314.2 L1208.0 314.7 L1212.0 315.0 L1216.0 314.9 L1220.0 314.5 L1224.0 314.0 L1228.0 313.6 L1232.0 313.5 L1236.0 313.8 L1240.0 314.5 M1040.0 289.0 L1044.0 287.3 L1048.0 284.3 L1052.0 281.2 L1056.0 279.1 L1060.0 278.9 L1064.0 281.0 L1068.0 283.7 L1072.0 286.7 L1076.0 289.2 L1080.0 290.7 L1084.0 291.7 L1088.0 292.7 L1092.0 293.3 L1096.0 293.4 L1100.0 293.0 L1104.0 292.2 L1108.0 291.6 L1112.0 291.2 L1116.0 291.3 L1120.0 291.6 L1124.0 291.9 L1128.0 291.9 L1132.0 291.7 L1136.0 291.6 L1140.0 291.9 L1144.0 292.8 L1148.0 294.2 L1152.0 296.2 L1156.0 299.2 L1160.0 302.8 L1164.0 306.4 L1168.0 309.6 L1172.0 312.1 L1176.0 314.1 L1180.0 315.7 L1184.0 317.1 L1188.0 318.6 L1192.0 320.0 L1196.0 321.4 L1200.0 322.2 L1204.0 322.5 L1208.0 322.3 L1212.0 321.6 L1216.0 320.6 L1220.0 319.5 L1224.0 318.7 L1228.0 318.5 L1232.0 319.0 L1236.0 320.2 L1240.0 321.6 M1040.0 293.6 L1044.0 291.0 L1048.0 288.1 L1052.0 286.2 L1056.0 285.9 L1060.0 287.9 L1064.0 292.0 L1068.0 296.4 L1072.0 300.3 L1076.0 302.9 L1080.0 303.7 L1084.0 303.8 L1088.0 304.2 L1092.0 304.8 L1096.0 305.4 L1100.0 305.5 L1104.0 305.2 L1108.0 304.8 L1112.0 304.2 L1116.0 303.6 L1120.0 302.8 L1124.0 301.8 L1128.0 300.8 L1132.0 300.3 L1136.0 300.5 L1140.0 301.7 L1144.0 304.0 L1148.0 307.0 L1152.0 310.2 L1156.0 313.6 L1160.0 316.8 L1164.0 319.3 L1168.0 321.2 L1172.0 322.4 L1176.0 323.4 L1180.0 324.5 L1184.0 325.9 L1188.0 327.4 L1192.0 329.0 L1196.0 330.1 L1200.0 330.3 L1204.0 329.7 L1208.0 328.4 L1212.0 326.8 L1216.0 325.3 L1220.0 324.2 L1224.0 324.1 L1228.0 324.8 L1232.0 326.2 L1236.0 327.9 L1240.0 329.2 M1040.0 296.0 L1044.0 293.5 L1048.0 292.0 L1052.0 292.3 L1056.0 294.6 L1060.0 298.9 L1064.0 304.5 L1068.0 309.7 L1072.0 313.5 L1076.0 315.4 L1080.0 315.3 L1084.0 314.8 L1088.0 315.5 L1092.0 316.9 L1096.0 318.5 L1100.0 319.4 L1104.0 319.4 L1108.0 318.8 L1112.0 317.4 L1116.0 315.7 L1120.0 313.8 L1124.0 312.2 L1128.0 311.2 L1132.0 311.4 L1136.0 312.8 L1140.0 315.5 L1144.0 319.0 L1148.0 322.7 L1152.0 325.8 L1156.0 328.4 L1160.0 330.1 L1164.0 331.1 L1168.0 331.6 L1172.0 332.0 L1176.0 332.7 L1180.0 333.8 L1184.0 335.2 L1188.0 336.6 L1192.0 337.6 L1196.0 337.7 L1200.0 336.8 L1204.0 335.2 L1208.0 333.2 L1212.0 331.5 L1216.0 330.4 L1220.0 330.4 L1224.0 331.2 L1228.0 332.7 L1232.0 334.2 L1236.0 335.2 L1240.0 335.4 M1040.0 298.1 L1044.0 297.1 L1048.0 297.9 L1052.0 300.7 L1056.0 305.1 L1060.0 310.8 L1064.0 316.9 L1068.0 321.9 L1072.0 325.3 L1076.0 326.7 L1080.0 326.3 L1084.0 326.1 L1088.0 327.9 L1092.0 330.7 L1096.0 333.3 L1100.0 334.6 L1104.0 334.2 L1108.0 332.8 L1112.0 330.5 L1116.0 328.0 L1120.0 326.0 L1124.0 324.7 L1128.0 324.8 L1132.0 326.3 L1136.0 328.9 L1140.0 332.3 L1144.0 335.7 L1148.0 338.6 L1152.0 340.5 L1156.0 341.5 L1160.0 341.7 L1164.0 341.6 L1168.0 341.5 L1172.0 341.7 L1176.0 342.5 L1180.0 343.5 L1184.0 344.4 L1188.0 344.9 L1192.0 344.6 L1196.0 343.5 L1200.0 341.7 L1204.0 339.8 L1208.0 338.2 L1212.0 337.4 L1216.0 337.4 L1220.0 338.3 L1224.0 339.5 L1228.0 340.6 L1232.0 341.0 L1236.0 340.5 L1240.0 339.0 M1040.0 302.3 L1044.0 303.0 L1048.0 305.9 L1052.0 310.4 L1056.0 315.9 L1060.0 322.0 L1064.0 328.0 L1068.0 332.9 L1072.0 336.3 L1076.0 338.2 L1080.0 338.4 L1084.0 339.2 L1088.0 342.2 L1092.0 346.0 L1096.0 349.1 L1100.0 350.1 L1104.0 349.0 L1108.0 346.9 L1112.0 344.3 L1116.0 342.1 L1120.0 340.8 L1124.0 340.8 L1128.0 341.9 L1132.0 344.1 L1136.0 346.7 L1140.0 349.3 L1144.0 351.3 L1148.0 352.5 L1152.0 352.9 L1156.0 352.6 L1160.0 352.0 L1164.0 351.6 L1168.0 351.5 L1172.0 351.7 L1176.0 352.2 L1180.0 352.5 L1184.0 352.3 L1188.0 351.4 L1192.0 350.0 L1196.0 348.2 L1200.0 346.6 L1204.0 345.5 L1208.0 344.9 L1212.0 345.1 L1216.0 345.9 L1220.0 346.7 L1224.0 347.2 L1228.0 346.9 L1232.0 345.6 L1236.0 343.6 L1240.0 341.2 M1040.0 308.8 L1044.0 310.7 L1048.0 314.6 L1052.0 319.8 L1056.0 325.7 L1060.0 332.0 L1064.0 338.3 L1068.0 343.8 L1072.0 348.2 L1076.0 351.2 L1080.0 352.4 L1084.0 354.0 L1088.0 357.7 L1092.0 361.9 L1096.0 365.1 L1100.0 365.7 L1104.0 364.3 L1108.0 362.4 L1112.0 360.4 L1116.0 359.1 L1120.0 358.8 L1124.0 359.4 L1128.0 360.6 L1132.0 362.0 L1136.0 363.3 L1140.0 364.1 L1144.0 364.3 L1148.0 364.0 L1152.0 363.5 L1156.0 362.8 L1160.0 362.2 L1164.0 361.8 L1168.0 361.6 L1172.0 361.5 L1176.0 361.0 L1180.0 360.1 L1184.0 358.7 L1188.0 356.9 L1192.0 355.1 L1196.0 353.7 L1200.0 353.0 L1204.0 353.0 L1208.0 353.3 L1212.0 353.9 L1216.0 354.2 L1220.0 354.0 L1224.0 353.0 L1228.0 351.2 L1232.0 348.8 L1236.0 346.4 L1240.0 344.2 M1040.0 316.4 L1044.0 318.4 L1048.0 322.6 L1052.0 328.1 L1056.0 334.6 L1060.0 341.7 L1064.0 349.1 L1068.0 356.0 L1072.0 361.9 L1076.0 366.1 L1080.0 367.9 L1084.0 369.7 L1088.0 373.7 L1092.0 378.1 L1096.0 381.4 L1100.0 382.3 L1104.0 381.3 L1108.0 380.1 L1112.0 379.0 L1116.0 378.3 L1120.0 378.1 L1124.0 378.1 L1128.0 378.0 L1132.0 377.8 L1136.0 377.1 L1140.0 376.2 L1144.0 375.1 L1148.0 374.2 L1152.0 373.7 L1156.0 373.2 L1160.0 372.7 L1164.0 372.1 L1168.0 371.4 L1172.0 370.3 L1176.0 368.8 L1180.0 367.0 L1184.0 365.0 L1188.0 363.2 L1192.0 361.8 L1196.0 361.1 L1200.0 361.3 L1204.0 361.8 L1208.0 362.0 L1212.0 361.9 L1216.0 361.1 L1220.0 359.6 L1224.0 357.5 L1228.0 355.1 L1232.0 352.8 L1236.0 350.9 L1240.0 349.7 M1040.0 323.5 L1044.0 325.3 L1048.0 329.8 L1052.0 336.1 L1056.0 343.9 L1060.0 352.6 L1064.0 361.6 L1068.0 370.0 L1072.0 377.1 L1076.0 382.0 L1080.0 383.9 L1084.0 385.7 L1088.0 389.9 L1092.0 394.9 L1096.0 399.0 L1100.0 400.6 L1104.0 400.2 L1108.0 399.5 L1112.0 398.4 L1116.0 397.3 L1120.0 396.0 L1124.0 394.5 L1128.0 392.7 L1132.0 390.8 L1136.0 388.7 L1140.0 386.8 L1144.0 385.3 L1148.0 384.4 L1152.0 384.2 L1156.0 383.8 L1160.0 383.0 L1164.0 381.9 L1168.0 380.5 L1172.0 378.7 L1176.0 376.7 L1180.0 374.6 L1184.0 372.7 L1188.0 371.2 L1192.0 370.2 L1196.0 369.8 L1200.0 370.0 L1204.0 370.2 L1208.0 369.8 L1212.0 368.7 L1216.0 367.1 L1220.0 365.0 L1224.0 362.8 L1228.0 360.7 L1232.0 359.0 L1236.0 357.8 L1240.0 357.4 M1040.0 330.0 L1044.0 332.0 L1048.0 337.3 L1052.0 345.1 L1056.0 354.6 L1060.0 365.0 L1064.0 375.4 L1068.0 384.9 L1072.0 392.7 L1076.0 398.0 L1080.0 400.0 L1084.0 402.1 L1088.0 407.0 L1092.0 413.0 L1096.0 417.9 L1100.0 420.0 L1104.0 419.5 L1108.0 418.3 L1112.0 416.4 L1116.0 414.0 L1120.0 411.2 L1124.0 408.2 L1128.0 405.3 L1132.0 402.4 L1136.0 399.8 L1140.0 397.6 L1144.0 396.0 L1148.0 395.1 L1152.0 394.9 L1156.0 394.3 L1160.0 393.2 L1164.0 391.7 L1168.0 390.0 L1172.0 388.0 L1176.0 386.0 L1180.0 384.0 L1184.0 382.1 L1188.0 380.5 L1192.0 379.2 L1196.0 378.3 L1200.0 378.0 L1204.0 377.7 L1208.0 376.8 L1212.0 375.4 L1216.0 373.8 L1220.0 372.0 L1224.0 370.2 L1228.0 368.6 L1232.0 367.2 L1236.0 366.3 L1240.0 366.0" fill="none" stroke="#6cd4c6" stroke-opacity="0.45" stroke-width="0.55"/><path d="M1045.7 265.7 L1044.4 269.6 L1043.2 273.8 L1042.2 278.0 L1041.2 282.0 L1040.2 285.7 M1054.6 257.9 L1053.5 262.7 L1052.4 267.7 L1051.4 272.5 L1050.5 276.8 L1049.6 280.5 L1048.7 283.8 L1047.7 286.6 L1046.7 289.0 L1045.6 291.2 L1044.3 293.3 L1042.9 295.4 L1041.4 297.6 M1063.7 255.0 L1062.7 259.1 L1061.7 263.3 L1060.8 267.4 L1059.9 271.3 L1059.0 275.1 L1058.0 278.7 L1056.9 282.3 L1055.8 285.9 L1054.5 289.4 L1053.1 292.8 L1051.6 296.0 L1049.8 298.9 L1048.0 301.6 L1045.9 304.1 L1043.7 306.5 L1041.4 309.2 M1073.0 255.4 L1072.0 259.3 L1071.1 263.8 L1070.2 268.4 L1069.2 273.2 L1068.3 278.2 L1067.2 283.1 L1066.0 288.1 L1064.8 292.9 L1063.3 297.3 L1061.7 301.3 L1060.0 304.9 L1058.1 308.0 L1056.0 310.6 L1053.8 312.8 L1051.4 314.4 L1048.9 315.7 L1046.4 316.8 L1043.7 318.2 L1041.0 320.3 M1082.3 256.2 L1081.4 260.2 L1080.5 265.3 L1079.5 270.9 L1078.5 276.9 L1077.5 283.1 L1076.3 289.4 L1075.0 295.5 L1073.5 301.5 L1071.9 307.0 L1070.1 311.9 L1068.2 316.2 L1066.1 319.8 L1063.9 322.5 L1061.5 324.4 L1059.0 325.5 L1056.4 326.3 L1053.7 326.6 L1051.0 326.6 L1048.3 326.6 L1045.6 326.8 L1042.9 327.8 L1040.3 330.0 M1091.7 257.1 L1090.7 261.9 L1089.8 267.7 L1088.8 273.7 L1087.7 279.9 L1086.5 286.0 L1085.2 292.0 L1083.7 297.9 L1082.1 303.6 L1080.3 309.6 L1078.3 315.6 L1076.2 321.2 L1074.0 326.2 L1071.5 330.5 L1069.0 333.9 L1066.4 336.4 L1063.7 337.9 L1061.0 338.5 L1058.3 338.6 L1055.6 338.4 L1052.9 337.9 L1050.4 337.3 L1047.9 337.1 M1101.0 257.7 L1100.1 262.9 L1099.1 269.0 L1098.0 275.2 L1096.7 281.4 L1095.4 287.5 L1093.9 293.4 L1092.3 299.1 L1090.4 304.6 L1088.5 309.9 L1086.3 315.0 L1084.0 320.3 L1081.6 326.0 L1079.1 332.3 L1076.4 338.3 L1073.8 343.3 L1071.0 347.3 L1068.3 350.1 L1065.6 352.0 L1063.0 353.1 L1060.4 353.6 L1058.0 353.7 L1055.6 353.7 M1110.3 258.0 L1109.3 262.7 L1108.2 268.3 L1107.0 274.0 L1105.6 280.0 L1104.1 286.2 L1102.4 292.5 L1100.6 299.0 L1098.6 305.5 L1096.4 311.8 L1094.1 317.8 L1091.7 323.4 L1089.1 328.6 L1086.5 333.7 L1083.8 339.1 L1081.1 345.2 L1078.3 352.2 L1075.6 358.2 L1073.0 363.2 L1070.5 367.1 L1068.0 370.1 L1065.7 372.4 L1063.6 374.2 M1119.6 260.5 L1118.5 264.1 L1117.2 268.6 L1115.8 273.6 L1114.3 279.1 L1112.6 285.0 L1110.7 291.3 L1108.7 298.0 L1106.5 305.0 L1104.2 312.2 L1101.7 319.5 L1099.1 326.8 L1096.5 333.6 L1093.8 339.6 L1091.1 345.1 L1088.4 350.2 L1085.7 355.4 L1083.1 361.1 L1080.5 367.9 L1078.1 375.4 L1075.8 381.8 L1073.7 387.4 L1071.7 392.2 M1128.7 265.7 L1127.4 268.6 L1126.0 272.3 L1124.5 276.5 L1122.7 281.1 L1120.8 286.1 L1118.8 291.5 L1116.6 297.5 L1114.2 303.9 L1111.8 310.9 L1109.2 318.5 L1106.5 326.3 L1103.8 334.2 L1101.1 342.2 L1098.4 350.0 L1095.7 356.9 L1093.1 363.0 L1090.6 368.5 L1088.2 373.9 L1085.9 379.5 L1083.8 385.5 L1081.8 392.3 L1080.0 400.0 M1137.6 271.1 L1136.2 273.5 L1134.6 276.5 L1132.9 279.9 L1131.0 283.5 L1128.9 287.5 L1126.7 291.9 L1124.3 296.8 L1121.8 302.4 L1119.2 308.6 L1116.6 315.5 L1113.8 323.0 L1111.1 331.0 L1108.4 339.5 L1105.7 348.2 L1103.1 356.9 L1100.6 365.6 L1098.2 373.9 L1096.0 381.4 L1093.9 388.3 L1092.0 394.9 L1090.2 401.3 L1088.6 407.9 M1146.4 274.6 L1144.8 276.6 L1143.0 279.1 L1141.1 281.8 L1139.0 284.7 L1136.7 288.0 L1134.4 291.6 L1131.8 295.8 L1129.2 300.6 L1126.6 306.0 L1123.9 312.2 L1121.1 319.1 L1118.4 326.7 L1115.8 334.9 L1113.2 343.6 L1110.7 352.8 L1108.3 362.2 L1106.1 371.7 L1104.0 381.3 L1102.1 391.0 L1100.4 400.6 L1098.8 410.1 L1097.4 419.1 M1155.0 275.7 L1153.2 277.1 L1151.2 279.3 L1149.1 282.2 L1146.8 285.3 L1144.4 288.6 L1141.9 292.2 L1139.3 296.2 L1136.6 300.6 L1133.9 305.6 L1131.2 311.2 L1128.5 317.6 L1125.8 324.6 L1123.2 332.3 L1120.8 340.7 L1118.4 349.7 L1116.2 359.1 L1114.2 368.9 L1112.3 378.9 L1110.6 389.1 L1109.0 399.2 L1107.6 409.2 L1106.3 418.9 M1163.3 279.4 L1161.3 280.0 L1159.2 281.6 L1156.9 283.9 L1154.5 286.9 L1151.9 290.6 L1149.3 294.8 L1146.6 299.3 L1143.9 303.9 L1141.2 308.9 L1138.5 314.4 L1135.8 320.4 L1133.3 327.0 L1130.8 334.3 L1128.5 342.1 L1126.3 350.6 L1124.3 359.4 L1122.4 368.7 L1120.7 378.0 L1119.2 387.4 L1117.8 396.7 L1116.6 405.7 L1115.4 414.3 M1171.4 284.8 L1169.3 285.5 L1167.0 287.1 L1164.5 289.4 L1162.0 292.3 L1159.3 295.7 L1156.6 299.8 L1153.9 304.4 L1151.2 309.5 L1148.5 315.0 L1145.9 320.7 L1143.3 326.7 L1140.9 333.1 L1138.6 339.8 L1136.4 347.0 L1134.4 354.5 L1132.6 362.3 L1130.9 370.1 L1129.4 378.0 L1128.0 385.7 L1126.8 393.3 L1125.7 400.6 L1124.7 407.7 M1179.4 290.7 L1177.0 291.8 L1174.6 293.7 L1172.0 296.1 L1169.4 299.0 L1166.7 302.4 L1163.9 306.3 L1161.2 310.8 L1158.5 315.7 L1155.9 321.1 L1153.4 326.8 L1151.0 332.8 L1148.7 339.0 L1146.5 345.2 L1144.6 351.5 L1142.8 357.9 L1141.1 364.2 L1139.6 370.4 L1138.3 376.6 L1137.1 382.7 L1136.0 388.7 L1134.9 394.8 L1134.0 401.0 M1187.1 295.9 L1184.6 297.4 L1182.0 299.4 L1179.4 301.9 L1176.7 304.8 L1174.0 308.0 L1171.2 311.7 L1168.6 315.8 L1166.0 320.3 L1163.4 325.2 L1161.0 330.5 L1158.8 335.9 L1156.7 341.6 L1154.7 347.2 L1152.9 352.9 L1151.3 358.4 L1149.8 363.8 L1148.5 369.0 L1147.3 374.3 L1146.2 379.6 L1145.2 385.0 L1144.3 390.5 L1143.4 396.2 M1194.7 299.2 L1192.1 301.2 L1189.4 303.5 L1186.7 306.0 L1184.0 308.8 L1181.3 311.8 L1178.6 315.1 L1176.0 318.8 L1173.5 322.8 L1171.1 327.1 L1168.9 331.7 L1166.8 336.5 L1164.9 341.5 L1163.1 346.6 L1161.5 351.8 L1160.0 357.1 L1158.7 362.4 L1157.6 367.7 L1156.5 373.1 L1155.5 378.5 L1154.6 384.0 L1153.6 389.4 L1152.7 394.9 M1202.1 300.0 L1199.4 302.7 L1196.7 305.7 L1194.0 308.6 L1191.3 311.6 L1188.6 314.6 L1186.0 317.8 L1183.6 321.2 L1181.2 324.9 L1179.0 328.8 L1176.9 332.9 L1175.0 337.3 L1173.3 341.9 L1171.7 346.7 L1170.3 351.6 L1169.0 356.6 L1167.8 361.7 L1166.8 366.7 L1165.8 371.8 L1164.8 376.9 L1163.9 382.0 L1163.0 387.2 L1162.1 392.5 M1209.5 300.7 L1206.7 303.2 L1204.0 306.3 L1201.3 309.8 L1198.7 313.5 L1196.1 317.1 L1193.6 320.6 L1191.3 324.2 L1189.1 327.9 L1187.0 331.7 L1185.2 335.6 L1183.4 339.7 L1181.9 343.9 L1180.5 348.2 L1179.2 352.4 L1178.1 356.7 L1177.0 360.8 L1176.1 365.0 L1175.1 369.2 L1174.2 373.5 L1173.3 378.1 L1172.3 383.0 L1171.3 388.4 M1216.8 301.9 L1214.0 304.3 L1211.3 307.4 L1208.7 310.8 L1206.1 314.5 L1203.7 318.3 L1201.4 322.3 L1199.2 326.4 L1197.2 330.3 L1195.3 334.0 L1193.6 337.7 L1192.1 341.3 L1190.7 344.7 L1189.5 348.1 L1188.3 351.3 L1187.3 354.5 L1186.3 357.7 L1185.4 361.1 L1184.5 364.8 L1183.6 368.8 L1182.6 373.3 L1181.5 378.3 L1180.4 383.8 M1224.1 303.3 L1221.4 305.6 L1218.7 308.4 L1216.2 311.6 L1213.8 315.0 L1211.5 318.5 L1209.3 322.1 L1207.3 325.8 L1205.5 329.3 L1203.8 332.7 L1202.3 336.0 L1200.9 339.0 L1199.7 341.9 L1198.6 344.7 L1197.6 347.5 L1196.6 350.5 L1195.7 353.8 L1194.8 357.4 L1193.8 361.4 L1192.9 365.7 L1191.8 370.2 L1190.6 375.0 L1189.3 380.0 M1231.4 304.4 L1228.8 306.4 L1226.2 308.9 L1223.8 311.5 L1221.5 314.3 L1219.4 317.2 L1217.4 320.2 L1215.6 323.1 L1214.0 326.0 L1212.5 328.9 L1211.2 331.8 L1209.9 334.8 L1208.9 338.0 L1207.8 341.4 L1206.9 345.0 L1206.0 348.9 L1205.1 353.1 L1204.1 357.3 L1203.1 361.7 L1202.1 365.9 L1200.9 370.1 L1199.5 374.1 L1198.1 378.1 M1238.8 305.0 L1236.3 306.8 L1233.9 308.9 L1231.6 311.2 L1229.5 313.5 L1227.6 315.9 L1225.8 318.5 L1224.2 321.2 L1222.7 324.0 L1221.4 327.1 L1220.2 330.4 L1219.1 334.0 L1218.1 337.8 L1217.2 341.8 L1216.3 345.9 L1215.3 350.0 L1214.4 354.1 L1213.4 358.0 L1212.3 361.9 L1211.1 365.6 L1209.8 369.4 L1208.3 373.2 L1206.6 377.1 M1239.7 311.5 L1237.7 314.1 L1236.0 316.8 L1234.4 319.7 L1232.9 322.8 L1231.6 326.1 L1230.5 329.6 L1229.4 333.2 L1228.4 336.9 L1227.5 340.5 L1226.5 343.9 L1225.6 347.1 L1224.7 350.2 L1223.7 353.1 L1222.5 356.0 L1221.3 359.0 L1220.0 362.2 L1218.5 365.8 L1216.8 369.8 L1215.0 374.2 M1239.7 332.5 L1238.7 335.4 L1237.7 338.0 L1236.8 340.3 L1235.9 342.3 L1234.9 344.2 L1233.9 346.2 L1232.8 348.3 L1231.6 350.8 L1230.2 353.8 L1228.7 357.3 L1227.0 361.2 L1225.1 365.7 L1223.1 370.6 M1238.8 349.9 L1237.1 353.8 L1235.2 358.0 L1233.2 362.6 L1231.0 367.5" fill="none" stroke="#6cd4c6" stroke-opacity="0.28" stroke-width="0.50"/>
<path d="M1052.0 250.0 L1056.0 249.7 L1060.0 249.2 L1064.0 248.6 L1068.0 248.1 L1072.0 247.5 L1076.0 247.1 L1080.0 247.0 L1084.0 247.1 L1088.0 247.3 L1092.0 247.6 L1096.0 248.1 L1100.0 248.5 L1104.0 248.9 L1108.0 249.4 L1112.0 249.7 L1116.0 249.9 L1120.0 250.0 L1124.0 250.4 L1128.0 251.5 L1132.0 253.0 L1136.0 254.9 L1140.0 257.0 L1144.0 259.1 L1148.0 261.0 L1152.0 262.5 L1156.0 263.6 L1160.0 264.0 L1164.0 264.5 L1168.0 265.9 L1172.0 267.9 L1176.0 270.3 L1180.0 273.0 L1184.0 275.7 L1188.0 278.1 L1192.0 280.1 L1196.0 281.5 L1200.0 282.0 L1204.0 282.3 L1208.0 283.0 L1212.0 284.2 L1216.0 285.5 L1220.0 287.0 L1224.0 288.5 L1228.0 289.8 L1232.0 291.0 L1236.0 291.7 L1240.0 292.0 M1052.0 251.4 L1056.0 250.7 L1060.0 249.8 L1064.0 248.9 L1068.0 247.9 L1072.0 247.3 L1076.0 246.9 L1080.0 246.9 L1084.0 247.2 L1088.0 247.7 L1092.0 248.3 L1096.0 248.9 L1100.0 249.4 L1104.0 250.0 L1108.0 250.5 L1112.0 251.1 L1116.0 251.5 L1120.0 251.9 L1124.0 252.6 L1128.0 253.9 L1132.0 255.6 L1136.0 257.5 L1140.0 259.4 L1144.0 261.2 L1148.0 262.9 L1152.0 264.3 L1156.0 265.3 L1160.0 265.8 L1164.0 266.5 L1168.0 268.1 L1172.0 270.3 L1176.0 272.9 L1180.0 275.6 L1184.0 278.1 L1188.0 280.4 L1192.0 282.2 L1196.0 283.4 L1200.0 283.9 L1204.0 284.1 L1208.0 284.8 L1212.0 285.9 L1216.0 287.1 L1220.0 288.3 L1224.0 289.4 L1228.0 290.3 L1232.0 291.1 L1236.0 291.6 L1240.0 291.9 M1052.0 252.1 L1056.0 251.1 L1060.0 249.8 L1064.0 248.7 L1068.0 247.9 L1072.0 247.4 L1076.0 247.4 L1080.0 247.8 L1084.0 248.4 L1088.0 249.1 L1092.0 249.7 L1096.0 250.4 L1100.0 251.0 L1104.0 251.7 L1108.0 252.6 L1112.0 253.4 L1116.0 254.3 L1120.0 254.9 L1124.0 255.7 L1128.0 256.9 L1132.0 258.4 L1136.0 259.9 L1140.0 261.5 L1144.0 263.1 L1148.0 264.7 L1152.0 266.3 L1156.0 267.6 L1160.0 268.4 L1164.0 269.3 L1168.0 271.1 L1172.0 273.3 L1176.0 275.7 L1180.0 278.1 L1184.0 280.4 L1188.0 282.5 L1192.0 284.2 L1196.0 285.4 L1200.0 285.9 L1204.0 286.1 L1208.0 286.7 L1212.0 287.5 L1216.0 288.2 L1220.0 289.0 L1224.0 289.7 L1228.0 290.4 L1232.0 291.2 L1236.0 291.9 L1240.0 292.5 M1052.0 252.1 L1056.0 250.8 L1060.0 249.7 L1064.0 248.8 L1068.0 248.5 L1072.0 248.5 L1076.0 248.9 L1080.0 249.5 L1084.0 250.2 L1088.0 250.9 L1092.0 251.6 L1096.0 252.3 L1100.0 253.2 L1104.0 254.2 L1108.0 255.5 L1112.0 256.7 L1116.0 257.7 L1120.0 258.3 L1124.0 258.8 L1128.0 259.6 L1132.0 260.6 L1136.0 261.8 L1140.0 263.2 L1144.0 264.9 L1148.0 266.8 L1152.0 268.8 L1156.0 270.5 L1160.0 271.6 L1164.0 272.6 L1168.0 274.2 L1172.0 276.1 L1176.0 278.1 L1180.0 280.2 L1184.0 282.3 L1188.0 284.4 L1192.0 286.2 L1196.0 287.4 L1200.0 287.8 L1204.0 287.9 L1208.0 288.1 L1212.0 288.3 L1216.0 288.7 L1220.0 289.1 L1224.0 289.7 L1228.0 290.7 L1232.0 291.9 L1236.0 293.2 L1240.0 294.4 M1052.0 251.8 L1056.0 250.8 L1060.0 250.2 L1064.0 250.0 L1068.0 250.2 L1072.0 250.7 L1076.0 251.3 L1080.0 251.8 L1084.0 252.4 L1088.0 253.1 L1092.0 253.8 L1096.0 254.8 L1100.0 256.1 L1104.0 257.6 L1108.0 259.1 L1112.0 260.4 L1116.0 261.2 L1120.0 261.3 L1124.0 261.2 L1128.0 261.4 L1132.0 262.1 L1136.0 263.2 L1140.0 264.9 L1144.0 267.1 L1148.0 269.6 L1152.0 272.0 L1156.0 273.9 L1160.0 274.9 L1164.0 275.6 L1168.0 276.8 L1172.0 278.2 L1176.0 279.9 L1180.0 281.9 L1184.0 284.1 L1188.0 286.3 L1192.0 288.2 L1196.0 289.4 L1200.0 289.5 L1204.0 289.1 L1208.0 288.7 L1212.0 288.6 L1216.0 288.7 L1220.0 289.2 L1224.0 290.3 L1228.0 291.9 L1232.0 293.9 L1236.0 295.9 L1240.0 297.5 M1052.0 252.2 L1056.0 251.9 L1060.0 252.0 L1064.0 252.4 L1068.0 253.0 L1072.0 253.5 L1076.0 254.0 L1080.0 254.4 L1084.0 254.9 L1088.0 255.5 L1092.0 256.6 L1096.0 258.0 L1100.0 259.6 L1104.0 261.3 L1108.0 262.8 L1112.0 263.7 L1116.0 263.9 L1120.0 263.3 L1124.0 262.6 L1128.0 262.6 L1132.0 263.3 L1136.0 264.8 L1140.0 267.1 L1144.0 270.0 L1148.0 272.9 L1152.0 275.4 L1156.0 277.2 L1160.0 277.8 L1164.0 278.0 L1168.0 278.6 L1172.0 279.8 L1176.0 281.5 L1180.0 283.7 L1184.0 286.0 L1188.0 288.3 L1192.0 290.1 L1196.0 290.9 L1200.0 290.6 L1204.0 289.6 L1208.0 288.9 L1212.0 288.7 L1216.0 289.1 L1220.0 290.3 L1224.0 292.2 L1228.0 294.6 L1232.0 297.2 L1236.0 299.6 L1240.0 301.2 M1052.0 253.8 L1056.0 254.3 L1060.0 255.0 L1064.0 255.7 L1068.0 256.2 L1072.0 256.6 L1076.0 256.7 L1080.0 257.0 L1084.0 257.5 L1088.0 258.5 L1092.0 259.9 L1096.0 261.6 L1100.0 263.4 L1104.0 264.9 L1108.0 265.9 L1112.0 266.1 L1116.0 265.5 L1120.0 264.4 L1124.0 263.5 L1128.0 263.7 L1132.0 264.9 L1136.0 267.2 L1140.0 270.1 L1144.0 273.3 L1148.0 276.3 L1152.0 278.6 L1156.0 279.8 L1160.0 279.9 L1164.0 279.6 L1168.0 280.1 L1172.0 281.3 L1176.0 283.3 L1180.0 285.6 L1184.0 288.1 L1188.0 290.2 L1192.0 291.6 L1196.0 292.0 L1200.0 291.1 L1204.0 289.9 L1208.0 289.3 L1212.0 289.6 L1216.0 290.8 L1220.0 292.9 L1224.0 295.6 L1228.0 298.6 L1232.0 301.4 L1236.0 303.6 L1240.0 304.8 M1052.0 256.9 L1056.0 257.8 L1060.0 258.7 L1064.0 259.2 L1068.0 259.4 L1072.0 259.4 L1076.0 259.4 L1080.0 259.7 L1084.0 260.5 L1088.0 261.8 L1092.0 263.5 L1096.0 265.2 L1100.0 266.7 L1104.0 267.6 L1108.0 267.8 L1112.0 267.3 L1116.0 266.3 L1120.0 265.1 L1124.0 264.6 L1128.0 265.4 L1132.0 267.3 L1136.0 270.2 L1140.0 273.4 L1144.0 276.6 L1148.0 279.2 L1152.0 280.9 L1156.0 281.7 L1160.0 281.3 L1164.0 281.0 L1168.0 281.6 L1172.0 283.2 L1176.0 285.3 L1180.0 287.8 L1184.0 290.1 L1188.0 291.8 L1192.0 292.7 L1196.0 292.7 L1200.0 291.7 L1204.0 290.7 L1208.0 290.8 L1212.0 291.9 L1216.0 294.0 L1220.0 296.9 L1224.0 300.1 L1228.0 303.2 L1232.0 305.6 L1236.0 307.2 L1240.0 307.9 M1052.0 260.7 L1056.0 261.7 L1060.0 262.3 L1064.0 262.4 L1068.0 262.3 L1072.0 262.2 L1076.0 262.2 L1080.0 262.7 L1084.0 263.8 L1088.0 265.2 L1092.0 266.7 L1096.0 268.0 L1100.0 268.8 L1104.0 269.0 L1108.0 268.6 L1112.0 267.9 L1116.0 267.0 L1120.0 266.2 L1124.0 266.3 L1128.0 267.8 L1132.0 270.3 L1136.0 273.3 L1140.0 276.4 L1144.0 279.2 L1148.0 281.3 L1152.0 282.6 L1156.0 283.1 L1160.0 282.8 L1164.0 282.6 L1168.0 283.6 L1172.0 285.4 L1176.0 287.6 L1180.0 289.9 L1184.0 291.8 L1188.0 293.1 L1192.0 293.7 L1196.0 293.7 L1200.0 293.1 L1204.0 292.8 L1208.0 293.8 L1212.0 295.8 L1216.0 298.6 L1220.0 301.7 L1224.0 304.7 L1228.0 307.3 L1232.0 309.2 L1236.0 310.2 L1240.0 310.5 M1052.0 264.7 L1056.0 265.3 L1060.0 265.4 L1064.0 265.3 L1068.0 265.0 L1072.0 264.9 L1076.0 265.1 L1080.0 265.8 L1084.0 266.8 L1088.0 268.0 L1092.0 269.0 L1096.0 269.7 L1100.0 269.9 L1104.0 269.6 L1108.0 269.1 L1112.0 268.6 L1116.0 268.2 L1120.0 268.1 L1124.0 268.9 L1128.0 270.7 L1132.0 273.3 L1136.0 276.1 L1140.0 278.8 L1144.0 281.1 L1148.0 282.8 L1152.0 284.0 L1156.0 284.6 L1160.0 284.6 L1164.0 284.8 L1168.0 286.0 L1172.0 287.8 L1176.0 289.9 L1180.0 291.8 L1184.0 293.4 L1188.0 294.6 L1192.0 295.3 L1196.0 295.7 L1200.0 295.9 L1204.0 296.4 L1208.0 298.1 L1212.0 300.6 L1216.0 303.4 L1220.0 306.2 L1224.0 308.7 L1228.0 310.7 L1232.0 312.0 L1236.0 312.8 L1240.0 313.0 M1052.0 268.1 L1056.0 268.3 L1060.0 268.1 L1064.0 267.8 L1068.0 267.6 L1072.0 267.5 L1076.0 267.8 L1080.0 268.4 L1084.0 269.1 L1088.0 269.8 L1092.0 270.3 L1096.0 270.5 L1100.0 270.4 L1104.0 270.2 L1108.0 270.0 L1112.0 270.1 L1116.0 270.3 L1120.0 270.7 L1124.0 271.7 L1128.0 273.5 L1132.0 275.9 L1136.0 278.3 L1140.0 280.6 L1144.0 282.6 L1148.0 284.4 L1152.0 285.8 L1156.0 286.7 L1160.0 287.0 L1164.0 287.5 L1168.0 288.7 L1172.0 290.3 L1176.0 292.1 L1180.0 293.8 L1184.0 295.4 L1188.0 296.8 L1192.0 298.0 L1196.0 299.1 L1200.0 299.9 L1204.0 301.0 L1208.0 302.9 L1212.0 305.3 L1216.0 307.7 L1220.0 309.9 L1224.0 311.8 L1228.0 313.3 L1232.0 314.4 L1236.0 315.1 L1240.0 315.5 M1052.0 270.8 L1056.0 270.8 L1060.0 270.5 L1064.0 270.2 L1068.0 269.9 L1072.0 269.9 L1076.0 270.0 L1080.0 270.2 L1084.0 270.5 L1088.0 270.8 L1092.0 270.9 L1096.0 271.0 L1100.0 271.2 L1104.0 271.4 L1108.0 271.8 L1112.0 272.3 L1116.0 272.9 L1120.0 273.5 L1124.0 274.3 L1128.0 275.9 L1132.0 277.9 L1136.0 280.0 L1140.0 282.3 L1144.0 284.4 L1148.0 286.4 L1152.0 288.1 L1156.0 289.4 L1160.0 289.8 L1164.0 290.3 L1168.0 291.4 L1172.0 292.8 L1176.0 294.6 L1180.0 296.4 L1184.0 298.2 L1188.0 300.1 L1192.0 301.9 L1196.0 303.4 L1200.0 304.5 L1204.0 305.7 L1208.0 307.3 L1212.0 309.1 L1216.0 311.0 L1220.0 312.7 L1224.0 314.3 L1228.0 315.6 L1232.0 316.7 L1236.0 317.5 L1240.0 318.0 M1052.0 273.1 L1056.0 272.9 L1060.0 272.6 L1064.0 272.2 L1068.0 271.8 L1072.0 271.5 L1076.0 271.3 L1080.0 271.2 L1084.0 271.3 L1088.0 271.4 L1092.0 271.7 L1096.0 272.2 L1100.0 272.7 L1104.0 273.4 L1108.0 274.2 L1112.0 274.9 L1116.0 275.5 L1120.0 275.9 L1124.0 276.5 L1128.0 277.8 L1132.0 279.7 L1136.0 281.9 L1140.0 284.3 L1144.0 286.8 L1148.0 289.1 L1152.0 291.0 L1156.0 292.4 L1160.0 292.8 L1164.0 293.2 L1168.0 294.2 L1172.0 295.8 L1176.0 297.7 L1180.0 299.8 L1184.0 302.1 L1188.0 304.3 L1192.0 306.3 L1196.0 307.9 L1200.0 308.8 L1204.0 309.5 L1208.0 310.6 L1212.0 312.0 L1216.0 313.5 L1220.0 314.9 L1224.0 316.4 L1228.0 317.8 L1232.0 318.9 L1236.0 319.8 L1240.0 320.2 M1052.0 275.0 L1056.0 274.7 L1060.0 274.2 L1064.0 273.6 L1068.0 273.1 L1072.0 272.5 L1076.0 272.1 L1080.0 272.0 L1084.0 272.2 L1088.0 272.6 L1092.0 273.3 L1096.0 274.1 L1100.0 275.0 L1104.0 275.9 L1108.0 276.7 L1112.0 277.4 L1116.0 277.8 L1120.0 278.0 L1124.0 278.5 L1128.0 279.9 L1132.0 281.9 L1136.0 284.3 L1140.0 287.0 L1144.0 289.7 L1148.0 292.1 L1152.0 294.1 L1156.0 295.5 L1160.0 296.0 L1164.0 296.4 L1168.0 297.7 L1172.0 299.5 L1176.0 301.6 L1180.0 304.0 L1184.0 306.4 L1188.0 308.5 L1192.0 310.3 L1196.0 311.6 L1200.0 312.0 L1204.0 312.3 L1208.0 313.0 L1212.0 314.2 L1216.0 315.5 L1220.0 317.0 L1224.0 318.5 L1228.0 319.8 L1232.0 321.0 L1236.0 321.7 L1240.0 322.0" fill="none" stroke="#6cd4c6" stroke-opacity="0.50" stroke-width="0.60"/>
<path d="M724 392L850 400L864 442L742 442Z" fill="url(#lap)" filter="url(#b1)"/>
<g filter="url(#b05)">
<path d="M1066 277C1074 275 1085 281 1092 291C1098 302 1100 318 1100 335C1102 365 1108 400 1115 442L1072 442C1071 400 1066 345 1068 300Z" fill="url(#arm)"/>
<path d="M1066 277C1074 275 1085 281 1092 291C1098 302 1100 318 1100 335C1102 365 1108 400 1115 442L1072 442C1071 400 1066 345 1068 300Z" fill="url(#armv)"/>
<path d="M1000 340L1034 271L1066 267C1071 275 1071 290 1069 305C1067 340 1070 400 1072 442L938 442C945 410 948 380 944 358L985 352Z" fill="url(#dress)"/>
<path d="M984 272L1000 258L1034 271L1000 341C994 325 988 305 984 285Z" fill="#c59a89"/>
<path d="M984 268L1034 266L1020 292C1005 290 992 282 984 268Z" fill="#6e483e" opacity=".7" filter="url(#b2)"/>
<path d="M980 144C1000 143 1018 150 1027 162C1035 175 1040 195 1045 208C1050 222 1056 238 1064 248C1070 256 1072 262 1066 266C1055 272 1042 273 1034 271C1020 268 1008 262 1000 258C994 290 992 320 990 345C986 352 975 356 960 357L936 358C944 348 946 335 942 318C934 300 928 280 927 260C924 240 923 215 925 200C927 185 931 172 937 166C948 152 962 145 980 144Z" fill="#0b0c16"/>
<path d="M942 185C947 181 954 180 960 181C964 186 967 192 969 197C972 202 975 206 979 210C983 216 987 222 991 228C995 234 998 242 999 248C999 255 998 261 996 266C994 270 991 273 988 275C982 279 975 281 969 281C965 278 962 274 960 270C958 265 956 260 956 256C955 253 955 250 954 247C951 245 949 243 947 240C944 236 943 232 942 228C938 226 935 224 934 221C933 216 933 212 934 208C934 200 937 190 942 185Z" fill="url(#face)"/>
<path d="M960 181C966 190 974 203 982 214C990 226 997 240 999 250C998 262 994 270 988 275C992 262 990 245 984 232C976 216 964 200 952 190Z" fill="#5a342c" opacity=".55" filter="url(#b2)"/>
<path d="M942 185C950 181 956 180 960 181C956 188 950 194 943 198C938 202 935 206 934 210C933 200 937 190 942 185Z" fill="#3a2220" opacity=".7" filter="url(#b1)"/>
<ellipse cx="975" cy="240" rx="6" ry="8" fill="#ffe9e0" opacity=".55" filter="url(#b2)"/>
<path d="M937 166C930 176 926 190 925 205C923 225 925 250 928 268C932 290 940 310 944 328C946 340 942 352 936 358C950 352 958 340 958 322C956 300 948 280 944 262C941 250 942 240 942 228C938 226 935 224 934 221C933 212 934 200 937 192Z" fill="#16121a"/>
<path d="M931 240C934 275 944 305 950 335" stroke="#5a3c36" stroke-width="2.6" fill="none" opacity=".55" filter="url(#b1)"/>
<path d="M958 292C966 310 968 330 962 350" stroke="#3a2826" stroke-width="3" fill="none" opacity=".5" filter="url(#b1)"/>
<path d="M960 270C964 276 966 279 969 281C976 281 983 278 988 275C987 300 988 325 990 345C980 352 966 354 955 352C960 335 962 310 958 290C957 282 958 275 960 270Z" fill="#100d14"/>
<ellipse cx="1046" cy="246" rx="14" ry="20" fill="#10124a" opacity=".55" filter="url(#b6)"/>
<path d="M962 183C975 196 990 215 998 240C1004 262 1004 285 1000 305M968 184C985 200 1000 225 1006 250C1010 268 1010 282 1008 292M975 170C1000 185 1018 215 1026 250" stroke="#4a3330" stroke-width="1.6" fill="none" opacity=".55" filter="url(#b1)"/>
<path d="M1000 262C1006 275 1010 290 1006 312M1010 262C1014 272 1016 282 1014 292" stroke="#0d0b12" stroke-width="2" fill="none" opacity=".8"/>
<path d="M936 221.2C939 222.8 942 222.8 945.5 221.2C942 220.4 939 220.4 936 221.2Z" fill="#1f1112" stroke="#1f1112" stroke-width="1"/>
<path d="M960.5 220.6C965 223.4 970 223.2 974.5 220C970 219 965 219.2 960.5 220.6Z" fill="#1f1112" stroke="#1f1112" stroke-width="1.1"/>
<path d="M935 213.5C939 212.4 943 212.6 946 213.8M955.5 211.5C961 208.6 967 208.6 972 211.4" stroke="#3a2420" stroke-width="1.3" fill="none" opacity=".75"/>
<path d="M947 240C949 243 951.5 244 954 243" stroke="#a86a5c" stroke-width="1.3" fill="none"/>
<path d="M955.5 256C961 257.5 968 256 974.5 253C973 259.5 968 264 961 264.4C958 263.6 956.3 260.5 955.5 256Z" fill="#d4536b"/>
<path d="M957 256.8C962 257.6 968 256.2 972.5 254.2L971.6 256.6C967 259 961 259.6 957.6 258.6Z" fill="#fff" opacity=".9"/>
<path d="M940 300C950 297 957 304 958 318C958 340 946 372 930 402C922 417 916 430 912 442L878 442C882 428 888 412 898 394C912 366 926 330 940 300Z" fill="url(#arm2)"/>
<path d="M880 397L921 408L913 428L874 420Z" fill="#3c2a20"/>
<path d="M860 426C875 420 896 424 908 432L908 442L858 442Z" fill="#e3bcad"/>
</g>
<path d="M880.0 338.0 L884.0 338.1 L888.0 338.5 L892.0 339.2 L896.0 339.9 L900.0 340.8 L904.0 341.8 L908.0 342.7 L912.0 343.6 L916.0 344.5 L920.0 345.2 L924.0 345.7 L928.0 346.0 L932.0 346.1 L936.0 346.6 L940.0 347.6 L944.0 348.7 L948.0 349.9 L952.0 350.9 L956.0 351.7 L960.0 352.0 L964.0 351.8 L968.0 351.4 L972.0 350.7 L976.0 349.9 L980.0 349.0 L984.0 348.1 L988.0 347.3 L992.0 346.6 L996.0 346.2 L1000.0 346.0 L1004.0 344.8 L1008.0 341.8 L1012.0 337.6 L1016.0 332.8 L1020.0 328.2 L1024.0 324.5 L1028.0 322.3 L1032.0 321.4 L1036.0 316.8 L1040.0 309.0 L1044.0 299.5 L1048.0 289.6 L1052.0 280.8 L1056.0 274.4 L1060.0 272.0 L1064.0 268.5 L1068.0 261.0 L1072.0 254.1 L1076.0 252.0 M880.0 340.8 L884.0 341.0 L888.0 341.7 L892.0 342.7 L896.0 343.7 L900.0 344.7 L904.0 345.7 L908.0 346.8 L912.0 347.9 L916.0 349.1 L920.0 350.4 L924.0 351.6 L928.0 352.6 L932.0 353.3 L936.0 354.1 L940.0 355.0 L944.0 355.7 L948.0 356.3 L952.0 356.8 L956.0 357.1 L960.0 357.3 L964.0 357.4 L968.0 357.4 L972.0 357.4 L976.0 357.1 L980.0 356.6 L984.0 355.9 L988.0 355.0 L992.0 354.2 L996.0 353.5 L1000.0 353.2 L1004.0 352.1 L1008.0 349.3 L1012.0 345.3 L1016.0 340.7 L1020.0 336.0 L1024.0 331.7 L1028.0 328.7 L1032.0 326.8 L1036.0 321.5 L1040.0 313.5 L1044.0 304.2 L1048.0 294.9 L1052.0 286.9 L1056.0 280.7 L1060.0 277.7 L1064.0 273.4 L1068.0 265.2 L1072.0 257.8 L1076.0 255.6 M880.0 345.4 L884.0 346.2 L888.0 347.3 L892.0 348.4 L896.0 349.4 L900.0 350.4 L904.0 351.6 L908.0 353.0 L912.0 354.7 L916.0 356.8 L920.0 358.9 L924.0 360.8 L928.0 362.0 L932.0 362.5 L936.0 362.7 L940.0 362.8 L944.0 362.7 L948.0 362.7 L952.0 363.1 L956.0 363.7 L960.0 364.5 L964.0 365.3 L968.0 366.0 L972.0 366.3 L976.0 366.2 L980.0 365.5 L984.0 364.4 L988.0 363.2 L992.0 362.2 L996.0 361.6 L1000.0 361.4 L1004.0 360.5 L1008.0 357.8 L1012.0 353.7 L1016.0 348.7 L1020.0 343.2 L1024.0 338.0 L1028.0 334.1 L1032.0 331.5 L1036.0 326.3 L1040.0 319.1 L1044.0 311.1 L1048.0 303.4 L1052.0 296.7 L1056.0 290.6 L1060.0 286.4 L1064.0 280.5 L1068.0 271.0 L1072.0 262.8 L1076.0 260.5 M880.0 352.0 L884.0 353.2 L888.0 354.3 L892.0 355.2 L896.0 356.3 L900.0 357.5 L904.0 359.3 L908.0 361.6 L912.0 364.3 L916.0 367.1 L920.0 369.6 L924.0 371.3 L928.0 371.8 L932.0 371.3 L936.0 370.4 L940.0 369.6 L944.0 369.2 L948.0 369.4 L952.0 370.4 L956.0 371.9 L960.0 373.6 L964.0 374.9 L968.0 375.7 L972.0 375.7 L976.0 375.0 L980.0 373.8 L984.0 372.3 L988.0 371.1 L992.0 370.3 L996.0 370.0 L1000.0 370.0 L1004.0 369.0 L1008.0 365.8 L1012.0 360.9 L1016.0 354.9 L1020.0 348.5 L1024.0 342.7 L1028.0 338.6 L1032.0 336.5 L1036.0 332.5 L1040.0 327.1 L1044.0 321.0 L1048.0 314.8 L1052.0 309.0 L1056.0 302.3 L1060.0 296.3 L1064.0 288.3 L1068.0 277.5 L1072.0 268.8 L1076.0 266.8 M880.0 360.3 L884.0 361.3 L888.0 362.2 L892.0 363.2 L896.0 364.5 L900.0 366.6 L904.0 369.3 L908.0 372.6 L912.0 375.9 L916.0 378.7 L920.0 380.5 L924.0 381.0 L928.0 380.2 L932.0 378.5 L936.0 376.9 L940.0 376.1 L944.0 376.2 L948.0 377.5 L952.0 379.5 L956.0 381.8 L960.0 383.7 L964.0 384.8 L968.0 384.9 L972.0 384.1 L976.0 382.7 L980.0 381.2 L984.0 379.9 L988.0 379.1 L992.0 378.7 L996.0 378.5 L1000.0 378.1 L1004.0 376.3 L1008.0 372.0 L1012.0 366.1 L1016.0 359.3 L1020.0 352.7 L1024.0 347.5 L1028.0 344.6 L1032.0 343.9 L1036.0 341.8 L1040.0 338.2 L1044.0 333.5 L1048.0 328.2 L1052.0 322.6 L1056.0 314.7 L1060.0 306.7 L1064.0 296.8 L1068.0 285.0 L1072.0 276.2 L1076.0 274.7 M880.0 369.5 L884.0 370.2 L888.0 371.1 L892.0 372.6 L896.0 374.9 L900.0 377.9 L904.0 381.5 L908.0 385.0 L912.0 387.9 L916.0 389.5 L920.0 389.8 L924.0 388.7 L928.0 386.8 L932.0 384.7 L936.0 383.5 L940.0 383.6 L944.0 385.0 L948.0 387.3 L952.0 389.9 L956.0 392.1 L960.0 393.4 L964.0 393.5 L968.0 392.6 L972.0 391.2 L976.0 389.7 L980.0 388.5 L984.0 387.7 L988.0 387.4 L992.0 387.1 L996.0 386.3 L1000.0 384.9 L1004.0 381.7 L1008.0 376.4 L1012.0 370.0 L1016.0 363.5 L1020.0 358.2 L1024.0 354.7 L1028.0 353.7 L1032.0 354.7 L1036.0 354.1 L1040.0 351.5 L1044.0 347.3 L1048.0 342.2 L1052.0 336.4 L1056.0 327.4 L1060.0 317.7 L1064.0 306.5 L1068.0 294.0 L1072.0 285.1 L1076.0 283.8 M880.0 379.2 L884.0 380.0 L888.0 381.5 L892.0 383.9 L896.0 387.1 L900.0 390.7 L904.0 394.1 L908.0 396.7 L912.0 398.1 L916.0 398.0 L920.0 396.8 L924.0 394.8 L928.0 392.8 L932.0 391.4 L936.0 391.5 L940.0 392.9 L944.0 395.2 L948.0 397.8 L952.0 400.0 L956.0 401.3 L960.0 401.4 L964.0 400.5 L968.0 399.2 L972.0 397.8 L976.0 396.8 L980.0 396.2 L984.0 395.9 L988.0 395.5 L992.0 394.5 L996.0 392.6 L1000.0 389.9 L1004.0 385.8 L1008.0 380.4 L1012.0 374.8 L1016.0 370.0 L1020.0 366.9 L1024.0 365.6 L1028.0 366.3 L1032.0 368.2 L1036.0 368.0 L1040.0 365.4 L1044.0 361.1 L1048.0 356.0 L1052.0 350.4 L1056.0 340.8 L1060.0 330.0 L1064.0 317.5 L1068.0 304.2 L1072.0 294.5 L1076.0 292.4 M880.0 389.7 L884.0 391.1 L888.0 393.4 L892.0 396.5 L896.0 399.8 L900.0 402.9 L904.0 405.1 L908.0 406.0 L912.0 405.7 L916.0 404.3 L920.0 402.5 L924.0 400.8 L928.0 399.9 L932.0 399.9 L936.0 401.2 L940.0 403.3 L944.0 405.7 L948.0 407.6 L952.0 408.6 L956.0 408.7 L960.0 407.9 L964.0 406.7 L968.0 405.6 L972.0 404.9 L976.0 404.5 L980.0 404.3 L984.0 403.9 L988.0 402.7 L992.0 400.6 L996.0 397.7 L1000.0 394.3 L1004.0 390.4 L1008.0 386.2 L1012.0 382.7 L1016.0 380.3 L1020.0 379.3 L1024.0 379.6 L1028.0 380.9 L1032.0 382.5 L1036.0 381.7 L1040.0 378.7 L1044.0 374.4 L1048.0 369.8 L1052.0 365.0 L1056.0 355.4 L1060.0 343.3 L1064.0 329.3 L1068.0 314.3 L1072.0 302.9 L1076.0 299.5 M880.0 401.2 L884.0 403.2 L888.0 405.9 L892.0 408.7 L896.0 411.2 L900.0 412.9 L904.0 413.4 L908.0 412.9 L912.0 411.6 L916.0 410.0 L920.0 408.8 L924.0 408.4 L928.0 408.7 L932.0 409.8 L936.0 411.6 L940.0 413.4 L944.0 414.9 L948.0 415.6 L952.0 415.5 L956.0 414.9 L960.0 414.0 L964.0 413.2 L968.0 412.8 L972.0 412.7 L976.0 412.6 L980.0 412.1 L984.0 411.0 L988.0 408.9 L992.0 406.2 L996.0 403.1 L1000.0 400.3 L1004.0 397.8 L1008.0 395.7 L1012.0 394.3 L1016.0 393.8 L1020.0 394.1 L1024.0 394.7 L1028.0 395.4 L1032.0 396.0 L1036.0 394.5 L1040.0 391.4 L1044.0 387.7 L1048.0 384.2 L1052.0 380.5 L1056.0 370.7 L1060.0 356.9 L1064.0 340.4 L1068.0 322.9 L1072.0 309.6 L1076.0 304.9 M880.0 413.0 L884.0 415.1 L888.0 417.3 L892.0 419.1 L896.0 420.1 L900.0 420.3 L904.0 419.7 L908.0 418.7 L912.0 417.6 L916.0 416.9 L920.0 416.8 L924.0 417.5 L928.0 418.7 L932.0 419.9 L936.0 421.2 L940.0 422.1 L944.0 422.4 L948.0 422.3 L952.0 421.8 L956.0 421.2 L960.0 420.9 L964.0 420.7 L968.0 420.8 L972.0 420.8 L976.0 420.4 L980.0 419.4 L984.0 417.6 L988.0 415.3 L992.0 412.9 L996.0 410.7 L1000.0 409.4 L1004.0 408.7 L1008.0 408.4 L1012.0 408.5 L1016.0 408.7 L1020.0 408.9 L1024.0 408.9 L1028.0 408.7 L1032.0 408.3 L1036.0 406.5 L1040.0 404.0 L1044.0 401.4 L1048.0 399.2 L1052.0 396.3 L1056.0 385.6 L1060.0 369.4 L1064.0 349.8 L1068.0 329.9 L1072.0 314.9 L1076.0 309.8 M880.0 423.9 L884.0 425.3 L888.0 426.3 L892.0 426.9 L896.0 427.0 L900.0 426.5 L904.0 425.8 L908.0 425.3 L912.0 425.1 L916.0 425.4 L920.0 426.2 L924.0 427.3 L928.0 428.3 L932.0 429.0 L936.0 429.4 L940.0 429.5 L944.0 429.3 L948.0 429.0 L952.0 428.7 L956.0 428.6 L960.0 428.8 L964.0 429.0 L968.0 429.1 L972.0 428.8 L976.0 428.1 L980.0 426.9 L984.0 425.3 L988.0 423.6 L992.0 422.3 L996.0 421.6 L1000.0 421.7 L1004.0 422.1 L1008.0 422.6 L1012.0 422.9 L1016.0 422.8 L1020.0 422.4 L1024.0 421.6 L1028.0 420.7 L1032.0 419.9 L1036.0 418.5 L1040.0 416.8 L1044.0 415.2 L1048.0 413.8 L1052.0 411.3 L1056.0 399.2 L1060.0 380.3 L1064.0 357.9 L1068.0 336.1 L1072.0 320.3 L1076.0 315.6 M880.0 432.8 L884.0 433.2 L888.0 433.5 L892.0 433.5 L896.0 433.4 L900.0 433.3 L904.0 433.3 L908.0 433.6 L912.0 434.1 L916.0 434.9 L920.0 435.7 L924.0 436.5 L928.0 436.9 L932.0 437.0 L936.0 437.0 L940.0 436.8 L944.0 436.7 L948.0 436.7 L952.0 436.8 L956.0 437.0 L960.0 437.3 L964.0 437.5 L968.0 437.5 L972.0 437.2 L976.0 436.6 L980.0 435.9 L984.0 435.2 L988.0 434.7 L992.0 434.5 L996.0 434.7 L1000.0 435.3 L1004.0 435.8 L1008.0 436.0 L1012.0 435.8 L1016.0 435.2 L1020.0 434.2 L1024.0 433.1 L1028.0 432.1 L1032.0 431.3 L1036.0 430.3 L1040.0 429.3 L1044.0 428.3 L1048.0 427.4 L1052.0 424.9 L1056.0 411.6 L1060.0 390.5 L1064.0 366.0 L1068.0 343.0 L1072.0 326.9 L1076.0 322.6 M880.0 440.0 L884.0 440.1 L888.0 440.3 L892.0 440.7 L896.0 441.2 L900.0 441.8 L904.0 442.4 L908.0 442.9 L912.0 443.5 L916.0 444.0 L920.0 444.5 L924.0 444.8 L928.0 445.0 L932.0 445.0 L936.0 445.1 L940.0 445.2 L944.0 445.3 L948.0 445.5 L952.0 445.7 L956.0 445.9 L960.0 446.2 L964.0 446.4 L968.0 446.7 L972.0 446.9 L976.0 447.2 L980.0 447.4 L984.0 447.6 L988.0 447.8 L992.0 447.9 L996.0 448.0 L1000.0 448.0 L1004.0 447.9 L1008.0 447.5 L1012.0 446.8 L1016.0 446.1 L1020.0 445.2 L1024.0 444.2 L1028.0 443.3 L1032.0 442.4 L1036.0 441.5 L1040.0 440.8 L1044.0 440.3 L1048.0 440.0 L1052.0 438.0 L1056.0 424.0 L1060.0 401.3 L1064.0 375.1 L1068.0 351.0 L1072.0 334.4 L1076.0 330.0" fill="none" stroke="#66ccba" stroke-opacity="0.42" stroke-width="0.60"/>
<path d="M872.0 325.0 L876.0 324.7 L880.0 324.2 L884.0 323.6 L888.0 323.1 L892.0 322.5 L896.0 322.1 L900.0 322.0 L904.0 322.4 L908.0 323.4 L912.0 324.8 L916.0 326.4 L920.0 327.9 L924.0 329.2 L928.0 329.9 L932.0 330.2 L936.0 331.6 L940.0 333.9 L944.0 336.8 L948.0 339.7 L952.0 342.4 L956.0 344.3 L960.0 345.0 M872.0 329.7 L876.0 329.3 L880.0 328.7 L884.0 328.1 L888.0 327.5 L892.0 327.1 L896.0 326.7 L900.0 326.6 L904.0 326.8 L908.0 327.7 L912.0 328.9 L916.0 330.3 L920.0 331.8 L924.0 333.0 L928.0 333.8 L932.0 334.3 L936.0 336.0 L940.0 338.5 L944.0 341.5 L948.0 344.4 L952.0 346.8 L956.0 348.4 L960.0 348.7 M872.0 334.8 L876.0 334.2 L880.0 333.6 L884.0 333.1 L888.0 332.7 L892.0 332.3 L896.0 332.0 L900.0 331.6 L904.0 331.6 L908.0 332.2 L912.0 333.3 L916.0 334.7 L920.0 336.3 L924.0 337.9 L928.0 339.1 L932.0 339.9 L936.0 341.7 L940.0 344.2 L944.0 347.0 L948.0 349.5 L952.0 351.5 L956.0 352.7 L960.0 352.8 M872.0 339.6 L876.0 339.0 L880.0 338.6 L884.0 338.3 L888.0 338.0 L892.0 337.6 L896.0 337.1 L900.0 336.4 L904.0 336.1 L908.0 336.5 L912.0 337.7 L916.0 339.4 L920.0 341.5 L924.0 343.6 L928.0 345.2 L932.0 346.2 L936.0 347.8 L940.0 350.0 L944.0 352.3 L948.0 354.3 L952.0 356.0 L956.0 357.0 L960.0 357.1 M872.0 344.3 L876.0 343.9 L880.0 343.7 L884.0 343.5 L888.0 343.2 L892.0 342.6 L896.0 341.8 L900.0 340.7 L904.0 340.3 L908.0 340.9 L912.0 342.5 L916.0 344.9 L920.0 347.6 L924.0 350.2 L928.0 351.9 L932.0 352.7 L936.0 353.9 L940.0 355.5 L944.0 357.2 L948.0 358.9 L952.0 360.4 L956.0 361.6 L960.0 362.2 M872.0 349.0 L876.0 348.8 L880.0 348.7 L884.0 348.5 L888.0 348.0 L892.0 347.2 L896.0 346.0 L900.0 344.9 L904.0 344.6 L908.0 345.8 L912.0 348.1 L916.0 351.2 L920.0 354.5 L924.0 357.2 L928.0 358.7 L932.0 358.9 L936.0 359.4 L940.0 360.4 L944.0 361.8 L948.0 363.5 L952.0 365.4 L956.0 367.1 L960.0 368.2 M872.0 353.8 L876.0 353.7 L880.0 353.6 L884.0 353.1 L888.0 352.4 L892.0 351.3 L896.0 350.2 L900.0 349.4 L904.0 349.6 L908.0 351.6 L912.0 354.7 L916.0 358.3 L920.0 361.7 L924.0 364.1 L928.0 365.0 L932.0 364.5 L936.0 364.4 L940.0 365.2 L944.0 366.7 L948.0 368.8 L952.0 371.3 L956.0 373.7 L960.0 375.2 M872.0 358.5 L876.0 358.4 L880.0 358.0 L884.0 357.3 L888.0 356.4 L892.0 355.4 L896.0 354.8 L900.0 354.6 L904.0 355.7 L908.0 358.3 L912.0 361.9 L916.0 365.6 L920.0 368.7 L924.0 370.5 L928.0 370.8 L932.0 369.7 L936.0 369.4 L940.0 370.4 L944.0 372.4 L948.0 375.3 L952.0 378.4 L956.0 381.2 L960.0 382.8 M872.0 363.1 L876.0 362.6 L880.0 362.0 L884.0 361.2 L888.0 360.5 L892.0 360.2 L896.0 360.3 L900.0 360.9 L904.0 362.6 L908.0 365.7 L912.0 369.3 L916.0 372.6 L920.0 375.1 L924.0 376.3 L928.0 376.2 L932.0 374.9 L936.0 375.0 L940.0 376.5 L944.0 379.3 L948.0 382.8 L952.0 386.4 L956.0 389.2 L960.0 390.7 M872.0 367.3 L876.0 366.6 L880.0 365.9 L884.0 365.5 L888.0 365.4 L892.0 365.9 L896.0 366.9 L900.0 368.1 L904.0 370.1 L908.0 373.1 L912.0 376.2 L916.0 379.0 L920.0 381.0 L924.0 381.9 L928.0 381.8 L932.0 380.9 L936.0 381.6 L940.0 383.9 L944.0 387.3 L948.0 391.1 L952.0 394.7 L956.0 397.4 L960.0 398.6 M872.0 371.4 L876.0 370.7 L880.0 370.3 L884.0 370.5 L888.0 371.4 L892.0 372.7 L896.0 374.3 L900.0 375.7 L904.0 377.5 L908.0 380.0 L912.0 382.7 L916.0 385.0 L920.0 386.8 L924.0 387.8 L928.0 388.2 L932.0 387.9 L936.0 389.3 L940.0 392.2 L944.0 395.9 L948.0 399.7 L952.0 403.1 L956.0 405.5 L960.0 406.5 M872.0 375.7 L876.0 375.3 L880.0 375.6 L884.0 376.6 L888.0 378.2 L892.0 380.1 L896.0 381.9 L900.0 383.1 L904.0 384.4 L908.0 386.4 L912.0 388.7 L916.0 391.0 L920.0 393.0 L924.0 394.6 L928.0 395.6 L932.0 396.0 L936.0 397.9 L940.0 400.9 L944.0 404.6 L948.0 408.2 L952.0 411.3 L956.0 413.4 L960.0 414.4 M872.0 380.8 L876.0 380.9 L880.0 381.9 L884.0 383.6 L888.0 385.6 L892.0 387.7 L896.0 389.3 L900.0 390.1 L904.0 390.9 L908.0 392.6 L912.0 394.9 L916.0 397.4 L920.0 400.0 L924.0 402.3 L928.0 403.9 L932.0 404.7 L936.0 406.7 L940.0 409.7 L944.0 413.1 L948.0 416.4 L952.0 419.2 L956.0 421.3 L960.0 422.4 M872.0 386.7 L876.0 387.3 L880.0 388.8 L884.0 390.8 L888.0 393.0 L892.0 394.9 L896.0 396.2 L900.0 396.6 L904.0 397.2 L908.0 398.9 L912.0 401.6 L916.0 404.7 L920.0 407.9 L924.0 410.8 L928.0 412.7 L932.0 413.6 L936.0 415.4 L940.0 418.1 L944.0 421.2 L948.0 424.3 L952.0 427.1 L956.0 429.2 L960.0 430.4 M872.0 393.3 L876.0 394.2 L880.0 395.9 L884.0 397.9 L888.0 399.9 L892.0 401.7 L896.0 402.8 L900.0 403.1 L904.0 403.8 L908.0 405.9 L912.0 409.0 L916.0 412.7 L920.0 416.4 L924.0 419.5 L928.0 421.4 L932.0 422.1 L936.0 423.7 L940.0 426.1 L944.0 429.1 L948.0 432.1 L952.0 434.9 L956.0 437.0 L960.0 438.0 M872.0 400.1 L876.0 401.0 L880.0 402.6 L884.0 404.5 L888.0 406.5 L892.0 408.2 L896.0 409.5 L900.0 410.0 L904.0 411.0 L908.0 413.5 L912.0 417.0 L916.0 421.0 L920.0 424.8 L924.0 427.9 L928.0 429.7 L932.0 430.2 L936.0 431.6 L940.0 433.9 L944.0 436.8 L948.0 439.7 L952.0 442.4 L956.0 444.3 L960.0 445.0" fill="none" stroke="#6cd4c6" stroke-opacity="0.50" stroke-width="0.60"/><path d="M874.0 324.9 L873.4 327.1 L872.8 329.7 L872.3 332.3 M880.9 324.1 L880.3 326.3 L879.8 328.7 L879.4 331.2 L879.0 333.7 L878.6 336.2 L878.3 338.7 L877.9 341.3 L877.6 343.8 L877.2 346.3 L876.9 348.8 L876.5 351.3 L876.0 353.7 L875.5 356.1 L874.9 358.4 L874.3 360.7 L873.5 362.9 L872.7 365.1 M887.8 323.1 L887.4 325.2 L886.9 327.7 L886.5 330.2 L886.2 332.8 L885.8 335.5 L885.5 338.2 L885.2 340.8 L884.8 343.5 L884.4 346.0 L884.0 348.5 L883.5 351.0 L883.0 353.3 L882.4 355.5 L881.8 357.7 L881.0 359.8 L880.2 361.9 L879.3 364.0 L878.3 366.2 L877.2 368.4 L876.0 370.7 L874.7 373.0 L873.4 375.5 M894.9 322.2 L894.5 324.4 L894.1 326.9 L893.7 329.5 L893.4 332.2 L893.1 334.9 L892.7 337.5 L892.4 340.1 L892.0 342.7 L891.5 345.1 L891.1 347.4 L890.5 349.7 L889.9 351.9 L889.2 354.0 L888.5 356.2 L887.6 358.5 L886.7 360.7 L885.7 363.1 L884.6 365.4 L883.4 367.9 L882.1 370.4 L880.8 372.9 L879.3 375.5 L877.8 378.2 L876.3 381.0 L874.7 383.8 L873.1 386.7 M902.0 322.1 L901.6 324.2 L901.3 326.6 L901.0 329.1 L900.6 331.6 L900.3 334.0 L899.9 336.4 L899.5 338.7 L899.1 341.0 L898.6 343.2 L898.0 345.4 L897.4 347.7 L896.7 350.0 L896.0 352.4 L895.1 354.9 L894.1 357.5 L893.1 360.2 L892.0 362.9 L890.8 365.7 L889.5 368.5 L888.1 371.4 L886.7 374.2 L885.2 377.0 L883.6 379.9 L882.0 382.6 L880.4 385.4 L878.7 388.3 L877.0 391.1 L875.4 394.0 L873.7 397.0 L872.1 400.1 M909.2 323.8 L908.9 325.7 L908.5 327.8 L908.2 330.0 L907.8 332.2 L907.5 334.3 L907.1 336.3 L906.6 338.4 L906.1 340.4 L905.6 342.6 L904.9 344.8 L904.2 347.1 L903.4 349.5 L902.5 352.1 L901.6 354.8 L900.5 357.7 L899.4 360.8 L898.1 364.0 L896.8 367.1 L895.4 370.3 L894.0 373.5 L892.5 376.6 L890.9 379.6 L889.3 382.6 L887.7 385.4 L886.0 388.2 L884.3 391.0 L882.7 393.7 L881.0 396.4 L879.4 399.0 L877.8 401.7 M916.4 326.6 L916.1 328.3 L915.8 330.2 L915.4 332.3 L915.0 334.3 L914.6 336.4 L914.2 338.6 L913.6 340.8 L913.1 343.1 L912.4 345.4 L911.7 347.9 L910.9 350.4 L910.0 353.0 L909.0 355.6 L907.9 358.3 L906.8 360.9 L905.5 363.7 L904.2 366.4 L902.8 369.3 L901.3 372.4 L899.8 375.6 L898.2 378.9 L896.6 382.1 L894.9 385.3 L893.3 388.3 L891.6 391.2 L890.0 394.0 L888.3 396.7 L886.7 399.3 L885.1 401.8 L883.6 404.3 M923.7 329.1 L923.3 330.7 L923.0 332.7 L922.6 334.9 L922.2 337.2 L921.7 339.6 L921.2 342.1 L920.6 344.8 L919.9 347.5 L919.2 350.3 L918.3 353.1 L917.4 355.9 L916.4 358.7 L915.3 361.3 L914.1 363.9 L912.9 366.4 L911.5 368.8 L910.1 371.2 L908.6 373.6 L907.1 375.9 L905.5 378.4 L903.9 381.0 L902.2 383.7 L900.6 386.7 L898.9 390.0 L897.3 393.1 L895.6 396.1 L894.0 399.1 L892.5 401.9 L890.9 404.6 L889.5 407.2 M930.9 330.0 L930.5 331.8 L930.1 334.0 L929.7 336.6 L929.2 339.3 L928.7 342.2 L928.1 345.2 L927.4 348.3 L926.6 351.5 L925.8 354.6 L924.9 357.6 L923.8 360.6 L922.7 363.5 L921.5 366.2 L920.2 368.8 L918.9 371.3 L917.5 373.6 L916.0 375.9 L914.4 378.0 L912.8 380.1 L911.2 382.1 L909.5 384.2 L907.9 386.4 L906.2 388.6 L904.6 391.1 L902.9 393.7 L901.3 396.6 L899.8 399.8 L898.3 403.1 L896.8 406.3 L895.5 409.4 M938.1 332.7 L937.7 334.4 L937.2 336.7 L936.8 339.2 L936.2 341.8 L935.6 344.5 L934.9 347.3 L934.1 350.1 L933.2 353.0 L932.3 355.9 L931.2 358.8 L930.1 361.9 L928.9 365.0 L927.6 368.0 L926.2 370.9 L924.8 373.6 L923.3 376.2 L921.7 378.7 L920.1 381.0 L918.5 383.3 L916.8 385.4 L915.2 387.5 L913.5 389.6 L911.8 391.7 L910.2 393.8 L908.6 396.1 L907.1 398.5 L905.6 401.0 L904.2 403.8 L902.8 406.9 L901.6 410.2 M945.2 337.7 L944.8 339.5 L944.3 341.7 L943.7 344.0 L943.1 346.3 L942.4 348.7 L941.6 350.9 L940.7 353.2 L939.7 355.3 L938.7 357.5 L937.5 359.7 L936.3 362.0 L935.0 364.4 L933.6 366.9 L932.1 369.6 L930.6 372.7 L929.0 375.9 L927.4 379.0 L925.8 382.0 L924.1 384.8 L922.5 387.5 L920.8 390.1 L919.1 392.6 L917.5 395.0 L916.0 397.4 L914.4 399.8 L913.0 402.3 L911.5 404.8 L910.2 407.5 L909.0 410.4 L907.8 413.4 M952.3 342.6 L951.8 344.3 L951.2 346.4 L950.6 348.5 L949.8 350.5 L949.0 352.5 L948.1 354.4 L947.1 356.2 L946.1 358.1 L944.9 359.8 L943.6 361.7 L942.3 363.5 L940.9 365.4 L939.4 367.5 L937.9 369.7 L936.3 372.1 L934.7 374.8 L933.1 377.7 L931.4 381.0 L929.7 384.6 L928.1 388.2 L926.4 391.6 L924.8 394.9 L923.3 398.0 L921.7 401.1 L920.3 404.1 L918.9 407.0 L917.6 410.0 L916.4 413.0 L915.2 416.1 L914.1 419.1 M959.3 345.0 L958.7 346.7 L958.1 348.7 L957.3 350.8 L956.5 352.8 L955.6 354.7 L954.6 356.7 L953.5 358.6 L952.3 360.5 L951.0 362.4 L949.7 364.3 L948.2 366.2 L946.8 368.1 L945.2 370.1 L943.6 372.2 L942.0 374.4 L940.4 376.7 L938.7 379.3 L937.0 382.0 L935.4 385.0 L933.7 388.3 L932.1 391.9 L930.6 395.8 L929.1 399.9 L927.6 403.8 L926.3 407.6 L925.0 411.4 L923.7 415.0 L922.6 418.5 L921.6 422.0 L920.6 425.4 M962.0 354.7 L960.9 357.1 L959.7 359.5 L958.4 362.0 L957.0 364.5 L955.6 366.9 L954.1 369.3 L952.5 371.7 L950.9 374.0 L949.3 376.3 L947.7 378.6 L946.0 381.0 L944.3 383.5 L942.7 386.0 L941.0 388.8 L939.5 391.7 L937.9 394.8 L936.4 398.1 L935.0 401.7 L933.6 405.4 L932.3 409.3 L931.1 413.4 L930.0 417.5 L929.0 421.7 L928.1 425.7 L927.2 429.5 M961.4 368.4 L959.8 371.5 L958.2 374.7 L956.6 377.6 L955.0 380.5 L953.3 383.3 L951.6 386.0 L950.0 388.7 L948.4 391.5 L946.8 394.2 L945.2 397.1 L943.7 400.0 L942.3 403.0 L941.0 406.2 L939.7 409.5 L938.5 412.8 L937.4 416.3 L936.4 419.8 L935.5 423.4 L934.7 427.1 L933.9 430.7 M960.6 383.0 L958.9 386.5 L957.3 389.9 L955.7 393.1 L954.1 396.3 L952.6 399.4 L951.1 402.4 L949.7 405.4 L948.4 408.5 L947.1 411.6 L945.9 414.7 L944.9 417.9 L943.9 421.1 L943.0 424.4 L942.2 427.7 L941.4 431.0 L940.8 434.4 M961.4 394.9 L959.9 398.6 L958.4 402.3 L957.0 405.9 L955.7 409.3 L954.5 412.7 L953.3 416.1 L952.3 419.4 L951.3 422.7 L950.4 426.1 L949.6 429.4 L948.9 432.8 L948.3 436.1 L947.7 439.5 M961.9 410.6 L960.8 414.4 L959.7 418.3 L958.8 422.2 L957.9 425.9 L957.1 429.7 L956.4 433.3 L955.8 436.9 L955.3 440.4 L954.8 443.8" fill="none" stroke="#6cd4c6" stroke-opacity="0.31" stroke-width="0.54"/>
</g>
<g fill="#fff">
<rect x="657" y="162.8" width="41" height="3.3"/><rect x="786" y="162.8" width="151.5" height="3.3"/><rect x="1029" y="162.8" width="173.5" height="3.3"/>
<rect x="657" y="162.8" width="3.8" height="264"/><rect x="1198.7" y="162.8" width="3.8" height="264"/>
<rect x="657" y="423" width="84.5" height="3.3"/><rect x="854" y="423" width="24" height="3.3"/><rect x="920" y="423" width="152.5" height="3.3"/><rect x="1116" y="423" width="86.5" height="3.3"/>
</g>
<rect x="697.8" y="138" width="88.8" height="88.3" fill="#981b27"/>
<path d="M729.2 203.5H713.3V159H771.3V203.5H743V188" fill="none" stroke="#fff" stroke-width="6.2" stroke-linecap="round" stroke-linejoin="round"/>
<circle cx="742.8" cy="182" r="10.3" fill="#fff"/>
<g clip-path="url(#pc)">
<g fill="#bff" fill-opacity=".5" filter="url(#b1)"><circle cx="785.3" cy="371.1" r="1.5"/><circle cx="755.2" cy="380.2" r="1.9"/><circle cx="699.0" cy="356.5" r="0.8"/><circle cx="745.9" cy="349.6" r="0.6"/><circle cx="825.2" cy="353.3" r="1.0"/><circle cx="806.9" cy="362.0" r="0.8"/><circle cx="800.2" cy="338.3" r="1.0"/><circle cx="807.6" cy="349.6" r="1.0"/><circle cx="759.9" cy="347.2" r="0.8"/><circle cx="726.3" cy="343.9" r="1.5"/><circle cx="788.8" cy="345.4" r="0.8"/><circle cx="764.4" cy="343.1" r="1.9"/><circle cx="790.7" cy="342.3" r="1.2"/><circle cx="761.4" cy="333.9" r="0.8"/><circle cx="767.8" cy="354.1" r="1.9"/><circle cx="769.4" cy="344.3" r="0.8"/><circle cx="782.6" cy="390.7" r="1.5"/><circle cx="766.3" cy="322.9" r="1.2"/><circle cx="774.9" cy="349.6" r="1.2"/><circle cx="716.8" cy="354.4" r="0.8"/><circle cx="757.1" cy="357.6" r="1.2"/><circle cx="744.1" cy="358.2" r="1.0"/><circle cx="742.3" cy="349.9" r="1.0"/><circle cx="760.4" cy="352.4" r="0.6"/><circle cx="787.3" cy="371.3" r="1.0"/><circle cx="774.9" cy="350.1" r="1.2"/><circle cx="764.8" cy="338.7" r="1.2"/><circle cx="734.6" cy="390.7" r="0.6"/><circle cx="771.7" cy="358.9" r="0.8"/><circle cx="776.7" cy="337.6" r="1.9"/><circle cx="746.8" cy="342.1" r="0.6"/><circle cx="793.8" cy="381.6" r="0.8"/><circle cx="769.3" cy="334.7" r="1.5"/><circle cx="795.7" cy="354.4" r="1.5"/><circle cx="790.7" cy="345.8" r="0.8"/><circle cx="798.7" cy="344.9" r="0.8"/><circle cx="739.8" cy="350.9" r="0.8"/><circle cx="783.0" cy="345.3" r="1.2"/><circle cx="807.6" cy="362.2" r="1.9"/><circle cx="764.5" cy="344.5" r="0.8"/><circle cx="865.2" cy="342.5" r="0.8"/><circle cx="865.3" cy="341.6" r="1.0"/><circle cx="866.5" cy="343.8" r="0.8"/><circle cx="878.0" cy="338.3" r="1.0"/><circle cx="862.3" cy="341.7" r="1.5"/><circle cx="832.7" cy="337.4" r="0.6"/><circle cx="883.7" cy="333.7" r="0.8"/><circle cx="863.1" cy="320.2" r="1.2"/><circle cx="857.3" cy="328.6" r="1.9"/><circle cx="847.4" cy="340.8" r="1.2"/><circle cx="851.1" cy="356.9" r="0.6"/><circle cx="849.6" cy="343.5" r="1.5"/><circle cx="873.6" cy="342.0" r="1.5"/><circle cx="855.1" cy="365.0" r="1.0"/><circle cx="854.4" cy="350.2" r="1.9"/><circle cx="861.2" cy="337.0" r="0.6"/><circle cx="694.9" cy="411.1" r="1.5"/><circle cx="694.8" cy="409.4" r="1.9"/><circle cx="706.0" cy="412.4" r="0.8"/><circle cx="691.4" cy="406.3" r="1.0"/><circle cx="710.6" cy="400.8" r="0.8"/><circle cx="703.9" cy="415.1" r="1.5"/><circle cx="699.4" cy="394.6" r="1.2"/><circle cx="695.0" cy="392.2" r="1.9"/><circle cx="721.6" cy="414.4" r="1.0"/><circle cx="696.5" cy="408.7" r="1.9"/><circle cx="682.1" cy="401.6" r="0.8"/><circle cx="699.7" cy="420.4" r="0.8"/><circle cx="699.8" cy="402.0" r="0.8"/><circle cx="692.2" cy="424.0" r="0.8"/><circle cx="644.5" cy="327.1" r="1.0"/><circle cx="642.6" cy="357.1" r="1.2"/><circle cx="647.5" cy="369.9" r="0.8"/><circle cx="1033.4" cy="333.6" r="1.5"/><circle cx="1013.1" cy="325.5" r="0.8"/><circle cx="1041.9" cy="340.7" r="0.8"/><circle cx="1019.6" cy="340.5" r="1.0"/><circle cx="1028.1" cy="337.0" r="0.6"/><circle cx="1102.0" cy="364.6" r="1.0"/><circle cx="1076.7" cy="374.4" r="1.5"/><circle cx="1115.4" cy="368.2" r="1.2"/><circle cx="1085.2" cy="373.7" r="0.6"/><circle cx="1131.1" cy="377.5" r="1.0"/><circle cx="1147.1" cy="376.7" r="1.2"/><circle cx="1144.5" cy="363.3" r="1.0"/><circle cx="1136.5" cy="367.3" r="0.8"/><circle cx="1099.0" cy="375.9" r="1.5"/><circle cx="915.7" cy="419.7" r="1.0"/><circle cx="884.8" cy="422.8" r="0.8"/><circle cx="904.1" cy="404.0" r="1.9"/><circle cx="881.0" cy="406.2" r="1.2"/><circle cx="892.4" cy="403.5" r="0.8"/><circle cx="881.3" cy="416.1" r="0.8"/><circle cx="877.6" cy="405.1" r="1.5"/><circle cx="901.8" cy="414.9" r="0.8"/><circle cx="909.7" cy="430.6" r="1.5"/><circle cx="912.4" cy="423.0" r="0.6"/><circle cx="944.9" cy="418.1" r="1.0"/><circle cx="997.9" cy="408.9" r="0.6"/><circle cx="1024.1" cy="419.7" r="1.0"/><circle cx="1009.9" cy="428.7" r="1.5"/><circle cx="977.5" cy="416.8" r="0.6"/><circle cx="1033.6" cy="417.3" r="0.8"/><circle cx="1098.4" cy="411.1" r="1.5"/><circle cx="970.5" cy="419.7" r="1.5"/><circle cx="689.2" cy="432.9" r="1.0"/><circle cx="684.8" cy="430.7" r="1.2"/></g><g fill="#fff" fill-opacity=".95"><circle cx="785.3" cy="371.1" r="1.5"/><circle cx="755.2" cy="380.2" r="1.9"/><circle cx="699.0" cy="356.5" r="0.8"/><circle cx="745.9" cy="349.6" r="0.6"/><circle cx="825.2" cy="353.3" r="1.0"/><circle cx="806.9" cy="362.0" r="0.8"/><circle cx="800.2" cy="338.3" r="1.0"/><circle cx="807.6" cy="349.6" r="1.0"/><circle cx="759.9" cy="347.2" r="0.8"/><circle cx="726.3" cy="343.9" r="1.5"/><circle cx="788.8" cy="345.4" r="0.8"/><circle cx="764.4" cy="343.1" r="1.9"/><circle cx="790.7" cy="342.3" r="1.2"/><circle cx="761.4" cy="333.9" r="0.8"/><circle cx="767.8" cy="354.1" r="1.9"/><circle cx="769.4" cy="344.3" r="0.8"/><circle cx="782.6" cy="390.7" r="1.5"/><circle cx="766.3" cy="322.9" r="1.2"/><circle cx="774.9" cy="349.6" r="1.2"/><circle cx="716.8" cy="354.4" r="0.8"/><circle cx="757.1" cy="357.6" r="1.2"/><circle cx="744.1" cy="358.2" r="1.0"/><circle cx="742.3" cy="349.9" r="1.0"/><circle cx="760.4" cy="352.4" r="0.6"/><circle cx="787.3" cy="371.3" r="1.0"/><circle cx="774.9" cy="350.1" r="1.2"/><circle cx="764.8" cy="338.7" r="1.2"/><circle cx="734.6" cy="390.7" r="0.6"/><circle cx="771.7" cy="358.9" r="0.8"/><circle cx="776.7" cy="337.6" r="1.9"/><circle cx="746.8" cy="342.1" r="0.6"/><circle cx="793.8" cy="381.6" r="0.8"/><circle cx="769.3" cy="334.7" r="1.5"/><circle cx="795.7" cy="354.4" r="1.5"/><circle cx="790.7" cy="345.8" r="0.8"/><circle cx="798.7" cy="344.9" r="0.8"/><circle cx="739.8" cy="350.9" r="0.8"/><circle cx="783.0" cy="345.3" r="1.2"/><circle cx="807.6" cy="362.2" r="1.9"/><circle cx="764.5" cy="344.5" r="0.8"/><circle cx="865.2" cy="342.5" r="0.8"/><circle cx="865.3" cy="341.6" r="1.0"/><circle cx="866.5" cy="343.8" r="0.8"/><circle cx="878.0" cy="338.3" r="1.0"/><circle cx="862.3" cy="341.7" r="1.5"/><circle cx="832.7" cy="337.4" r="0.6"/><circle cx="883.7" cy="333.7" r="0.8"/><circle cx="863.1" cy="320.2" r="1.2"/><circle cx="857.3" cy="328.6" r="1.9"/><circle cx="847.4" cy="340.8" r="1.2"/><circle cx="851.1" cy="356.9" r="0.6"/><circle cx="849.6" cy="343.5" r="1.5"/><circle cx="873.6" cy="342.0" r="1.5"/><circle cx="855.1" cy="365.0" r="1.0"/><circle cx="854.4" cy="350.2" r="1.9"/><circle cx="861.2" cy="337.0" r="0.6"/><circle cx="694.9" cy="411.1" r="1.5"/><circle cx="694.8" cy="409.4" r="1.9"/><circle cx="706.0" cy="412.4" r="0.8"/><circle cx="691.4" cy="406.3" r="1.0"/><circle cx="710.6" cy="400.8" r="0.8"/><circle cx="703.9" cy="415.1" r="1.5"/><circle cx="699.4" cy="394.6" r="1.2"/><circle cx="695.0" cy="392.2" r="1.9"/><circle cx="721.6" cy="414.4" r="1.0"/><circle cx="696.5" cy="408.7" r="1.9"/><circle cx="682.1" cy="401.6" r="0.8"/><circle cx="699.7" cy="420.4" r="0.8"/><circle cx="699.8" cy="402.0" r="0.8"/><circle cx="692.2" cy="424.0" r="0.8"/><circle cx="644.5" cy="327.1" r="1.0"/><circle cx="642.6" cy="357.1" r="1.2"/><circle cx="647.5" cy="369.9" r="0.8"/><circle cx="1033.4" cy="333.6" r="1.5"/><circle cx="1013.1" cy="325.5" r="0.8"/><circle cx="1041.9" cy="340.7" r="0.8"/><circle cx="1019.6" cy="340.5" r="1.0"/><circle cx="1028.1" cy="337.0" r="0.6"/><circle cx="1102.0" cy="364.6" r="1.0"/><circle cx="1076.7" cy="374.4" r="1.5"/><circle cx="1115.4" cy="368.2" r="1.2"/><circle cx="1085.2" cy="373.7" r="0.6"/><circle cx="1131.1" cy="377.5" r="1.0"/><circle cx="1147.1" cy="376.7" r="1.2"/><circle cx="1144.5" cy="363.3" r="1.0"/><circle cx="1136.5" cy="367.3" r="0.8"/><circle cx="1099.0" cy="375.9" r="1.5"/><circle cx="915.7" cy="419.7" r="1.0"/><circle cx="884.8" cy="422.8" r="0.8"/><circle cx="904.1" cy="404.0" r="1.9"/><circle cx="881.0" cy="406.2" r="1.2"/><circle cx="892.4" cy="403.5" r="0.8"/><circle cx="881.3" cy="416.1" r="0.8"/><circle cx="877.6" cy="405.1" r="1.5"/><circle cx="901.8" cy="414.9" r="0.8"/><circle cx="909.7" cy="430.6" r="1.5"/><circle cx="912.4" cy="423.0" r="0.6"/><circle cx="944.9" cy="418.1" r="1.0"/><circle cx="997.9" cy="408.9" r="0.6"/><circle cx="1024.1" cy="419.7" r="1.0"/><circle cx="1009.9" cy="428.7" r="1.5"/><circle cx="977.5" cy="416.8" r="0.6"/><circle cx="1033.6" cy="417.3" r="0.8"/><circle cx="1098.4" cy="411.1" r="1.5"/><circle cx="970.5" cy="419.7" r="1.5"/><circle cx="689.2" cy="432.9" r="1.0"/><circle cx="684.8" cy="430.7" r="1.2"/></g>
</g>
</svg>
<span class="t" style="left:15.90px;top:464.20px;font-size:15.00px;transform:scaleX(0.9441);color:#555;">Detailed scores</span>
<div class="card" style="left:15.5px;top:494px;width:1218.5px;height:331.5px"></div>
<div class="box" style="left:208.2px;top:508.5px;width:178.4px;height:36px"></div>
<span class="t" style="left:30.50px;top:519.70px;font-size:15.00px;transform:scaleX(0.8828);color:#222;font-weight:700;">Image Retouching score</span>
<span class="t" style="left:223.40px;top:518.36px;font-size:15.40px;transform:scaleX(0.9171);color:#3a3a3a;font-weight:700;">12 288</span>
<div class="box" style="left:208.2px;top:552.2px;width:178.4px;height:32.6px"></div>
<span class="t" style="left:30.50px;top:561.25px;font-size:14.00px;transform:scaleX(0.8856);color:#2a2a2a;">Load image</span>
<span class="t" style="left:223.40px;top:561.80px;font-size:13.00px;transform:scaleX(0.9591);color:#3a3a3a;font-weight:700;">0.215 s</span>
<div class="box" style="left:208.2px;top:592.2px;width:178.4px;height:32.6px"></div>
<span class="t" style="left:30.50px;top:601.82px;font-size:13.33px;transform:scaleX(0.8700);color:#2a2a2a;">Save as</span>
<span class="t" style="left:223.40px;top:601.80px;font-size:13.00px;transform:scaleX(0.9643);color:#3a3a3a;font-weight:700;">42.030 s</span>
<div class="box" style="left:625.0px;top:552.2px;width:178.4px;height:32.6px"></div>
<span class="t" style="left:446.50px;top:561.25px;font-size:14.00px;transform:scaleX(0.9574);color:#2a2a2a;">Adjust filters</span>
<span class="t" style="left:639.40px;top:561.80px;font-size:13.00px;transform:scaleX(0.9637);color:#3a3a3a;font-weight:700;">0.613 s</span>
<div class="box" style="left:625.0px;top:592.2px;width:178.4px;height:32.6px"></div>
<span class="t" style="left:446.50px;top:601.25px;font-size:14.00px;transform:scaleX(0.9177);color:#2a2a2a;">Export image</span>
<span class="t" style="left:639.40px;top:601.80px;font-size:13.00px;transform:scaleX(0.9637);color:#3a3a3a;font-weight:700;">2.571 s</span>
<div class="box" style="left:1041.2px;top:552.2px;width:178.4px;height:32.6px"></div>
<span class="t" style="left:862.60px;top:561.25px;font-size:14.00px;transform:scaleX(0.9184);color:#2a2a2a;">Flatten image</span>
<span class="t" style="left:1055.80px;top:561.80px;font-size:13.00px;transform:scaleX(0.9591);color:#3a3a3a;font-weight:700;">0.407 s</span>
<div class="box" style="left:1041.2px;top:592.2px;width:178.4px;height:32.6px"></div>
<span class="t" style="left:862.60px;top:601.25px;font-size:14.00px;transform:scaleX(0.9432);color:#2a2a2a;">Adjust GPU filters</span>
<span class="t" style="left:1055.80px;top:601.80px;font-size:13.00px;transform:scaleX(0.9591);color:#3a3a3a;font-weight:700;">5.268 s</span>
<div class="box" style="left:208.2px;top:647.0px;width:178.4px;height:36px"></div>
<span class="t" style="left:30.50px;top:658.22px;font-size:14.98px;transform:scaleX(0.8700);color:#222;font-weight:700;">Batch Processing score</span>
<span class="t" style="left:223.40px;top:656.86px;font-size:15.40px;transform:scaleX(0.9627);color:#3a3a3a;font-weight:700;">9 506</span>
<div class="box" style="left:208.2px;top:691.2px;width:178.4px;height:32.6px"></div>
<span class="t" style="left:30.50px;top:700.25px;font-size:14.00px;transform:scaleX(0.9829);color:#2a2a2a;">Import</span>
<span class="t" style="left:223.40px;top:700.80px;font-size:13.00px;transform:scaleX(0.9591);color:#3a3a3a;font-weight:700;">2.800 s</span>
<div class="box" style="left:208.2px;top:731.2px;width:178.4px;height:32.6px"></div>
<span class="t" style="left:30.50px;top:740.25px;font-size:14.00px;transform:scaleX(0.8996);color:#2a2a2a;">Edit images</span>
<span class="t" style="left:223.40px;top:740.80px;font-size:13.00px;transform:scaleX(0.9591);color:#3a3a3a;font-weight:700;">1.445 s</span>
<div class="box" style="left:208.2px;top:771.2px;width:178.4px;height:32.6px"></div>
<span class="t" style="left:30.50px;top:780.25px;font-size:14.00px;transform:scaleX(0.9003);color:#2a2a2a;">Enhance details</span>
<span class="t" style="left:223.40px;top:780.80px;font-size:13.00px;transform:scaleX(0.9591);color:#3a3a3a;font-weight:700;">4.776 s</span>
<div class="box" style="left:625.0px;top:691.2px;width:178.4px;height:32.6px"></div>
<span class="t" style="left:446.50px;top:700.25px;font-size:14.00px;transform:scaleX(0.9137);color:#2a2a2a;">Preview</span>
<span class="t" style="left:639.40px;top:700.80px;font-size:13.00px;transform:scaleX(0.9637);color:#3a3a3a;font-weight:700;">0.620 s</span>
<div class="box" style="left:625.0px;top:731.2px;width:178.4px;height:32.6px"></div>
<span class="t" style="left:446.50px;top:740.25px;font-size:14.00px;transform:scaleX(0.9277);color:#2a2a2a;">Smart preview</span>
<span class="t" style="left:639.40px;top:740.80px;font-size:13.00px;transform:scaleX(0.9637);color:#3a3a3a;font-weight:700;">3.316 s</span>
<div class="box" style="left:1041.2px;top:691.2px;width:178.4px;height:32.6px"></div>
<span class="t" style="left:862.60px;top:700.25px;font-size:14.00px;transform:scaleX(0.9278);color:#2a2a2a;">Apply presets</span>
<span class="t" style="left:1055.80px;top:700.80px;font-size:13.00px;transform:scaleX(0.9499);color:#3a3a3a;font-weight:700;">0.423 s</span>
<div class="box" style="left:1041.2px;top:731.2px;width:178.4px;height:32.6px"></div>
<span class="t" style="left:862.60px;top:740.25px;font-size:14.00px;transform:scaleX(0.9441);color:#2a2a2a;">Export</span>
<span class="t" style="left:1055.80px;top:740.80px;font-size:13.00px;transform:scaleX(0.9499);color:#3a3a3a;font-weight:700;">4.843 s</span>
<div class="box" style="left:1041.2px;top:771.2px;width:178.4px;height:32.6px"></div>
<span class="t" style="left:862.60px;top:780.25px;font-size:14.00px;transform:scaleX(0.9022);color:#2a2a2a;">Face detect</span>
<span class="t" style="left:1055.80px;top:780.80px;font-size:13.00px;transform:scaleX(0.9643);color:#3a3a3a;font-weight:700;">14.047 s</span>
<div class="card" style="left:15.5px;top:833px;width:1218.5px;height:340px"></div>
<div class="card" style="left:15.5px;top:1180.5px;width:1218.5px;height:40px"></div>
<span class="t" style="left:30.70px;top:850.60px;font-size:15.00px;letter-spacing:0.085px;color:#2a2a2a;">Monitoring</span>
<span class="t" style="left:1116.60px;top:854.09px;font-size:12.30px;transform:scaleX(0.9234);color:#555;">Show details</span>
<div class="abs" style="left:1194px;top:855px;width:25px;height:13.5px;border-radius:7px;background:#e4e4e4"></div>
<div class="abs" style="left:1188.5px;top:853.8px;width:15.4px;height:15.4px;border-radius:50%;background:#fff;box-shadow:0 1px 3px rgba(0,0,0,.4)"></div>
<svg class="abs" style="left:0;top:870px" width="1240" height="240" viewBox="0 870 1240 240" font-family="Liberation Sans,sans-serif">
<path d="M86.4 1044.10H1187.3" stroke="#cfcfcf" stroke-width="1" fill="none"/>
<path d="M86.4 1025.32H1187.3" stroke="#ececec" stroke-width="1" fill="none"/>
<path d="M86.4 1006.55H1187.3" stroke="#ececec" stroke-width="1" fill="none"/>
<path d="M86.4 987.77H1187.3" stroke="#ececec" stroke-width="1" fill="none"/>
<path d="M86.4 969.00H1187.3" stroke="#ececec" stroke-width="1" fill="none"/>
<path d="M86.4 950.22H1187.3" stroke="#ececec" stroke-width="1" fill="none"/>
<path d="M86.4 931.45H1187.3" stroke="#ececec" stroke-width="1" fill="none"/>
<path d="M86.4 912.67H1187.3" stroke="#ececec" stroke-width="1" fill="none"/>
<path d="M86.4 893.90H1187.3" stroke="#ececec" stroke-width="1" fill="none"/>
<path d="M80.8 1025.32H86.4" stroke="#bbb" stroke-width="1"/>
<text x="77" y="1028.92" text-anchor="end" font-size="10" fill="#555" textLength="20.3" lengthAdjust="spacingAndGlyphs">1000</text>
<path d="M80.8 987.77H86.4" stroke="#bbb" stroke-width="1"/>
<text x="77" y="991.37" text-anchor="end" font-size="10" fill="#555" textLength="20.3" lengthAdjust="spacingAndGlyphs">3000</text>
<path d="M80.8 950.22H86.4" stroke="#bbb" stroke-width="1"/>
<text x="77" y="953.82" text-anchor="end" font-size="10" fill="#555" textLength="20.3" lengthAdjust="spacingAndGlyphs">5000</text>
<path d="M80.8 912.67H86.4" stroke="#bbb" stroke-width="1"/>
<text x="77" y="916.27" text-anchor="end" font-size="10" fill="#555" textLength="20.3" lengthAdjust="spacingAndGlyphs">7000</text>
<path d="M80.8 880.6H86.4" stroke="#bbb" stroke-width="1"/>
<path d="M208.75 1044V1049.6" stroke="#999" stroke-width="1"/>
<text x="208.75" y="1059.6" text-anchor="middle" font-size="10.4" fill="#555" textLength="24.2" lengthAdjust="spacingAndGlyphs">01:40</text>
<path d="M453.45 1044V1049.6" stroke="#999" stroke-width="1"/>
<text x="453.45" y="1059.6" text-anchor="middle" font-size="10.4" fill="#555" textLength="24.2" lengthAdjust="spacingAndGlyphs">05:00</text>
<path d="M698.15 1044V1049.6" stroke="#999" stroke-width="1"/>
<text x="698.15" y="1059.6" text-anchor="middle" font-size="10.4" fill="#555" textLength="24.2" lengthAdjust="spacingAndGlyphs">08:20</text>
<path d="M942.85 1044V1049.6" stroke="#999" stroke-width="1"/>
<text x="942.85" y="1059.6" text-anchor="middle" font-size="10.4" fill="#555" textLength="24.2" lengthAdjust="spacingAndGlyphs">11:40</text>
<path d="M1187.55 1044V1049.6" stroke="#999" stroke-width="1"/>
<text x="1187.55" y="1059.6" text-anchor="middle" font-size="10.4" fill="#555" textLength="24.2" lengthAdjust="spacingAndGlyphs">15:00</text>
<path d="M86.40 1044V1049.6" stroke="#bbb" stroke-width="1"/>
<path d="M86.5 880.5V1044.3" stroke="#444" stroke-width="1" stroke-dasharray="2.2 1.4" fill="none"/>
<path d="M372.5 880.5V1044.3" stroke="#444" stroke-width="1" stroke-dasharray="2.2 1.4" fill="none"/>
<text transform="translate(96.8 1036) rotate(-90)" font-size="9.2" fill="#444" textLength="70.3" lengthAdjust="spacingAndGlyphs">Image Retouching</text>
<text transform="translate(382.1 1036.2) rotate(-90)" font-size="9.2" fill="#444" textLength="66.2" lengthAdjust="spacingAndGlyphs">Batch Processing</text>
<text transform="translate(52.3 1024.7) rotate(-90)" font-size="10.6" fill="#555" textLength="126" lengthAdjust="spacingAndGlyphs">CPU Clock Frequency (MHz)</text>
<path d="M87.0 937.1 L88.1 937.0 L89.2 937.3 L90.3 936.9 L91.4 937.2 L92.5 937.1 L93.7 937.2 L95.2 966.5 L96.7 937.2 L98.0 936.9 L98.5 937.2 L99.7 958.9 L100.9 937.2 L101.3 937.4 L102.4 936.9 L103.5 937.0 L104.6 937.3 L105.7 937.5 L106.8 937.3 L107.9 937.1 L109.0 937.5 L110.1 936.9 L111.2 937.5 L112.3 937.1 L113.4 937.0 L114.5 936.9 L115.6 937.1 L116.7 937.4 L117.8 937.0 L118.9 937.3 L120.0 937.3 L121.1 937.1 L122.2 937.2 L123.3 936.9 L124.4 936.9 L125.5 937.0 L126.6 937.3 L127.7 937.1 L128.8 937.1 L129.9 937.3 L131.0 937.2 L132.1 937.1 L133.2 937.4 L134.3 937.3 L135.4 937.0 L136.5 937.3 L137.6 937.2 L138.7 937.5 L139.8 937.4 L140.9 937.1 L142.0 937.5 L143.1 936.9 L144.2 937.1 L145.3 937.4 L146.4 937.0 L147.7 937.2 L149.3 946.2 L150.9 937.2 L151.9 937.3 L153.0 937.5 L154.1 937.1 L155.2 937.3 L156.3 937.3 L157.4 937.3 L158.5 937.2 L159.6 937.4 L160.7 937.5 L161.8 937.2 L162.9 937.3 L164.0 936.9 L165.1 937.3 L166.2 937.3 L167.3 937.5 L168.4 937.4 L169.5 937.0 L170.6 937.1 L171.7 937.3 L172.8 936.9 L173.9 937.2 L175.0 937.0 L176.1 936.9 L177.2 936.9 L178.3 937.4 L179.4 936.9 L180.5 937.0 L181.6 937.1 L182.7 937.5 L183.8 936.9 L184.9 937.2 L186.0 937.2 L186.8 937.2 L187.8 894.4 L188.8 937.2 L189.3 937.5 L190.4 937.0 L191.5 937.1 L192.6 937.1 L193.7 937.5 L194.8 937.5 L195.9 937.0 L197.0 937.0 L198.1 937.0 L199.2 937.0 L200.3 937.2 L201.4 937.3 L202.5 937.0 L203.6 936.9 L204.7 937.1 L205.8 937.1 L206.9 937.2 L208.0 937.5 L209.1 937.3 L210.2 937.2 L211.3 937.3 L212.4 937.3 L213.5 936.9 L214.6 937.5 L215.7 938.8 L216.8 938.5 L217.9 938.4 L219.0 938.3 L220.1 938.4 L221.2 938.5 L222.3 938.3 L223.4 938.4 L224.5 938.3 L225.6 938.7 L226.7 938.5 L227.8 938.5 L228.9 938.8 L230.0 938.6 L231.1 938.4 L232.2 938.5 L233.3 938.8 L234.4 938.3 L235.5 938.6 L236.6 938.6 L237.7 938.6 L238.8 938.8 L239.9 938.5 L241.0 938.4 L242.1 938.6 L243.2 938.5 L244.3 938.8 L245.4 938.8 L246.5 938.8 L247.6 938.4 L248.7 938.5 L249.8 938.3 L250.9 937.0 L252.0 937.0 L253.1 937.3 L254.2 937.5 L255.3 937.2 L256.4 937.5 L257.5 937.5 L258.6 937.5 L259.7 937.1 L260.8 937.0 L261.9 937.0 L263.0 937.0 L264.1 937.0 L265.2 937.3 L266.3 937.5 L267.4 937.4 L268.5 937.2 L269.6 937.3 L270.7 937.4 L271.8 936.9 L272.9 937.3 L274.0 937.5 L275.1 937.4 L276.2 937.4 L277.3 937.2 L278.4 937.0 L279.1 937.2 L280.6 941.5 L282.1 937.2 L282.8 937.5 L283.9 937.1 L285.0 937.1 L286.1 937.5 L286.5 937.2 L287.7 943.0 L288.9 937.2 L289.4 936.9 L290.5 937.0 L291.6 937.5 L292.7 937.4 L293.0 937.2 L294.3 951.3 L295.6 937.2 L296.0 937.5 L297.1 937.3 L298.2 937.1 L299.3 937.2 L300.4 936.9 L301.5 936.9 L302.6 937.5 L303.7 937.3 L304.8 937.2 L305.9 937.5 L307.0 937.2 L308.1 937.5 L309.2 937.4 L310.3 937.0 L311.4 937.0 L312.5 937.1 L313.6 937.0 L314.7 937.3 L315.8 937.0 L316.9 937.1 L318.0 936.9 L319.1 937.5 L320.2 937.1 L321.3 937.2 L322.4 937.3 L323.5 937.5 L324.6 937.1 L325.7 937.5 L326.8 937.2 L327.9 937.2 L329.0 937.2 L330.1 936.9 L331.2 937.2 L332.3 937.0 L333.4 936.9 L334.5 937.4 L335.6 937.0 L336.7 937.2 L337.8 937.4 L338.9 937.2 L340.0 937.1 L341.1 937.2 L342.2 937.2 L343.3 937.4 L344.4 936.9 L345.5 937.2 L346.6 937.0 L347.7 937.0 L348.8 937.4 L349.9 937.2 L351.0 937.2 L352.1 937.4 L353.2 937.5 L354.3 937.2 L355.4 937.3 L356.5 937.2 L357.6 937.2 L358.7 937.3 L359.8 937.2 L360.9 937.2 L362.0 937.2 L363.1 937.5 L364.2 937.3 L365.3 937.5 L366.4 937.5 L367.5 937.0 L368.6 937.2 L369.7 937.5 L370.8 937.4 L371.9 936.9 L373.0 936.9 L374.1 937.2 L375.2 936.9 L376.3 937.0 L377.4 936.9 L378.5 937.3 L379.6 937.4 L380.7 937.5 L381.8 937.0 L382.9 937.4 L384.0 937.3 L385.1 937.0 L386.2 937.5 L387.3 937.5 L388.4 937.0 L389.5 937.5 L390.6 937.1 L391.7 937.2 L392.8 937.5 L393.9 937.4 L395.0 937.0 L395.8 937.2 L397.0 949.7 L398.2 937.2 L399.3 937.2 L400.6 957.8 L401.9 937.2 L402.7 936.9 L403.8 937.2 L404.9 937.2 L406.0 936.9 L407.1 937.1 L408.2 937.3 L409.3 937.2 L410.4 936.9 L411.5 937.5 L412.6 937.4 L413.7 937.5 L414.8 936.9 L415.9 937.0 L417.0 936.9 L418.1 937.4 L419.2 937.0 L420.3 936.9 L421.4 937.1 L422.5 937.5 L423.6 937.4 L424.7 937.0 L425.8 937.0 L426.9 937.5 L428.0 937.2 L429.1 937.3 L430.2 936.9 L431.3 936.9 L432.4 937.3 L433.5 937.1 L434.6 936.9 L435.7 937.5 L436.8 937.3 L437.9 937.4 L439.0 940.4 L440.1 940.4 L441.2 940.1 L442.3 940.5 L443.4 940.0 L444.5 940.0 L445.6 940.0 L446.7 940.0 L447.8 940.1 L448.9 940.1 L450.0 940.0 L451.1 939.9 L452.2 939.9 L453.3 940.2 L454.4 940.2 L455.5 937.5 L456.6 936.9 L457.7 937.4 L458.8 937.2 L459.9 937.2 L461.0 937.4 L462.1 937.1 L462.5 937.2 L464.0 960.6 L465.5 937.2 L466.5 937.1 L467.6 937.4 L468.7 937.3 L469.8 937.3 L470.9 937.1 L472.0 937.1 L473.1 936.9 L474.2 936.9 L475.3 936.9 L476.4 937.4 L477.5 937.0 L478.6 937.0 L479.7 936.9 L480.8 937.4 L481.9 937.5 L483.0 937.3 L484.1 937.0 L485.2 937.0 L486.3 937.1 L487.4 937.2 L488.5 940.0 L489.6 940.3 L490.7 940.0 L491.8 940.3 L492.9 939.9 L494.0 939.9 L495.1 940.0 L495.7 937.2 L497.0 958.0 L498.3 937.2 L499.5 937.0 L500.6 936.9 L501.7 937.1 L502.8 936.9 L503.9 936.9 L505.0 937.1 L506.1 937.0 L507.2 937.3 L508.3 937.2 L509.4 937.4 L510.5 937.3 L511.6 937.4 L513.0 937.2 L514.2 963.6 L515.4 937.2 L516.0 937.5 L517.1 937.0 L518.2 937.4 L519.3 937.3 L520.4 936.9 L521.5 937.4 L522.6 937.5 L523.7 937.3 L524.1 937.2 L525.3 963.6 L526.5 937.2 L527.0 936.9 L528.1 937.2 L529.2 937.2 L530.3 937.4 L531.4 937.4 L532.5 937.4 L533.6 937.3 L534.7 937.5 L535.8 937.3 L536.9 937.3 L538.0 937.0 L539.1 936.9 L540.2 936.9 L541.3 937.1 L542.4 936.9 L543.5 937.4 L544.6 937.2 L545.7 941.7 L546.8 941.6 L547.9 941.8 L549.0 941.6 L550.1 941.7 L551.2 941.7 L552.3 941.3 L553.4 937.0 L554.5 937.4 L555.6 937.0 L556.7 937.4 L557.8 937.5 L558.9 937.2 L560.0 937.1 L561.1 937.2 L562.2 937.3 L563.3 937.4 L564.4 937.3 L565.5 937.3 L566.6 942.8 L567.7 943.1 L568.8 943.0 L569.9 942.7 L571.0 943.1 L572.1 943.1 L573.2 937.1 L573.6 937.2 L574.9 928.7 L576.2 937.2 L576.5 937.2 L577.6 936.9 L579.0 937.2 L580.4 971.2 L581.8 937.2 L583.1 936.9 L584.2 937.2 L585.3 937.4 L586.4 937.5 L587.5 937.2 L588.6 937.0 L589.7 937.0 L590.8 937.5 L591.9 937.0 L593.0 941.8 L594.1 942.3 L595.2 942.2 L596.3 942.2 L597.4 941.8 L598.5 942.0 L599.6 941.7 L600.7 942.0 L601.8 941.8 L602.9 941.9 L604.0 941.7 L605.1 942.2 L606.5 937.2 L608.0 943.8 L609.5 937.2 L610.6 941.9 L611.7 937.1 L612.8 937.0 L613.9 936.9 L615.0 936.9 L616.1 937.4 L617.2 937.0 L618.3 937.5 L619.4 937.0 L620.5 937.0 L621.6 937.2 L622.7 937.0 L623.8 937.1 L624.9 937.5 L626.0 937.5 L627.1 937.4 L628.2 937.3 L629.3 937.5 L630.4 937.5 L631.5 937.2 L632.6 937.4 L633.7 936.9 L634.8 937.4 L635.9 937.2 L637.0 937.4 L638.1 937.3 L639.2 937.1 L640.3 936.9 L641.4 937.5 L642.5 936.9 L643.6 937.2 L644.7 937.1 L645.8 937.1 L646.9 937.4 L648.0 937.5 L649.1 937.0 L650.2 937.3 L651.3 937.1 L652.4 937.2 L653.5 937.1 L654.6 937.0 L655.7 937.0 L656.8 937.0 L657.9 937.5 L659.0 937.2 L660.1 937.0 L661.2 937.5 L662.3 937.5 L663.4 937.2 L664.5 936.9 L665.6 937.0 L666.7 936.9 L667.8 937.1 L668.9 937.2 L670.4 940.3 L671.9 937.2 L672.2 937.2 L673.3 937.5 L674.4 937.4 L675.5 937.1 L676.6 937.1 L677.7 937.2 L678.8 937.1 L679.9 937.1 L681.0 936.9 L682.1 937.0 L683.2 937.5 L684.3 936.9 L685.4 937.2 L686.5 937.3 L687.6 937.5 L688.7 937.0 L689.8 937.0 L690.9 937.0 L692.0 937.1 L693.1 937.2 L694.2 937.5 L695.3 937.4 L696.4 937.5 L697.5 936.9 L698.6 936.9 L699.7 937.3 L700.8 937.5 L701.9 937.2 L703.0 937.3 L704.1 936.9 L705.2 937.1 L706.3 937.5 L707.4 937.4 L708.5 937.4 L709.6 937.5 L710.7 937.0 L711.8 936.9 L712.9 937.0 L714.0 937.2 L715.1 937.3 L716.2 937.5 L717.3 937.4 L718.4 937.3 L719.5 937.4 L720.6 937.2 L721.7 937.2 L722.8 936.9 L723.9 937.4 L725.0 937.0 L726.1 937.5 L727.2 937.3 L728.3 937.1 L729.4 936.9 L730.5 937.0 L731.6 937.3 L732.7 937.3 L733.8 936.9 L734.9 936.9 L736.0 937.2 L737.1 937.3 L738.2 937.1 L739.3 937.0 L740.4 937.3 L741.5 936.9 L742.6 937.1 L743.7 937.2 L744.8 937.5 L745.9 937.3 L747.0 937.5 L748.1 937.2 L749.2 937.0 L750.3 937.0 L751.1 937.2 L752.6 939.9 L754.1 937.2 L754.7 936.9 L755.8 937.2 L757.0 939.6 L758.2 937.2 L759.1 937.0 L760.2 937.3 L761.3 937.5 L762.4 937.0 L763.5 936.9 L764.6 937.1 L765.7 937.1 L766.8 937.3 L767.9 937.0 L769.0 937.4 L770.1 937.4 L771.2 937.2 L772.3 937.0 L773.4 937.5 L774.5 937.1 L775.6 937.4 L776.7 937.0 L777.8 937.0 L778.9 937.4 L780.0 937.1 L781.1 937.5 L782.2 937.2 L783.3 937.0 L784.4 937.0 L785.5 937.1 L786.6 937.3 L787.7 937.5 L788.8 937.0 L789.9 937.1 L791.0 937.0 L792.1 937.5 L793.2 936.9 L794.3 936.9 L795.4 936.9 L796.5 937.1 L797.6 937.5 L798.7 937.5 L799.8 937.4 L800.5 937.2 L802.0 940.2 L803.5 937.2 L804.2 937.0 L805.3 937.5 L806.4 937.4 L807.5 936.9 L808.6 937.3 L809.7 937.1 L810.8 937.1 L811.9 937.1 L813.0 937.0 L814.1 936.9 L815.2 937.0 L816.3 937.1 L817.4 937.5 L818.5 936.9 L819.6 937.5 L820.7 937.0 L821.8 937.1 L822.9 937.4 L824.0 937.4 L825.1 937.2 L826.2 936.9 L827.3 937.2 L828.4 937.1 L829.5 937.5 L830.6 937.0 L831.7 937.1 L832.8 937.5 L833.9 936.9 L835.0 937.1 L836.1 937.4 L837.2 937.4 L838.3 936.9 L839.4 940.2 L840.5 940.4 L841.6 940.7 L842.7 940.4 L843.8 937.5 L845.0 937.2 L846.5 936.2 L848.0 937.2 L849.3 937.0 L850.4 936.9 L851.5 937.4 L852.6 937.5 L853.7 937.3 L854.8 937.5 L855.9 936.9 L857.0 937.0 L858.1 937.2 L859.2 937.5 L860.3 937.5 L861.4 937.1 L862.5 937.0 L863.6 937.2 L864.7 937.2 L865.8 937.5 L866.9 937.0 L868.0 937.4 L869.1 937.4 L870.2 937.4 L871.3 937.4 L872.4 937.3 L873.5 937.1 L874.6 937.1 L875.7 937.1 L876.8 937.4 L877.9 936.9 L879.0 937.0 L880.1 937.4 L881.2 937.0 L882.0 937.2 L883.5 941.0 L885.0 937.2 L885.6 937.1 L886.7 937.5 L887.8 937.5 L888.9 937.5 L889.9 937.2 L891.2 961.6 L892.5 937.2 L893.3 937.2 L894.4 937.3 L895.5 937.2 L896.6 939.8 L897.7 939.9 L898.8 940.0 L899.9 939.6 L901.0 939.7 L902.1 939.7 L903.2 937.4 L904.3 937.0 L905.4 937.0 L906.5 937.0 L907.6 937.0 L908.7 937.5 L909.8 937.3 L910.9 937.1 L912.0 937.1 L913.1 937.5 L914.2 937.2 L915.3 937.0 L916.4 937.4 L917.5 937.3 L918.6 937.5 L919.7 936.9 L920.8 937.2 L921.9 937.4 L923.0 937.4 L924.1 937.5 L925.2 936.9 L926.3 937.1 L927.4 936.9 L928.5 937.0 L929.6 937.5 L930.5 937.2 L932.0 940.0 L933.5 937.2 L934.0 937.5 L935.1 937.2 L936.2 937.0 L936.8 937.2 L938.0 939.6 L939.2 937.2 L939.5 936.9 L940.6 937.3 L941.7 937.3 L942.8 937.0 L943.9 937.1 L945.0 936.9 L946.1 937.0 L947.2 937.0 L948.0 937.2 L949.4 945.4 L950.8 937.2 L951.6 936.9 L952.7 937.1 L953.8 937.3 L954.9 937.0 L956.0 937.1 L957.1 937.0 L958.2 937.4 L959.3 937.2 L960.4 936.9 L961.5 936.9 L962.6 937.1 L963.7 937.2 L964.8 937.3 L965.9 936.9 L967.0 937.0 L968.1 937.3 L969.2 937.1 L970.3 937.0 L971.4 937.1 L972.5 937.5 L973.6 937.1 L974.7 937.2 L975.8 937.1 L976.9 937.1 L978.0 937.5 L979.1 937.5 L980.2 937.1 L981.3 937.0 L982.4 937.4 L983.5 937.0 L984.6 936.9 L985.7 937.5 L986.8 937.1 L987.7 937.2 L989.3 955.9 L990.9 937.2 L991.2 937.2 L992.3 937.0 L993.4 936.9 L994.5 937.2 L995.6 937.3 L996.7 937.5 L997.8 936.9 L998.9 937.3 L1000.0 937.1 L1001.1 937.2 L1002.2 937.0 L1003.3 937.0 L1004.4 937.2 L1005.5 937.5 L1006.6 936.9 L1007.7 937.2 L1008.8 937.4 L1009.9 937.5 L1011.0 937.0 L1012.1 936.9 L1013.2 937.5 L1014.3 937.5 L1015.4 937.2 L1016.5 936.9 L1017.6 937.5 L1018.7 937.1 L1019.8 937.5 L1020.9 938.4 L1022.0 938.4 L1023.1 938.1 L1024.2 938.4 L1025.3 938.0 L1026.4 938.2 L1027.5 938.0 L1028.6 938.3 L1029.7 937.9 L1030.8 937.2 L1031.9 937.4 L1033.0 936.9 L1034.1 937.4 L1035.2 936.9 L1035.8 937.2 L1037.4 968.3 L1039.0 937.2 L1039.6 937.1 L1040.7 937.1 L1041.8 937.3 L1042.9 937.1 L1044.0 937.3 L1045.1 937.2 L1046.2 937.2 L1047.3 936.9 L1048.4 937.3 L1049.5 937.2 L1050.6 937.0 L1051.7 937.4 L1052.8 937.4 L1053.9 937.2 L1055.0 937.0 L1056.1 937.2 L1057.2 936.9 L1058.3 936.9 L1059.4 937.2 L1060.5 936.9 L1061.6 937.2 L1062.7 937.2 L1063.8 936.9 L1064.9 937.3 L1066.0 936.9 L1067.1 937.4 L1068.2 937.4 L1069.3 937.2 L1070.4 936.9 L1071.5 937.2 L1072.6 937.1 L1073.7 937.5 L1074.8 936.9 L1075.9 937.4 L1077.0 937.5 L1078.1 937.4 L1079.2 937.4 L1080.3 937.0 L1081.4 937.5 L1082.5 937.2 L1083.6 937.5 L1084.7 937.5 L1085.8 937.0 L1086.9 937.4 L1088.0 937.5 L1089.1 936.9 L1090.2 937.1 L1090.6 937.2 L1091.7 961.0 L1093.2 962.6 L1096.2 970.8 L1097.5 937.5 L1099.0 937.5 L1100.1 937.0 L1101.2 937.0 L1102.3 937.2 L1103.4 937.1 L1104.5 936.9 L1105.7 937.2 L1107.0 939.6 L1108.3 937.2 L1108.9 937.3 L1110.0 937.5 L1111.1 937.0 L1112.2 937.4" fill="none" stroke="#9a70c6" stroke-width="1.05" stroke-linejoin="round"/>
<rect x="54.0" y="1076" width="185.9" height="4.6" fill="#8d5cb4"/>
<text x="54.0" y="1094.8" font-size="9.4" fill="#666" textLength="112.3" lengthAdjust="spacingAndGlyphs">CPU Clock Frequency (MHz)</text>
<rect x="244.7" y="1076" width="185.0" height="4.6" fill="#e2c98a"/>
<text x="244.7" y="1094.8" font-size="9.4" fill="#666" textLength="149.3" lengthAdjust="spacingAndGlyphs">GPU Memory Clock Frequency (MHz)</text>
<rect x="434.5" y="1076" width="185.9" height="4.6" fill="#5fd6ba"/>
<text x="434.5" y="1094.8" font-size="9.4" fill="#666" textLength="89.8" lengthAdjust="spacingAndGlyphs">CPU Temperature (°C)</text>
<rect x="625.2" y="1076" width="185.0" height="4.6" fill="#6ba9d6"/>
<text x="625.2" y="1094.8" font-size="9.4" fill="#666" textLength="89.9" lengthAdjust="spacingAndGlyphs">GPU Temperature (°C)</text>
<rect x="815.0" y="1076" width="186.0" height="4.6" fill="#a82a3a"/>
<text x="815.0" y="1094.8" font-size="9.4" fill="#666" textLength="55.7" lengthAdjust="spacingAndGlyphs">GPU Load (%)</text>
<rect x="1005.8" y="1076" width="190.0" height="4.6" fill="#174a75"/>
<text x="1005.8" y="1094.8" font-size="9.4" fill="#666" textLength="58.4" lengthAdjust="spacingAndGlyphs">CPU Utility (%)</text>
</svg>
<span class="t" style="left:1124.00px;top:1111.13px;font-size:11.90px;transform:scaleX(0.9912);color:#555;">Markers</span>
<div class="abs" style="left:1174.5px;top:1109.2px;width:29px;height:14px;border-radius:7px;background:#c8202f"></div>
<div class="abs" style="left:1188.7px;top:1108.4px;width:15.4px;height:15.4px;border-radius:50%;background:#fff;box-shadow:0 1px 3px rgba(0,0,0,.4)"></div>
<span class="t" style="left:1184px;top:1151px;font-size:17px;letter-spacing:-0.6px;color:#fff;text-shadow:1px 1px 1px rgba(0,0,0,.45),-0.5px -0.5px 0 rgba(0,0,0,.12)">PConline</span>
<svg class="abs" style="left:1170px;top:1152px" width="16" height="16" viewBox="0 0 16 16" fill="none" stroke="#fff" stroke-width="1.8"><path d="M3 13.5A6 6 0 1 0 3.5 3" stroke="#bbb" transform="translate(.7 .7)"/><path d="M3 13.5A6 6 0 1 0 3.5 3"/><circle cx="8.5" cy="7" r="1.4" fill="#fff" stroke="#bbb" stroke-width=".6"/></svg>
<div class="abs" style="left:0;top:0;width:1265px;height:1px;background:#707070"></div>
<div class="abs" style="left:0;top:0;width:1px;height:1183px;background:#707070"></div>
<div class="abs" style="left:1264px;top:0;width:1px;height:1183px;background:#707070"></div>
</body></html>
